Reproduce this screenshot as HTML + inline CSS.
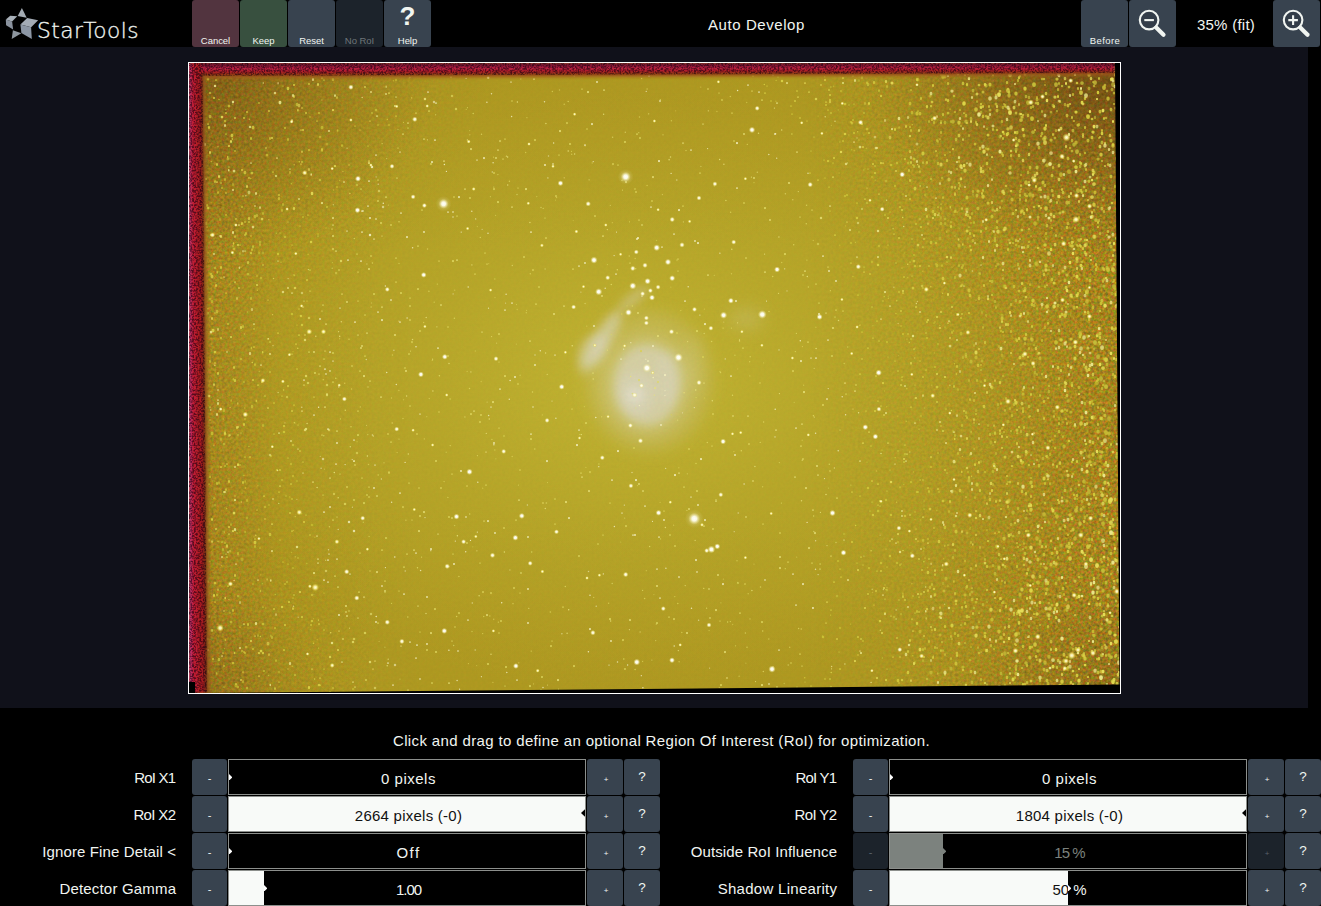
<!DOCTYPE html>
<html lang="en"><head><meta charset="utf-8"><title>StarTools - Auto Develop</title>
<style>
html,body{margin:0;padding:0;background:#000;}
body{width:1321px;height:906px;position:relative;overflow:hidden;font-family:"Liberation Sans","DejaVu Sans",sans-serif;font-size:15px;color:#f1f5f1;}
.abs{position:absolute;}
#topbar{position:absolute;left:0;top:0;width:1321px;height:47px;background:#000;}
.tb{position:absolute;top:0;width:47px;height:47px;border-radius:3px;background:#38434f;}
.tb span{position:absolute;left:0;right:0;top:35px;text-align:center;font-size:9.5px;line-height:12px;letter-spacing:-0.05px;color:#f1f5f1;white-space:nowrap;}
.tb.cancel{background:#52343f;}
.tb.keep{background:#38503f;}
.tb.dis{background:#1c232b;}
.tb.dis span{color:#6f7679;}
#logo{position:absolute;left:37px;top:17.3px;font-family:"DejaVu Sans Light","DejaVu Sans","Liberation Sans",sans-serif;font-weight:200;font-size:21.7px;line-height:28px;letter-spacing:0.45px;color:#eef2ee;white-space:nowrap;-webkit-text-stroke:0.35px #eef2ee;}
#title{position:absolute;left:556px;width:401px;top:15.5px;text-align:center;line-height:18px;letter-spacing:0.57px;color:#f1f5f1;white-space:nowrap;}
#zoomtxt{position:absolute;left:1176px;width:100px;top:15.7px;text-align:center;line-height:18px;letter-spacing:0.26px;color:#f1f5f1;white-space:nowrap;}
#view{position:absolute;left:0;top:47px;width:1308px;height:661px;background:#10111a;}
#panel{position:absolute;left:0;top:708px;width:1321px;height:198px;background:#000;}
#hint{position:absolute;left:0;width:1323px;top:731.7px;text-align:center;line-height:18px;letter-spacing:0.36px;white-space:nowrap;color:#f1f5f1;}
.lbl{position:absolute;text-align:right;line-height:18px;white-space:nowrap;color:#f1f5f1;}
.sb{position:absolute;height:36px;border-radius:3px;background:#38434f;color:#f1f5f1;text-align:center;}
.sb.dis{background:#1c232b;color:#59626a;}
.sb i{position:absolute;left:0;right:0;font-style:normal;text-align:center;}
.sl{position:absolute;width:358px;height:36px;box-sizing:border-box;border:1px solid #8c8f8c;background:#000;overflow:hidden;}
.sl .fill{position:absolute;left:0;top:0;bottom:0;background:#f8faf8;}
.sl .val{position:absolute;left:3px;right:0;top:10px;text-align:center;line-height:18px;color:#f1f5f1;white-space:nowrap;}
.sl .val.dk{color:#111;}
.sl .val.gr{color:#7c827e;}
</style></head>
<body>
<div id="topbar">
<svg class="abs" style="left:0;top:0" width="48" height="47" viewBox="0 0 48 47">
<polygon points="21.9,8.1 26.7,17.8 17.7,16.1" fill="#a3abb3"/>
<polygon points="5.8,19.6 10.2,15.8 17.2,16.3 12.1,21.4" fill="#a8b0b8"/>
<polygon points="5.8,19.6 12.1,21.4 13.1,29.4 6.1,25.3" fill="#8a929e"/>
<polygon points="20.4,24.6 27.2,18 38.1,20.2 31.1,27.3" fill="#a3abb5"/>
<polygon points="20.4,24.6 31.1,27.3 31.8,38.9 21.4,33.1" fill="#8c96a4"/>
<polygon points="12.9,30.2 21.4,33.3 11.7,38.9" fill="#8e969f"/>
</svg>
<div id="logo">StarTools</div>
<div class="tb cancel" style="left:192px"><span>Cancel</span></div>
<div class="tb keep" style="left:240px"><span>Keep</span></div>
<div class="tb" style="left:288px"><span>Reset</span></div>
<div class="tb dis" style="left:336px"><span>No RoI</span></div>
<div class="tb" style="left:384px"><div class="abs" style="left:0;right:0;top:1px;text-align:center;font-size:26px;line-height:30px;font-weight:bold;color:#f1f5f1">?</div><span>Help</span></div>
<div id="title">Auto Develop</div>
<div class="tb" style="left:1081px"><span style="letter-spacing:0.45px;left:1px">Before</span></div>
<div class="tb" style="left:1129px"><svg class="abs" style="left:0;top:0" width="47" height="47" viewBox="0 0 47 47" fill="none" stroke="#f1f5f1">
<circle cx="20.1" cy="20.1" r="9.3" stroke-width="2.1" fill="#333d48"/><path d="M27.2 27.5 L34.5 34.8" stroke-width="4.2" stroke-linecap="round"/><path d="M15.3 20.1 H24.9" stroke-width="2.1"/></svg></div>
<div id="zoomtxt">35% (fit)</div>
<div class="tb" style="left:1273px"><svg class="abs" style="left:0;top:0" width="47" height="47" viewBox="0 0 47 47" fill="none" stroke="#f1f5f1">
<circle cx="20.1" cy="20.1" r="9.3" stroke-width="2.1" fill="#333d48"/><path d="M27.2 27.5 L34.5 34.8" stroke-width="4.2" stroke-linecap="round"/><path d="M15.3 20.1 H24.9 M20.1 15.3 V24.9" stroke-width="2.1"/></svg></div>
</div>
<div id="view">
<div class="abs" style="left:188px;top:15px;width:931px;height:630px;border:1px solid #fff;background:#000;overflow:hidden"><svg class="abs" style="left:0;top:0" width="931" height="630" viewBox="0 0 931 630">
<defs>
<linearGradient id="hg" x1="0" x2="1" y1="0" y2="0">
<stop offset="0" stop-color="#a4821e"/><stop offset="0.04" stop-color="#a88c1e"/><stop offset="0.10" stop-color="#ae981f"/><stop offset="0.2" stop-color="#b09c22"/>
<stop offset="0.78" stop-color="#b09c22"/><stop offset="0.9" stop-color="#ab911f"/><stop offset="1" stop-color="#a5841d"/>
</linearGradient>
<radialGradient id="cg" cx="0.48" cy="0.5" r="0.5">
<stop offset="0" stop-color="#c4b836" stop-opacity="0.9"/><stop offset="0.45" stop-color="#c2b634" stop-opacity="0.45"/><stop offset="1" stop-color="#c0b432" stop-opacity="0"/>
</radialGradient>
<linearGradient id="vg" x1="0" x2="0" y1="0" y2="1">
<stop offset="0" stop-color="#987818" stop-opacity="0.12"/><stop offset="0.3" stop-color="#987818" stop-opacity="0"/><stop offset="0.7" stop-color="#987818" stop-opacity="0"/><stop offset="1" stop-color="#987818" stop-opacity="0.08"/>
</linearGradient>
<radialGradient id="cnr"><stop offset="0" stop-color="#56300e" stop-opacity="0.72"/><stop offset="0.5" stop-color="#684212" stop-opacity="0.38"/><stop offset="1" stop-color="#805818" stop-opacity="0"/></radialGradient>
<radialGradient id="sg"><stop offset="0" stop-color="#fffffa"/><stop offset="0.38" stop-color="#fffef0" stop-opacity="0.95"/><stop offset="0.7" stop-color="#f4eeb0" stop-opacity="0.45"/><stop offset="1" stop-color="#e8e080" stop-opacity="0"/></radialGradient>
<radialGradient id="sgm"><stop offset="0" stop-color="#fffef0"/><stop offset="0.38" stop-color="#fcf8d0" stop-opacity="0.95"/><stop offset="0.7" stop-color="#f0e898" stop-opacity="0.45"/><stop offset="1" stop-color="#e4da70" stop-opacity="0"/></radialGradient>
<radialGradient id="sgy"><stop offset="0" stop-color="#fffce0"/><stop offset="0.38" stop-color="#f8f0a0" stop-opacity="0.95"/><stop offset="0.7" stop-color="#e8dc60" stop-opacity="0.5"/><stop offset="1" stop-color="#d8cc40" stop-opacity="0"/></radialGradient>
<radialGradient id="sh"><stop offset="0" stop-color="#fff" stop-opacity="0.55"/><stop offset="0.5" stop-color="#f0ecc0" stop-opacity="0.25"/><stop offset="1" stop-color="#e8e090" stop-opacity="0"/></radialGradient>
<linearGradient id="lred" x1="0" x2="1" y1="0" y2="0">
<stop offset="0" stop-color="#b42c70"/><stop offset="0.28" stop-color="#b01c34"/><stop offset="0.62" stop-color="#a01a24"/><stop offset="0.8" stop-color="#8a3018"/><stop offset="1" stop-color="#a4741e" stop-opacity="0"/>
</linearGradient>
<linearGradient id="tred" x1="0" x2="0" y1="0" y2="1">
<stop offset="0" stop-color="#6c1030"/><stop offset="0.28" stop-color="#a01a34"/><stop offset="0.45" stop-color="#b8243c"/><stop offset="0.62" stop-color="#a0201c"/><stop offset="0.78" stop-color="#7c3416"/><stop offset="1" stop-color="#a4741e" stop-opacity="0"/>
</linearGradient>
<filter id="soft" x="0" y="0" width="100%" height="100%"><feGaussianBlur stdDeviation="0.45"/></filter>
<filter id="blur8" x="-50%" y="-50%" width="200%" height="200%"><feGaussianBlur stdDeviation="8"/></filter>
<filter id="blur3" x="-50%" y="-50%" width="200%" height="200%"><feGaussianBlur stdDeviation="3"/></filter>
<filter id="blur5" x="-50%" y="-50%" width="200%" height="200%"><feGaussianBlur stdDeviation="5"/></filter>
<filter id="grain" x="0" y="0" width="100%" height="100%" color-interpolation-filters="sRGB"><feTurbulence type="fractalNoise" baseFrequency="0.36" numOctaves="2" seed="2"/>
<feColorMatrix type="matrix" values="0.95 0 0 0 0.165  0 0.7 0 0 0.165  0 0 0.4 0 -0.08  0 0 0 0 1"/></filter>
<filter id="grain2" x="0" y="0" width="100%" height="100%" color-interpolation-filters="sRGB"><feTurbulence type="fractalNoise" baseFrequency="0.55" numOctaves="2" seed="4"/>
<feColorMatrix type="matrix" values="0 0 0 0 0.1  0 0 0 0 0  0 0 0 0 0.06  3.4 0 0 0 -1.3"/><feComposite in2="SourceGraphic" operator="in"/></filter>
<filter id="sblur" x="-5%" y="-5%" width="110%" height="110%"><feGaussianBlur stdDeviation="0.8"/></filter>
<linearGradient id="gm" x1="0" x2="1" y1="0" y2="0"><stop offset="0" stop-color="#fff" stop-opacity="0.5"/><stop offset="0.09" stop-color="#fff" stop-opacity="0.14"/><stop offset="0.25" stop-color="#fff" stop-opacity="0.04"/><stop offset="0.66" stop-color="#fff" stop-opacity="0.04"/><stop offset="0.85" stop-color="#fff" stop-opacity="0.25"/><stop offset="1" stop-color="#fff" stop-opacity="0.6"/></linearGradient>
<radialGradient id="cm"><stop offset="0" stop-color="#fff" stop-opacity="0.5"/><stop offset="0.55" stop-color="#fff" stop-opacity="0.2"/><stop offset="1" stop-color="#fff" stop-opacity="0"/></radialGradient>
<mask id="gmask"><rect width="931" height="630" fill="url(#gm)"/><ellipse cx="0" cy="0" rx="300" ry="260" fill="url(#cm)"/><ellipse cx="931" cy="0" rx="330" ry="300" fill="url(#cm)"/><ellipse cx="931" cy="630" rx="250" ry="200" fill="url(#cm)" opacity="0.7"/><ellipse cx="0" cy="630" rx="200" ry="160" fill="url(#cm)" opacity="0.6"/></mask>
</defs>
<rect width="931" height="630" fill="url(#hg)"/>
<rect width="931" height="630" fill="url(#cg)"/>
<rect width="931" height="630" fill="url(#vg)"/>
<g filter="url(#blur8)" fill="#dedac2">
<ellipse cx="460" cy="318" rx="62" ry="70" opacity="0.2"/>
<ellipse cx="458" cy="322" rx="44" ry="50" opacity="0.32"/>
<ellipse cx="557" cy="256" rx="18" ry="11" opacity="0.2"/>
<ellipse cx="505" cy="300" rx="10" ry="30" opacity="0.14"/>
</g>
<g filter="url(#blur5)" fill="#dcd9c8">
<ellipse cx="458" cy="322" rx="33" ry="40" opacity="0.62"/>
<ellipse cx="479" cy="314" rx="13" ry="27" opacity="0.3"/>
<ellipse cx="447" cy="331" rx="19" ry="21" opacity="0.5"/>
<ellipse cx="415" cy="274" rx="9" ry="30" transform="rotate(31 415 274)" opacity="0.6"/>
<ellipse cx="404" cy="288" rx="13" ry="19" transform="rotate(31 404 288)" opacity="0.5"/>
<ellipse cx="396" cy="303" rx="8" ry="10" opacity="0.3"/>
<ellipse cx="444" cy="236" rx="19" ry="6" transform="rotate(-38 444 236)" opacity="0.4"/>
</g>
<g filter="url(#blur3)" fill="#e8e6da"><ellipse cx="446" cy="332" rx="9" ry="8" opacity="0.5"/></g>
<g mask="url(#gmask)"><rect width="931" height="630" filter="url(#grain)"/></g>
<ellipse cx="931" cy="0" rx="260" ry="200" fill="url(#cnr)"/>
<ellipse cx="0" cy="0" rx="250" ry="200" fill="url(#cnr)" opacity="0.7"/>
<ellipse cx="0" cy="630" rx="140" ry="120" fill="url(#cnr)" opacity="0.35"/>
<ellipse cx="931" cy="630" rx="170" ry="130" fill="url(#cnr)" opacity="0.35"/>
<g filter="url(#soft)">
<path d="M109.9 360.7h0" stroke="#c4bc38" stroke-width="1.25" stroke-linecap="round" fill="none" opacity="0.6"/>
<path d="M709.6 292.7h0M124.9 531.7h0" stroke="#c4bc38" stroke-width="1.25" stroke-linecap="round" fill="none" opacity="0.8"/>
<path d="M580.1 8.2h0" stroke="#c4bc38" stroke-width="1.25" stroke-linecap="round" fill="none" opacity="0.9"/>
<path d="M726.0 456.6h0M9.8 343.3h0M97.8 138.4h0M711.6 459.4h0M781.4 464.6h0M35.6 585.4h0M720.7 482.2h0" stroke="#c4bc38" stroke-width="1.5" stroke-linecap="round" fill="none" opacity="0.6"/>
<path d="M730.5 357.1h0M698.3 458.3h0M34.4 356.1h0M714.7 421.4h0M586.9 38.2h0M747.8 447.5h0M124.5 555.7h0M73.3 520.8h0M633.6 573.0h0M26.2 220.0h0M672.2 10.5h0M1.0 276.8h0M649.2 47.1h0M695.5 328.1h0M674.9 72.1h0M683.5 529.4h0M642.4 62.5h0M742.6 322.3h0M36.9 46.7h0M635.7 13.7h0M70.3 308.5h0" stroke="#c4bc38" stroke-width="1.5" stroke-linecap="round" fill="none" opacity="0.8"/>
<path d="M674.8 107.1h0M29.0 83.8h0M11.3 274.4h0M86.3 531.6h0M60.3 56.3h0M735.5 345.1h0M693.4 595.1h0M144.7 127.1h0M58.4 249.1h0M650.9 79.1h0M92.0 199.2h0M683.9 262.7h0M117.8 500.6h0" stroke="#c4bc38" stroke-width="1.5" stroke-linecap="round" fill="none" opacity="0.9"/>
<path d="M68.0 212.5v1M726.5 627.4v1M35.3 468.7v1" stroke="#c4bc38" stroke-width="1.5" stroke-linecap="round" fill="none" opacity="0.8"/>
<path d="M748.8 610.0v1M710.1 63.9v1M43.3 75.6v1M69.9 466.0v1" stroke="#c4bc38" stroke-width="1.5" stroke-linecap="round" fill="none" opacity="0.9"/>
<path d="M171 67h0M106 360h0M94 23h0M726 285h0M689 625h0M616 619h0M699 294h0M733 520h0M650 589h0M91 170h0" stroke="#c4bc38" stroke-width="1.75" stroke-linecap="round" fill="none" opacity="0.6"/>
<path d="M866 217h0M791 103h0M761 46h0M798 539h0M848 283h0" stroke="#c4bc38" stroke-width="1.75" stroke-linecap="round" fill="none" opacity="0.7"/>
<path d="M608 624h0M701 407h0M625 74h0M622 88h0M51 564h0M726 550h0M678 364h0M697 486h0M29 526h0M118 123h0M713 205h0M838 121h0M52 370h0M787 237h0M768 8h0M64 521h0M821 610h0M726 335h0M679 106h0M665 41h0M616 627h0M589 14h0M681 448h0M790 210h0" stroke="#c4bc38" stroke-width="1.75" stroke-linecap="round" fill="none" opacity="0.8"/>
<path d="M37 491h0M723 213h0M117 452h0M751 76h0M780 164h0M698 428h0M25 435h0M683 439h0M761 89h0M752 141h0M691 443h0M90 619h0" stroke="#c4bc38" stroke-width="1.75" stroke-linecap="round" fill="none" opacity="0.9"/>
<path d="M868 231h0" stroke="#c4bc38" stroke-width="1.75" stroke-linecap="round" fill="none" opacity="1.0"/>
<path d="M748 92v1M20 7v1M784 131v1" stroke="#c4bc38" stroke-width="1.75" stroke-linecap="round" fill="none" opacity="0.6"/>
<path d="M837 484v1M836 301v1M798 621v1" stroke="#c4bc38" stroke-width="1.75" stroke-linecap="round" fill="none" opacity="0.7"/>
<path d="M785 282v1M713 7v1M51 190v1M860 459v1M54 618v1M36 368v1M734 597v1M69 572v1M811 299v1" stroke="#c4bc38" stroke-width="1.75" stroke-linecap="round" fill="none" opacity="0.8"/>
<path d="M10 9v1M789 584v1" stroke="#c4bc38" stroke-width="1.75" stroke-linecap="round" fill="none" opacity="0.9"/>
<path d="M874 373v1" stroke="#c4bc38" stroke-width="1.75" stroke-linecap="round" fill="none" opacity="1.0"/>
<path d="M782 160h0M48 470h0M790 233h0M121 54h0M766 173h0M99 606h0M670 169h0M761 259h0M670 77h0" stroke="#c4bc38" stroke-width="2.0" stroke-linecap="round" fill="none" opacity="0.6"/>
<path d="M869 34h0M871 530h0" stroke="#c4bc38" stroke-width="2.0" stroke-linecap="round" fill="none" opacity="0.7"/>
<path d="M710 537h0M707 200h0M709 388h0M749 281h0M712 551h0M865 348h0M758 410h0M909 144h0M70 40h0M15 219h0M49 372h0M673 10h0M55 319h0M26 250h0M655 471h0M14 398h0M54 133h0M724 533h0M841 451h0M722 490h0M109 495h0M32 120h0M723 176h0" stroke="#c4bc38" stroke-width="2.0" stroke-linecap="round" fill="none" opacity="0.8"/>
<path d="M183 50h0M29 527h0M664 13h0M56 159h0M768 106h0M815 485h0M734 417h0M792 307h0M71 179h0M19 250h0M27 17h0M7 430h0" stroke="#c4bc38" stroke-width="2.0" stroke-linecap="round" fill="none" opacity="0.9"/>
<path d="M913 98h0" stroke="#c4bc38" stroke-width="2.0" stroke-linecap="round" fill="none" opacity="1.0"/>
<path d="M792 398v1M752 154v1M31 156v1M44 121v1M764 368v1M779 175v1M799 362v1M680 4v1M793 249v1" stroke="#c4bc38" stroke-width="2.0" stroke-linecap="round" fill="none" opacity="0.6"/>
<path d="M752 58v1M849 156v1" stroke="#c4bc38" stroke-width="2.0" stroke-linecap="round" fill="none" opacity="0.7"/>
<path d="M830 570v1M847 533v1M870 20v1M877 239v1M892 271v1M673 14v1M780 317v1M814 215v1M931 610v1M698 23v1M777 207v1M821 345v1M911 456v1M7 181v1M853 48v1M4 562v1M740 58v1" stroke="#c4bc38" stroke-width="2.0" stroke-linecap="round" fill="none" opacity="0.8"/>
<path d="M743 521v1M817 335v1M834 300v1M777 349v1" stroke="#c4bc38" stroke-width="2.0" stroke-linecap="round" fill="none" opacity="0.9"/>
<path d="M827 88v1M895 590v1M804 66v1M820 29v1M896 387v1M814 75v1" stroke="#c4bc38" stroke-width="2.0" stroke-linecap="round" fill="none" opacity="1.0"/>
<path d="M97 433h0M735 485h0" stroke="#c4bc38" stroke-width="2.25" stroke-linecap="round" fill="none" opacity="0.6"/>
<path d="M895 423h0M868 48h0M905 147h0M883 175h0" stroke="#c4bc38" stroke-width="2.25" stroke-linecap="round" fill="none" opacity="0.7"/>
<path d="M38 401h0M686 103h0M821 605h0M772 562h0M105 532h0M98 519h0M51 402h0M776 580h0M675 50h0M737 270h0M918 172h0M756 314h0M683 244h0M814 313h0M690 278h0M837 133h0M918 483h0M76 333h0" stroke="#c4bc38" stroke-width="2.25" stroke-linecap="round" fill="none" opacity="0.8"/>
<path d="M729 429h0M829 484h0M106 612h0M804 168h0M641 616h0M753 579h0M834 486h0M822 368h0M709 308h0M81 309h0M81 279h0" stroke="#c4bc38" stroke-width="2.25" stroke-linecap="round" fill="none" opacity="0.9"/>
<path d="M804 12h0M922 511h0" stroke="#c4bc38" stroke-width="2.25" stroke-linecap="round" fill="none" opacity="1.0"/>
<path d="M783 150v1M807 390v1M756 160v1M777 524v1" stroke="#c4bc38" stroke-width="2.25" stroke-linecap="round" fill="none" opacity="0.6"/>
<path d="M906 54v1M866 450v1M867 459v1M900 118v1M827 276v1M836 280v1" stroke="#c4bc38" stroke-width="2.25" stroke-linecap="round" fill="none" opacity="0.7"/>
<path d="M68 152v1M881 483v1M804 502v1M794 541v1M782 505v1M869 26v1M775 630v1M774 294v1M816 622v1M911 388v1M906 485v1M910 157v1M832 368v1M809 341v1M83 574v1M864 132v1M764 494v1M723 3v1M806 238v1M829 17v1" stroke="#c4bc38" stroke-width="2.25" stroke-linecap="round" fill="none" opacity="0.8"/>
<path d="M822 241v1M822 471v1M825 341v1" stroke="#c4bc38" stroke-width="2.25" stroke-linecap="round" fill="none" opacity="0.9"/>
<path d="M906 587v1M776 11v1M919 168v1M886 435v1M838 619v1" stroke="#c4bc38" stroke-width="2.25" stroke-linecap="round" fill="none" opacity="1.0"/>
<path d="M2 573h0M5 379h0" stroke="#c4bc38" stroke-width="2.5" stroke-linecap="round" fill="none" opacity="0.6"/>
<path d="M895 436h0" stroke="#c4bc38" stroke-width="2.5" stroke-linecap="round" fill="none" opacity="0.7"/>
<path d="M678 140h0M756 156h0M905 23h0M698 527h0M860 207h0M848 526h0M26 205h0M853 16h0M648 533h0M905 286h0M912 429h0M642 624h0M58 625h0M870 322h0M21 30h0M860 540h0" stroke="#c4bc38" stroke-width="2.5" stroke-linecap="round" fill="none" opacity="0.8"/>
<path d="M825 552h0M850 224h0M187 47h0M716 391h0M738 616h0M608 1h0M860 323h0M848 397h0" stroke="#c4bc38" stroke-width="2.5" stroke-linecap="round" fill="none" opacity="0.9"/>
<path d="M852 501h0" stroke="#c4bc38" stroke-width="2.5" stroke-linecap="round" fill="none" opacity="1.0"/>
<path d="M754 520v1M787 347v1" stroke="#c4bc38" stroke-width="2.5" stroke-linecap="round" fill="none" opacity="0.6"/>
<path d="M840 34v1M926 578v1M860 328v1M891 103v1M876 41v1M896 454v1M822 461v1" stroke="#c4bc38" stroke-width="2.5" stroke-linecap="round" fill="none" opacity="0.7"/>
<path d="M827 237v1M869 242v1M812 610v1M899 425v1M17 160v1M928 194v1M883 77v1M782 55v1M930 17v1M882 426v1M720 4v1M783 619v1M880 139v1M108 41v1M839 506v1M777 291v1M837 33v1M836 131v1M876 217v1M839 109v1M854 395v1M896 340v1" stroke="#c4bc38" stroke-width="2.5" stroke-linecap="round" fill="none" opacity="0.8"/>
<path d="M839 183v1M679 21v1M767 76v1M806 177v1M30 596v1M840 343v1" stroke="#c4bc38" stroke-width="2.5" stroke-linecap="round" fill="none" opacity="0.9"/>
<path d="M876 427v1M774 20v1M901 217v1M846 9v1" stroke="#c4bc38" stroke-width="2.5" stroke-linecap="round" fill="none" opacity="1.0"/>
<path d="M5 564h0M74 190h0M138 81h0M5 1h0M44 183h0" stroke="#c4bc38" stroke-width="2.75" stroke-linecap="round" fill="none" opacity="0.6"/>
<path d="M904 572h0M914 137h0M862 49h0M820 177h0M918 28h0" stroke="#c4bc38" stroke-width="2.75" stroke-linecap="round" fill="none" opacity="0.7"/>
<path d="M832 302h0M869 533h0M908 115h0M866 75h0M801 47h0M49 533h0M785 545h0M731 156h0M35 381h0M893 199h0M863 542h0M697 118h0M705 554h0" stroke="#c4bc38" stroke-width="2.75" stroke-linecap="round" fill="none" opacity="0.8"/>
<path d="M59 211h0M6 122h0" stroke="#c4bc38" stroke-width="2.75" stroke-linecap="round" fill="none" opacity="0.9"/>
<path d="M926 347h0" stroke="#c4bc38" stroke-width="2.75" stroke-linecap="round" fill="none" opacity="1.0"/>
<path d="M53 496v1M813 252v1M751 175v1" stroke="#c4bc38" stroke-width="2.75" stroke-linecap="round" fill="none" opacity="0.6"/>
<path d="M900 25v1M906 400v1M910 234v1M923 230v1M846 309v1M913 584v1" stroke="#c4bc38" stroke-width="2.75" stroke-linecap="round" fill="none" opacity="0.7"/>
<path d="M918 204v1M900 476v1M851 295v1M810 505v1M6 569v1M806 510v1M930 375v1M906 173v1M888 198v1M914 432v1M884 67v1M784 27v1M912 393v1M899 400v1M858 519v1M21 53v1M922 183v1" stroke="#c4bc38" stroke-width="2.75" stroke-linecap="round" fill="none" opacity="0.8"/>
<path d="M66 153v1M803 218v1M789 145v1" stroke="#c4bc38" stroke-width="2.75" stroke-linecap="round" fill="none" opacity="0.9"/>
<path d="M927 592v1M922 113v1M874 129v1M926 496v1M922 490v1" stroke="#c4bc38" stroke-width="2.75" stroke-linecap="round" fill="none" opacity="1.0"/>
<path d="M882 349h0M859 546h0M783 529h0" stroke="#c4bc38" stroke-width="3.0" stroke-linecap="round" fill="none" opacity="0.8"/>
<path d="M871 150h0M878 212h0" stroke="#c4bc38" stroke-width="3.0" stroke-linecap="round" fill="none" opacity="1.0"/>
<path d="M851 480v1M827 86v1M900 393v1M811 73v1" stroke="#c4bc38" stroke-width="3.0" stroke-linecap="round" fill="none" opacity="0.7"/>
<path d="M797 22v1M762 605v1M870 515v1" stroke="#c4bc38" stroke-width="3.0" stroke-linecap="round" fill="none" opacity="0.8"/>
<path d="M780 417v1M782 298v1" stroke="#c4bc38" stroke-width="3.0" stroke-linecap="round" fill="none" opacity="0.9"/>
<path d="M848 104v1M821 104v1" stroke="#c4bc38" stroke-width="3.0" stroke-linecap="round" fill="none" opacity="1.0"/>
<path d="M837 455h0M928 339h0" stroke="#c4bc38" stroke-width="3.25" stroke-linecap="round" fill="none" opacity="0.7"/>
<path d="M929 498h0M804 147h0M774 604h0" stroke="#c4bc38" stroke-width="3.25" stroke-linecap="round" fill="none" opacity="0.8"/>
<path d="M833 54h0M868 16h0" stroke="#c4bc38" stroke-width="3.25" stroke-linecap="round" fill="none" opacity="1.0"/>
<path d="M824 449v1M820 437v1M860 593v1M920 370v1M764 58v1M885 81v1" stroke="#c4bc38" stroke-width="3.25" stroke-linecap="round" fill="none" opacity="0.8"/>
<path d="M827 30v1M897 181v1" stroke="#c4bc38" stroke-width="3.25" stroke-linecap="round" fill="none" opacity="1.0"/>
<path d="M879 338h0" stroke="#c4bc38" stroke-width="3.5" stroke-linecap="round" fill="none" opacity="0.7"/>
<path d="M837 600h0M792 44h0" stroke="#c4bc38" stroke-width="3.5" stroke-linecap="round" fill="none" opacity="0.8"/>
<path d="M881 285h0" stroke="#c4bc38" stroke-width="3.5" stroke-linecap="round" fill="none" opacity="1.0"/>
<path d="M859 551v1" stroke="#c4bc38" stroke-width="3.5" stroke-linecap="round" fill="none" opacity="0.7"/>
<path d="M828 81v1M747 1v1M855 451v1M816 590v1" stroke="#c4bc38" stroke-width="3.5" stroke-linecap="round" fill="none" opacity="0.8"/>
<path d="M893 20h0M890 622h0M844 69h0M930 542h0" stroke="#c4bc38" stroke-width="3.75" stroke-linecap="round" fill="none" opacity="0.8"/>
<path d="M924 21v1M873 618v1M920 355v1" stroke="#c4bc38" stroke-width="3.75" stroke-linecap="round" fill="none" opacity="0.7"/>
<path d="M909 293v1M912 315v1M900 428v1M925 223v1" stroke="#c4bc38" stroke-width="3.75" stroke-linecap="round" fill="none" opacity="0.8"/>
<path d="M914 507v1M906 279v1M917 323v1M871 3v1M845 21v1" stroke="#c4bc38" stroke-width="3.75" stroke-linecap="round" fill="none" opacity="1.0"/>
<path d="M121.3 566.5h0M629.1 53.1h0" stroke="#c8be34" stroke-width="1.25" stroke-linecap="round" fill="none" opacity="0.8"/>
<path d="M656.6 162.9h0M637.2 69.1h0M650.7 182.2h0" stroke="#c8be34" stroke-width="1.25" stroke-linecap="round" fill="none" opacity="0.9"/>
<path d="M687.3 310.5h0M4.8 581.3h0M713.8 313.5h0M715.6 190.0h0M71.7 511.8h0M797.4 253.6h0M734.6 488.1h0M746.0 156.9h0" stroke="#c8be34" stroke-width="1.5" stroke-linecap="round" fill="none" opacity="0.6"/>
<path d="M696.0 522.1h0M5.6 364.9h0M125.9 474.3h0M662.6 86.7h0M686.2 117.2h0M691.1 347.5h0M204.4 17.8h0M644.5 23.3h0M701.0 260.1h0M754.6 495.8h0M22.3 98.4h0M650.1 110.1h0M112.7 450.8h0M150.6 117.6h0M12.0 168.7h0M699.2 233.2h0M718.7 214.4h0M665.3 87.5h0" stroke="#c8be34" stroke-width="1.5" stroke-linecap="round" fill="none" opacity="0.8"/>
<path d="M724.4 408.9h0M39.9 536.5h0M735.1 437.9h0M773.4 393.4h0M55.8 345.1h0" stroke="#c8be34" stroke-width="1.5" stroke-linecap="round" fill="none" opacity="0.9"/>
<path d="M781.0 465.6v1" stroke="#c8be34" stroke-width="1.5" stroke-linecap="round" fill="none" opacity="0.6"/>
<path d="M2.7 176.3v1M780.8 391.3v1M56.2 418.1v1M42.2 337.0v1M745.3 532.0v1M81.9 572.3v1" stroke="#c8be34" stroke-width="1.5" stroke-linecap="round" fill="none" opacity="0.8"/>
<path d="M744.3 593.1v1" stroke="#c8be34" stroke-width="1.5" stroke-linecap="round" fill="none" opacity="0.9"/>
<path d="M53 430h0M686 89h0M106 141h0M137 165h0M108 262h0M32 1h0M678 399h0M30 348h0M41 221h0M135 530h0" stroke="#c8be34" stroke-width="1.75" stroke-linecap="round" fill="none" opacity="0.6"/>
<path d="M874 359h0" stroke="#c8be34" stroke-width="1.75" stroke-linecap="round" fill="none" opacity="0.7"/>
<path d="M91 477h0M166 63h0M74 544h0M179 83h0M111 163h0M99 501h0M756 264h0M636 115h0M851 294h0M698 504h0M736 495h0M644 100h0M882 334h0M804 382h0M745 260h0M668 500h0M104 535h0M714 131h0M94 499h0M792 589h0M618 58h0M693 387h0M129 171h0M103 182h0M831 482h0M51 182h0M118 238h0M794 103h0" stroke="#c8be34" stroke-width="1.75" stroke-linecap="round" fill="none" opacity="0.8"/>
<path d="M699 182h0M85 371h0M34 590h0M846 240h0M845 282h0M135 606h0M727 466h0M734 478h0M622 623h0M641 148h0" stroke="#c8be34" stroke-width="1.75" stroke-linecap="round" fill="none" opacity="0.9"/>
<path d="M7 590v1M670 17v1M796 434v1M792 318v1" stroke="#c8be34" stroke-width="1.75" stroke-linecap="round" fill="none" opacity="0.6"/>
<path d="M30 419v1M854 207v1M797 85v1M770 98v1M848 245v1M769 326v1M801 105v1M883 303v1M813 365v1M842 275v1M786 434v1M857 175v1M788 38v1M762 58v1M42 461v1" stroke="#c8be34" stroke-width="1.75" stroke-linecap="round" fill="none" opacity="0.8"/>
<path d="M17 443v1M87 597v1M838 447v1" stroke="#c8be34" stroke-width="1.75" stroke-linecap="round" fill="none" opacity="0.9"/>
<path d="M876 346v1M826 614v1M861 420v1M856 223v1M873 245v1" stroke="#c8be34" stroke-width="1.75" stroke-linecap="round" fill="none" opacity="1.0"/>
<path d="M660 42h0M189 62h0M726 449h0M760 341h0M21 357h0M746 259h0M26 442h0M5 21h0M80 442h0M726 87h0M41 550h0" stroke="#c8be34" stroke-width="2.0" stroke-linecap="round" fill="none" opacity="0.6"/>
<path d="M856 22h0M863 377h0" stroke="#c8be34" stroke-width="2.0" stroke-linecap="round" fill="none" opacity="0.7"/>
<path d="M894 444h0M848 597h0M848 441h0M815 41h0M674 578h0M747 201h0M33 125h0M70 190h0M779 409h0M749 390h0M798 66h0M736 132h0M710 620h0M104 505h0M46 88h0M757 346h0M37 152h0M114 154h0M913 561h0M582 38h0M777 353h0M750 429h0M917 399h0M877 244h0M148 124h0M36 480h0M921 427h0" stroke="#c8be34" stroke-width="2.0" stroke-linecap="round" fill="none" opacity="0.8"/>
<path d="M66 476h0M813 518h0M70 4h0M93 417h0M725 192h0M53 588h0M842 415h0" stroke="#c8be34" stroke-width="2.0" stroke-linecap="round" fill="none" opacity="0.9"/>
<path d="M845 551h0" stroke="#c8be34" stroke-width="2.0" stroke-linecap="round" fill="none" opacity="1.0"/>
<path d="M714 626v1M726 599v1" stroke="#c8be34" stroke-width="2.0" stroke-linecap="round" fill="none" opacity="0.6"/>
<path d="M898 452v1M848 311v1M830 183v1M780 72v1" stroke="#c8be34" stroke-width="2.0" stroke-linecap="round" fill="none" opacity="0.7"/>
<path d="M766 487v1M919 541v1M5 84v1M66 483v1M774 202v1M766 372v1M903 338v1M736 585v1M99 76v1M840 285v1M21 298v1M71 181v1M760 448v1M776 539v1M875 531v1M74 150v1M36 116v1M748 77v1M837 391v1M869 494v1M931 419v1M58 437v1M890 154v1M752 145v1M848 34v1M848 542v1" stroke="#c8be34" stroke-width="2.0" stroke-linecap="round" fill="none" opacity="0.8"/>
<path d="M722 67v1M769 390v1M773 362v1M20 553v1M54 263v1M788 317v1M762 573v1M7 441v1M81 75v1M62 75v1M763 269v1" stroke="#c8be34" stroke-width="2.0" stroke-linecap="round" fill="none" opacity="0.9"/>
<path d="M892 183v1M865 353v1M891 99v1M899 4v1" stroke="#c8be34" stroke-width="2.0" stroke-linecap="round" fill="none" opacity="1.0"/>
<path d="M764 548h0M46 433h0M108 418h0M798 467h0" stroke="#c8be34" stroke-width="2.25" stroke-linecap="round" fill="none" opacity="0.6"/>
<path d="M783 624h0M832 112h0M919 451h0M904 19h0M853 244h0M819 419h0M772 63h0M884 626h0" stroke="#c8be34" stroke-width="2.25" stroke-linecap="round" fill="none" opacity="0.7"/>
<path d="M823 306h0M886 165h0M108 306h0M739 476h0M927 403h0M722 27h0M709 479h0M917 243h0M664 57h0M813 540h0M36 403h0M722 276h0M121 472h0M696 152h0M805 586h0M682 383h0M894 389h0M85 340h0M26 300h0M724 102h0" stroke="#c8be34" stroke-width="2.25" stroke-linecap="round" fill="none" opacity="0.8"/>
<path d="M86 565h0M65 284h0M812 268h0M654 78h0M827 182h0M101 291h0" stroke="#c8be34" stroke-width="2.25" stroke-linecap="round" fill="none" opacity="0.9"/>
<path d="M838 133h0" stroke="#c8be34" stroke-width="2.25" stroke-linecap="round" fill="none" opacity="1.0"/>
<path d="M810 283v1M133 87v1" stroke="#c8be34" stroke-width="2.25" stroke-linecap="round" fill="none" opacity="0.6"/>
<path d="M867 67v1M885 212v1M890 61v1M913 430v1M870 355v1M905 469v1M881 182v1" stroke="#c8be34" stroke-width="2.25" stroke-linecap="round" fill="none" opacity="0.7"/>
<path d="M771 122v1M772 115v1M784 128v1M842 44v1M896 294v1M35 347v1M884 31v1M925 217v1M926 123v1M834 345v1M853 277v1M766 214v1M745 59v1M891 91v1M697 7v1M857 170v1M813 58v1M792 616v1M752 69v1M49 490v1" stroke="#c8be34" stroke-width="2.25" stroke-linecap="round" fill="none" opacity="0.8"/>
<path d="M797 165v1M829 445v1M766 570v1M822 268v1M808 164v1M823 352v1M808 158v1M769 572v1M773 204v1" stroke="#c8be34" stroke-width="2.25" stroke-linecap="round" fill="none" opacity="0.9"/>
<path d="M888 534v1M896 35v1M859 563v1M822 92v1M897 229v1" stroke="#c8be34" stroke-width="2.25" stroke-linecap="round" fill="none" opacity="1.0"/>
<path d="M200 62h0M7 404h0M683 114h0" stroke="#c8be34" stroke-width="2.5" stroke-linecap="round" fill="none" opacity="0.6"/>
<path d="M902 299h0M840 354h0M918 403h0M817 44h0M848 519h0M908 204h0" stroke="#c8be34" stroke-width="2.5" stroke-linecap="round" fill="none" opacity="0.7"/>
<path d="M847 493h0M877 356h0M76 444h0M852 73h0M866 373h0M766 399h0M840 179h0M2 0h0M36 58h0M840 166h0M881 85h0M831 394h0M804 0h0M824 473h0M806 175h0M881 484h0" stroke="#c8be34" stroke-width="2.5" stroke-linecap="round" fill="none" opacity="0.8"/>
<path d="M96 174h0M834 399h0M708 100h0M708 500h0M656 133h0" stroke="#c8be34" stroke-width="2.5" stroke-linecap="round" fill="none" opacity="0.9"/>
<path d="M845 144h0M860 556h0M883 399h0" stroke="#c8be34" stroke-width="2.5" stroke-linecap="round" fill="none" opacity="1.0"/>
<path d="M831 128v1M861 391v1M729 16v1M917 406v1M792 49v1M856 264v1M814 44v1" stroke="#c8be34" stroke-width="2.5" stroke-linecap="round" fill="none" opacity="0.7"/>
<path d="M890 324v1M883 320v1M813 90v1M918 456v1M777 52v1M904 244v1M752 160v1M894 629v1M5 92v1M814 539v1M918 301v1M723 49v1" stroke="#c8be34" stroke-width="2.5" stroke-linecap="round" fill="none" opacity="0.8"/>
<path d="M749 100v1M779 152v1M63 343v1M770 94v1" stroke="#c8be34" stroke-width="2.5" stroke-linecap="round" fill="none" opacity="0.9"/>
<path d="M874 525v1M878 164v1M794 53v1M908 272v1M863 216v1M855 491v1M896 189v1M912 240v1M928 390v1M834 583v1M819 70v1M866 545v1" stroke="#c8be34" stroke-width="2.5" stroke-linecap="round" fill="none" opacity="1.0"/>
<path d="M148 8h0M12 622h0M58 455h0" stroke="#c8be34" stroke-width="2.75" stroke-linecap="round" fill="none" opacity="0.6"/>
<path d="M781 597h0M898 216h0M862 9h0M849 291h0M813 138h0" stroke="#c8be34" stroke-width="2.75" stroke-linecap="round" fill="none" opacity="0.7"/>
<path d="M719 100h0M728 560h0M787 539h0M915 296h0M52 296h0M884 586h0M891 527h0M15 518h0M884 411h0M888 182h0M839 468h0M72 215h0M78 92h0M20 477h0M894 133h0M918 385h0M15 494h0M740 429h0M42 559h0" stroke="#c8be34" stroke-width="2.75" stroke-linecap="round" fill="none" opacity="0.8"/>
<path d="M732 531h0M45 186h0M644 3h0" stroke="#c8be34" stroke-width="2.75" stroke-linecap="round" fill="none" opacity="0.9"/>
<path d="M895 124h0M925 187h0" stroke="#c8be34" stroke-width="2.75" stroke-linecap="round" fill="none" opacity="1.0"/>
<path d="M47 622v1M813 292v1" stroke="#c8be34" stroke-width="2.75" stroke-linecap="round" fill="none" opacity="0.6"/>
<path d="M893 438v1M756 59v1M878 605v1M923 26v1M898 430v1M839 250v1M912 496v1M877 3v1M864 42v1" stroke="#c8be34" stroke-width="2.75" stroke-linecap="round" fill="none" opacity="0.7"/>
<path d="M878 629v1M859 620v1M133 64v1M928 175v1M808 47v1M772 270v1M922 77v1M905 572v1M915 125v1M838 389v1M836 225v1M888 444v1" stroke="#c8be34" stroke-width="2.75" stroke-linecap="round" fill="none" opacity="0.8"/>
<path d="M748 202v1M23 370v1M836 490v1" stroke="#c8be34" stroke-width="2.75" stroke-linecap="round" fill="none" opacity="0.9"/>
<path d="M913 355v1M858 617v1M863 112v1M892 127v1M894 165v1M903 74v1" stroke="#c8be34" stroke-width="2.75" stroke-linecap="round" fill="none" opacity="1.0"/>
<path d="M769 4h0" stroke="#c8be34" stroke-width="3.0" stroke-linecap="round" fill="none" opacity="0.7"/>
<path d="M890 216h0M807 41h0" stroke="#c8be34" stroke-width="3.0" stroke-linecap="round" fill="none" opacity="0.8"/>
<path d="M773 222h0M776 532h0" stroke="#c8be34" stroke-width="3.0" stroke-linecap="round" fill="none" opacity="0.9"/>
<path d="M819 358v1M802 379v1" stroke="#c8be34" stroke-width="3.0" stroke-linecap="round" fill="none" opacity="0.6"/>
<path d="M872 482v1" stroke="#c8be34" stroke-width="3.0" stroke-linecap="round" fill="none" opacity="0.7"/>
<path d="M827 610v1M875 383v1M847 200v1M787 294v1M831 531v1M827 603v1M858 526v1M885 244v1" stroke="#c8be34" stroke-width="3.0" stroke-linecap="round" fill="none" opacity="0.8"/>
<path d="M854 119v1M801 21v1" stroke="#c8be34" stroke-width="3.0" stroke-linecap="round" fill="none" opacity="1.0"/>
<path d="M741 33h0" stroke="#c8be34" stroke-width="3.25" stroke-linecap="round" fill="none" opacity="0.7"/>
<path d="M915 216h0M858 627h0M915 223h0M926 226h0M909 96h0M900 118h0" stroke="#c8be34" stroke-width="3.25" stroke-linecap="round" fill="none" opacity="0.8"/>
<path d="M834 331h0" stroke="#c8be34" stroke-width="3.25" stroke-linecap="round" fill="none" opacity="0.9"/>
<path d="M889 62h0" stroke="#c8be34" stroke-width="3.25" stroke-linecap="round" fill="none" opacity="1.0"/>
<path d="M911 394v1M875 597v1M929 273v1" stroke="#c8be34" stroke-width="3.25" stroke-linecap="round" fill="none" opacity="0.7"/>
<path d="M914 527v1M887 79v1M916 401v1" stroke="#c8be34" stroke-width="3.25" stroke-linecap="round" fill="none" opacity="0.8"/>
<path d="M803 556v1M794 628v1" stroke="#c8be34" stroke-width="3.25" stroke-linecap="round" fill="none" opacity="0.9"/>
<path d="M929 517v1M907 8v1" stroke="#c8be34" stroke-width="3.25" stroke-linecap="round" fill="none" opacity="1.0"/>
<path d="M849 588h0" stroke="#c8be34" stroke-width="3.5" stroke-linecap="round" fill="none" opacity="0.8"/>
<path d="M901 399h0" stroke="#c8be34" stroke-width="3.5" stroke-linecap="round" fill="none" opacity="1.0"/>
<path d="M848 201v1" stroke="#c8be34" stroke-width="3.5" stroke-linecap="round" fill="none" opacity="0.7"/>
<path d="M848 475v1M849 519v1M841 131v1M846 160v1" stroke="#c8be34" stroke-width="3.5" stroke-linecap="round" fill="none" opacity="0.8"/>
<path d="M754 13v1" stroke="#c8be34" stroke-width="3.5" stroke-linecap="round" fill="none" opacity="1.0"/>
<path d="M858 102h0M912 355h0M931 322h0M909 272h0" stroke="#c8be34" stroke-width="3.75" stroke-linecap="round" fill="none" opacity="0.8"/>
<path d="M908 319v1M818 7v1M880 108v1" stroke="#c8be34" stroke-width="3.75" stroke-linecap="round" fill="none" opacity="0.7"/>
<path d="M872 111v1M914 460v1M858 624v1" stroke="#c8be34" stroke-width="3.75" stroke-linecap="round" fill="none" opacity="0.8"/>
<path d="M928 95v1M843 55v1" stroke="#c8be34" stroke-width="3.75" stroke-linecap="round" fill="none" opacity="1.0"/>
<path d="M167.1 79.6h0M710.9 378.0h0M128.3 576.6h0M104.0 288.3h0" stroke="#d0c83a" stroke-width="1.25" stroke-linecap="round" fill="none" opacity="0.6"/>
<path d="M220.1 15.1h0M236.7 7.0h0" stroke="#d0c83a" stroke-width="1.25" stroke-linecap="round" fill="none" opacity="0.8"/>
<path d="M100.8 433.9h0M587.1 17.4h0" stroke="#d0c83a" stroke-width="1.25" stroke-linecap="round" fill="none" opacity="0.9"/>
<path d="M612.1 0.1h0M731.7 457.1h0M738.5 504.8h0M76.9 544.9h0M111.3 252.6h0M102.5 489.6h0" stroke="#d0c83a" stroke-width="1.5" stroke-linecap="round" fill="none" opacity="0.6"/>
<path d="M750.7 152.8h0M14.4 538.6h0M182.7 14.4h0M663.9 213.5h0M68.4 227.3h0M52.4 161.5h0M713.9 533.6h0M103.2 603.2h0M722.9 520.8h0M8.9 514.6h0M665.8 598.4h0M794.2 342.7h0M30.0 36.6h0M153.9 108.4h0M723.8 592.7h0M723.3 61.7h0M102.3 120.7h0M59.9 383.6h0" stroke="#d0c83a" stroke-width="1.5" stroke-linecap="round" fill="none" opacity="0.8"/>
<path d="M615.7 614.7h0M6.9 337.1h0" stroke="#d0c83a" stroke-width="1.5" stroke-linecap="round" fill="none" opacity="0.9"/>
<path d="M90.0 608.5v1" stroke="#d0c83a" stroke-width="1.5" stroke-linecap="round" fill="none" opacity="0.6"/>
<path d="M148.6 67.1v1M763.0 427.5v1M71.5 527.6v1M36.4 576.5v1" stroke="#d0c83a" stroke-width="1.5" stroke-linecap="round" fill="none" opacity="0.8"/>
<path d="M764.9 517.9v1" stroke="#d0c83a" stroke-width="1.5" stroke-linecap="round" fill="none" opacity="0.9"/>
<path d="M701 149h0M759 523h0M71 485h0M726 322h0M635 97h0M35 624h0M40 104h0M698 606h0M99 159h0M578 23h0M735 446h0" stroke="#d0c83a" stroke-width="1.75" stroke-linecap="round" fill="none" opacity="0.6"/>
<path d="M825 567h0M845 551h0" stroke="#d0c83a" stroke-width="1.75" stroke-linecap="round" fill="none" opacity="0.7"/>
<path d="M603 51h0M135 17h0M737 307h0M721 199h0M93 333h0M119 152h0M688 508h0M26 539h0M807 203h0M84 109h0M722 301h0M759 482h0M651 506h0M640 124h0M856 380h0M668 140h0M671 433h0M602 43h0M768 149h0M56 394h0M729 48h0M639 47h0M828 570h0M790 559h0M677 348h0" stroke="#d0c83a" stroke-width="1.75" stroke-linecap="round" fill="none" opacity="0.8"/>
<path d="M621 110h0M689 442h0M704 594h0M105 342h0M207 53h0M688 258h0M37 230h0M714 532h0M711 424h0M749 144h0M673 269h0" stroke="#d0c83a" stroke-width="1.75" stroke-linecap="round" fill="none" opacity="0.9"/>
<path d="M785 359v1" stroke="#d0c83a" stroke-width="1.75" stroke-linecap="round" fill="none" opacity="0.6"/>
<path d="M859 260v1M835 480v1" stroke="#d0c83a" stroke-width="1.75" stroke-linecap="round" fill="none" opacity="0.7"/>
<path d="M807 244v1M756 611v1M29 129v1M762 595v1M153 82v1M785 159v1M841 221v1M753 202v1M756 591v1M770 202v1M713 624v1M812 340v1M690 27v1M752 11v1" stroke="#d0c83a" stroke-width="1.75" stroke-linecap="round" fill="none" opacity="0.8"/>
<path d="M66 301v1M37 426v1M778 354v1M63 186v1M26 118v1M751 544v1" stroke="#d0c83a" stroke-width="1.75" stroke-linecap="round" fill="none" opacity="0.9"/>
<path d="M832 122v1" stroke="#d0c83a" stroke-width="1.75" stroke-linecap="round" fill="none" opacity="1.0"/>
<path d="M11 524h0M712 263h0M8 265h0M797 252h0M160 102h0M694 238h0M110 246h0" stroke="#d0c83a" stroke-width="2.0" stroke-linecap="round" fill="none" opacity="0.6"/>
<path d="M888 436h0" stroke="#d0c83a" stroke-width="2.0" stroke-linecap="round" fill="none" opacity="0.7"/>
<path d="M706 123h0M662 59h0M53 144h0M13 363h0M740 428h0M56 590h0M662 180h0M859 260h0M649 498h0M698 279h0M820 556h0M75 608h0M746 304h0M82 393h0M28 532h0M13 191h0M738 275h0M786 401h0M18 464h0M103 436h0M796 409h0M742 404h0M745 465h0M739 425h0M863 165h0" stroke="#d0c83a" stroke-width="2.0" stroke-linecap="round" fill="none" opacity="0.8"/>
<path d="M11 69h0M4 549h0M32 275h0M9 8h0M11 98h0M734 314h0M711 144h0M123 6h0M665 70h0M637 42h0" stroke="#d0c83a" stroke-width="2.0" stroke-linecap="round" fill="none" opacity="0.9"/>
<path d="M749 78v1M782 479v1M804 421v1M806 369v1M94 141v1M700 3v1M38 482v1M794 264v1" stroke="#d0c83a" stroke-width="2.0" stroke-linecap="round" fill="none" opacity="0.6"/>
<path d="M840 563v1M914 409v1M831 136v1M926 593v1M874 94v1" stroke="#d0c83a" stroke-width="2.0" stroke-linecap="round" fill="none" opacity="0.7"/>
<path d="M734 586v1M728 548v1M856 420v1M746 584v1M837 137v1M913 67v1M854 97v1M916 445v1M44 547v1M57 170v1M830 560v1M827 606v1M831 132v1M851 332v1M787 59v1M28 420v1M878 360v1M832 149v1M18 142v1" stroke="#d0c83a" stroke-width="2.0" stroke-linecap="round" fill="none" opacity="0.8"/>
<path d="M738 153v1M54 419v1M20 64v1M738 99v1M721 117v1M780 414v1M59 561v1M49 401v1M15 566v1M842 433v1" stroke="#d0c83a" stroke-width="2.0" stroke-linecap="round" fill="none" opacity="0.9"/>
<path d="M892 100v1M922 381v1M879 604v1M875 606v1M869 33v1M909 159v1" stroke="#d0c83a" stroke-width="2.0" stroke-linecap="round" fill="none" opacity="1.0"/>
<path d="M734 225h0M762 159h0M96 521h0M745 627h0M135 567h0M652 28h0M711 502h0M763 576h0M125 510h0M164 626h0" stroke="#d0c83a" stroke-width="2.25" stroke-linecap="round" fill="none" opacity="0.6"/>
<path d="M914 322h0M851 562h0M928 373h0M771 47h0M928 238h0M766 49h0" stroke="#d0c83a" stroke-width="2.25" stroke-linecap="round" fill="none" opacity="0.7"/>
<path d="M772 102h0M722 419h0M658 132h0M21 414h0M64 586h0M816 279h0M908 318h0M714 271h0M680 505h0M61 394h0M770 120h0M896 90h0M715 214h0M90 132h0M681 211h0M772 255h0M756 92h0M120 87h0M810 469h0" stroke="#d0c83a" stroke-width="2.25" stroke-linecap="round" fill="none" opacity="0.8"/>
<path d="M801 218h0M696 550h0M728 429h0M738 259h0M726 203h0" stroke="#d0c83a" stroke-width="2.25" stroke-linecap="round" fill="none" opacity="0.9"/>
<path d="M74 362v1M730 628v1M23 238v1" stroke="#d0c83a" stroke-width="2.25" stroke-linecap="round" fill="none" opacity="0.6"/>
<path d="M898 622v1M923 264v1M844 43v1M911 170v1M819 443v1M857 520v1M840 81v1M913 325v1" stroke="#d0c83a" stroke-width="2.25" stroke-linecap="round" fill="none" opacity="0.7"/>
<path d="M838 602v1M924 311v1M900 256v1M776 560v1M922 16v1M851 617v1M909 316v1M739 625v1M835 364v1M870 360v1M864 104v1M766 148v1M924 81v1M897 127v1M812 535v1M759 20v1M828 503v1" stroke="#d0c83a" stroke-width="2.25" stroke-linecap="round" fill="none" opacity="0.8"/>
<path d="M828 277v1M834 348v1M781 170v1M798 503v1M827 177v1M758 97v1M855 338v1M756 563v1" stroke="#d0c83a" stroke-width="2.25" stroke-linecap="round" fill="none" opacity="0.9"/>
<path d="M889 230v1M888 398v1M882 619v1M834 621v1M872 625v1M778 21v1M857 530v1M883 322v1" stroke="#d0c83a" stroke-width="2.25" stroke-linecap="round" fill="none" opacity="1.0"/>
<path d="M49 624h0M683 199h0M651 565h0M207 17h0M123 462h0M776 498h0" stroke="#d0c83a" stroke-width="2.5" stroke-linecap="round" fill="none" opacity="0.6"/>
<path d="M917 55h0M910 596h0M921 559h0M861 378h0M797 53h0M815 71h0" stroke="#d0c83a" stroke-width="2.5" stroke-linecap="round" fill="none" opacity="0.7"/>
<path d="M103 251h0M716 96h0M689 448h0M634 574h0M902 436h0M878 594h0M765 33h0M808 67h0M692 500h0M866 385h0M883 234h0M697 437h0M839 294h0M14 195h0" stroke="#d0c83a" stroke-width="2.5" stroke-linecap="round" fill="none" opacity="0.8"/>
<path d="M89 191h0M679 425h0M701 493h0M95 369h0M702 452h0" stroke="#d0c83a" stroke-width="2.5" stroke-linecap="round" fill="none" opacity="0.9"/>
<path d="M888 244h0M880 378h0M871 254h0" stroke="#d0c83a" stroke-width="2.5" stroke-linecap="round" fill="none" opacity="1.0"/>
<path d="M804 408v1M746 531v1" stroke="#d0c83a" stroke-width="2.5" stroke-linecap="round" fill="none" opacity="0.6"/>
<path d="M850 126v1M816 42v1M927 296v1M829 201v1M919 495v1M899 273v1M929 38v1M845 242v1M929 322v1M876 323v1M853 70v1" stroke="#d0c83a" stroke-width="2.5" stroke-linecap="round" fill="none" opacity="0.7"/>
<path d="M851 513v1M843 241v1M756 464v1M858 393v1M742 179v1M782 608v1M888 432v1M863 490v1M839 52v1M870 368v1M828 550v1M887 585v1M858 411v1M911 280v1" stroke="#d0c83a" stroke-width="2.5" stroke-linecap="round" fill="none" opacity="0.8"/>
<path d="M798 100v1M709 617v1M797 587v1M833 428v1" stroke="#d0c83a" stroke-width="2.5" stroke-linecap="round" fill="none" opacity="0.9"/>
<path d="M909 29v1M909 535v1M911 274v1M890 585v1M905 431v1M927 231v1M891 273v1" stroke="#d0c83a" stroke-width="2.5" stroke-linecap="round" fill="none" opacity="1.0"/>
<path d="M21 236h0" stroke="#d0c83a" stroke-width="2.75" stroke-linecap="round" fill="none" opacity="0.6"/>
<path d="M883 88h0M916 22h0M919 502h0M925 30h0M915 318h0" stroke="#d0c83a" stroke-width="2.75" stroke-linecap="round" fill="none" opacity="0.7"/>
<path d="M40 43h0M843 584h0M887 120h0M678 66h0M904 341h0M702 102h0M918 511h0M925 474h0M759 50h0M796 570h0M790 590h0M914 346h0M74 561h0M22 211h0M786 81h0M747 180h0M831 9h0M44 600h0" stroke="#d0c83a" stroke-width="2.75" stroke-linecap="round" fill="none" opacity="0.8"/>
<path d="M12 588h0M754 438h0M14 548h0M656 41h0" stroke="#d0c83a" stroke-width="2.75" stroke-linecap="round" fill="none" opacity="0.9"/>
<path d="M842 618h0" stroke="#d0c83a" stroke-width="2.75" stroke-linecap="round" fill="none" opacity="1.0"/>
<path d="M731 568v1" stroke="#d0c83a" stroke-width="2.75" stroke-linecap="round" fill="none" opacity="0.6"/>
<path d="M848 36v1M879 160v1M914 411v1M917 519v1M912 608v1M911 265v1M850 84v1" stroke="#d0c83a" stroke-width="2.75" stroke-linecap="round" fill="none" opacity="0.7"/>
<path d="M828 69v1M841 104v1M803 153v1M879 95v1M850 402v1M721 40v1M925 266v1M930 242v1M848 624v1M904 568v1M855 606v1M744 148v1M825 223v1M731 50v1M835 72v1M906 129v1M899 77v1M899 0v1" stroke="#d0c83a" stroke-width="2.75" stroke-linecap="round" fill="none" opacity="0.8"/>
<path d="M778 553v1" stroke="#d0c83a" stroke-width="2.75" stroke-linecap="round" fill="none" opacity="0.9"/>
<path d="M888 612v1M888 626v1M901 339v1M841 584v1" stroke="#d0c83a" stroke-width="2.75" stroke-linecap="round" fill="none" opacity="1.0"/>
<path d="M849 154h0" stroke="#d0c83a" stroke-width="3.0" stroke-linecap="round" fill="none" opacity="0.7"/>
<path d="M725 96h0" stroke="#d0c83a" stroke-width="3.0" stroke-linecap="round" fill="none" opacity="0.8"/>
<path d="M799 86h0" stroke="#d0c83a" stroke-width="3.0" stroke-linecap="round" fill="none" opacity="0.9"/>
<path d="M799 72h0" stroke="#d0c83a" stroke-width="3.0" stroke-linecap="round" fill="none" opacity="1.0"/>
<path d="M756 13v1" stroke="#d0c83a" stroke-width="3.0" stroke-linecap="round" fill="none" opacity="0.7"/>
<path d="M728 50v1" stroke="#d0c83a" stroke-width="3.0" stroke-linecap="round" fill="none" opacity="0.8"/>
<path d="M813 255v1M767 468v1M778 134v1" stroke="#d0c83a" stroke-width="3.0" stroke-linecap="round" fill="none" opacity="0.9"/>
<path d="M857 202v1" stroke="#d0c83a" stroke-width="3.0" stroke-linecap="round" fill="none" opacity="1.0"/>
<path d="M810 504h0M912 566h0M914 205h0M862 77h0" stroke="#d0c83a" stroke-width="3.25" stroke-linecap="round" fill="none" opacity="0.8"/>
<path d="M799 140h0" stroke="#d0c83a" stroke-width="3.25" stroke-linecap="round" fill="none" opacity="0.9"/>
<path d="M928 229h0M904 69h0" stroke="#d0c83a" stroke-width="3.25" stroke-linecap="round" fill="none" opacity="1.0"/>
<path d="M777 58v1M856 599v1M820 32v1M812 574v1M908 541v1" stroke="#d0c83a" stroke-width="3.25" stroke-linecap="round" fill="none" opacity="0.7"/>
<path d="M919 35v1M909 368v1M833 399v1M924 462v1M816 223v1" stroke="#d0c83a" stroke-width="3.25" stroke-linecap="round" fill="none" opacity="0.8"/>
<path d="M916 419v1M836 25v1" stroke="#d0c83a" stroke-width="3.25" stroke-linecap="round" fill="none" opacity="1.0"/>
<path d="M878 483h0" stroke="#d0c83a" stroke-width="3.5" stroke-linecap="round" fill="none" opacity="0.8"/>
<path d="M856 182h0M839 522h0" stroke="#d0c83a" stroke-width="3.5" stroke-linecap="round" fill="none" opacity="1.0"/>
<path d="M868 453v1M895 418v1M898 238v1M886 475v1" stroke="#d0c83a" stroke-width="3.5" stroke-linecap="round" fill="none" opacity="0.7"/>
<path d="M891 270v1M867 279v1" stroke="#d0c83a" stroke-width="3.5" stroke-linecap="round" fill="none" opacity="0.8"/>
<path d="M920 592h0" stroke="#d0c83a" stroke-width="3.75" stroke-linecap="round" fill="none" opacity="0.7"/>
<path d="M890 177h0M922 594h0M907 157h0" stroke="#d0c83a" stroke-width="3.75" stroke-linecap="round" fill="none" opacity="0.8"/>
<path d="M887 104h0" stroke="#d0c83a" stroke-width="3.75" stroke-linecap="round" fill="none" opacity="1.0"/>
<path d="M889 127v1M839 39v1" stroke="#d0c83a" stroke-width="3.75" stroke-linecap="round" fill="none" opacity="0.7"/>
<path d="M915 24v1M917 369v1" stroke="#d0c83a" stroke-width="3.75" stroke-linecap="round" fill="none" opacity="0.8"/>
<path d="M899 53v1M924 618v1" stroke="#d0c83a" stroke-width="3.75" stroke-linecap="round" fill="none" opacity="1.0"/>
<path d="M661.7 561.1h0M104.3 467.3h0M666.4 179.3h0" stroke="#d4cc40" stroke-width="1.25" stroke-linecap="round" fill="none" opacity="0.8"/>
<path d="M641.6 552.1h0M129.7 585.0h0" stroke="#d4cc40" stroke-width="1.25" stroke-linecap="round" fill="none" opacity="0.9"/>
<path d="M745.3 289.9h0M697.7 343.7h0M32.3 502.4h0M79.5 612.6h0M65.0 474.0h0M677.3 85.3h0M70.5 132.3h0M659.8 72.1h0M105.6 212.4h0M43.9 41.0h0M54.9 412.5h0M764.6 267.9h0M750.8 262.5h0M87.4 170.3h0M68.9 422.7h0" stroke="#d4cc40" stroke-width="1.5" stroke-linecap="round" fill="none" opacity="0.6"/>
<path d="M79.9 156.8h0M717.8 325.8h0M707.5 439.3h0M697.0 526.4h0M699.4 235.3h0M55.4 271.1h0M713.9 530.3h0M717.2 358.3h0M131.3 622.2h0M61.8 115.6h0M706.9 250.4h0M668.7 68.7h0M765.5 300.7h0" stroke="#d4cc40" stroke-width="1.5" stroke-linecap="round" fill="none" opacity="0.8"/>
<path d="M641.9 23.9h0M757.7 169.1h0M13.1 611.9h0M753.6 230.2h0M110.3 98.8h0" stroke="#d4cc40" stroke-width="1.5" stroke-linecap="round" fill="none" opacity="0.9"/>
<path d="M56.1 468.5v1M766.9 147.1v1" stroke="#d4cc40" stroke-width="1.5" stroke-linecap="round" fill="none" opacity="0.6"/>
<path d="M38.7 93.4v1M62.4 284.5v1M28.3 208.7v1" stroke="#d4cc40" stroke-width="1.5" stroke-linecap="round" fill="none" opacity="0.8"/>
<path d="M678.0 19.2v1M45.5 589.6v1" stroke="#d4cc40" stroke-width="1.5" stroke-linecap="round" fill="none" opacity="0.9"/>
<path d="M718 276h0M706 298h0M623 2h0M15 80h0M109 362h0M685 542h0M675 204h0M730 366h0M99 395h0M773 545h0M674 502h0" stroke="#d4cc40" stroke-width="1.75" stroke-linecap="round" fill="none" opacity="0.6"/>
<path d="M782 584h0M859 198h0M842 173h0" stroke="#d4cc40" stroke-width="1.75" stroke-linecap="round" fill="none" opacity="0.7"/>
<path d="M689 338h0M112 101h0M730 534h0M702 553h0M789 629h0M692 343h0M181 58h0M713 314h0M90 429h0M734 184h0M684 275h0M20 421h0M694 9h0M716 382h0M669 232h0M54 609h0M652 514h0M705 171h0M642 547h0M18 164h0M33 479h0M662 200h0M743 567h0" stroke="#d4cc40" stroke-width="1.75" stroke-linecap="round" fill="none" opacity="0.8"/>
<path d="M790 550h0M23 456h0M637 39h0M783 525h0M724 568h0M19 61h0M675 209h0M663 429h0M131 615h0M121 207h0M123 606h0M690 131h0" stroke="#d4cc40" stroke-width="1.75" stroke-linecap="round" fill="none" opacity="0.9"/>
<path d="M756 610v1M770 125v1M46 173v1M17 344v1M754 134v1M746 511v1M816 519v1M64 183v1M878 347v1M40 372v1" stroke="#d4cc40" stroke-width="1.75" stroke-linecap="round" fill="none" opacity="0.8"/>
<path d="M781 336v1M86 625v1" stroke="#d4cc40" stroke-width="1.75" stroke-linecap="round" fill="none" opacity="0.9"/>
<path d="M873 434v1" stroke="#d4cc40" stroke-width="1.75" stroke-linecap="round" fill="none" opacity="1.0"/>
<path d="M56 356h0M105 212h0M732 353h0M62 173h0M636 616h0M669 592h0M752 363h0M713 317h0" stroke="#d4cc40" stroke-width="2.0" stroke-linecap="round" fill="none" opacity="0.6"/>
<path d="M910 75h0M882 468h0" stroke="#d4cc40" stroke-width="2.0" stroke-linecap="round" fill="none" opacity="0.7"/>
<path d="M708 575h0M60 159h0M877 520h0M913 499h0M742 116h0M138 144h0M733 507h0M925 41h0M37 50h0M880 566h0M60 115h0M701 478h0M120 21h0M96 65h0M122 562h0M727 161h0M880 180h0M889 183h0M113 99h0M47 621h0M133 15h0M10 355h0M39 261h0M780 517h0M99 1h0M4 389h0M130 50h0" stroke="#d4cc40" stroke-width="2.0" stroke-linecap="round" fill="none" opacity="0.8"/>
<path d="M640 27h0M714 534h0M9 553h0M840 402h0M101 450h0M684 626h0M0 190h0M679 531h0M730 496h0M780 554h0M117 50h0" stroke="#d4cc40" stroke-width="2.0" stroke-linecap="round" fill="none" opacity="0.9"/>
<path d="M881 41h0" stroke="#d4cc40" stroke-width="2.0" stroke-linecap="round" fill="none" opacity="1.0"/>
<path d="M796 496v1M34 486v1M19 608v1M32 376v1M725 103v1M816 347v1M791 210v1M101 109v1M676 40v1M791 484v1M93 147v1" stroke="#d4cc40" stroke-width="2.0" stroke-linecap="round" fill="none" opacity="0.6"/>
<path d="M909 344v1M914 218v1M929 354v1" stroke="#d4cc40" stroke-width="2.0" stroke-linecap="round" fill="none" opacity="0.7"/>
<path d="M920 421v1M897 106v1M13 46v1M740 578v1M133 86v1M870 315v1M910 15v1M895 495v1M765 323v1M7 227v1M919 101v1M894 583v1M732 35v1M868 139v1M105 33v1M927 265v1M766 530v1M794 127v1M862 157v1M864 71v1M867 172v1M719 588v1M871 399v1M768 303v1M720 107v1" stroke="#d4cc40" stroke-width="2.0" stroke-linecap="round" fill="none" opacity="0.8"/>
<path d="M792 168v1M796 317v1M8 601v1M40 418v1M793 130v1M768 592v1M722 99v1M819 186v1M855 355v1M29 310v1" stroke="#d4cc40" stroke-width="2.0" stroke-linecap="round" fill="none" opacity="0.9"/>
<path d="M866 546v1" stroke="#d4cc40" stroke-width="2.0" stroke-linecap="round" fill="none" opacity="1.0"/>
<path d="M608 28h0M55 589h0M740 203h0M144 625h0" stroke="#d4cc40" stroke-width="2.25" stroke-linecap="round" fill="none" opacity="0.6"/>
<path d="M828 480h0M824 180h0M856 186h0M853 311h0M857 624h0" stroke="#d4cc40" stroke-width="2.25" stroke-linecap="round" fill="none" opacity="0.7"/>
<path d="M846 67h0M735 573h0M32 404h0M884 179h0M749 426h0M95 587h0M912 616h0M814 269h0M88 407h0M873 23h0M747 88h0M911 74h0M828 347h0M910 279h0M826 581h0M753 507h0M818 421h0M118 217h0M773 544h0M767 541h0M606 38h0M669 574h0M680 70h0M721 136h0M844 521h0" stroke="#d4cc40" stroke-width="2.25" stroke-linecap="round" fill="none" opacity="0.8"/>
<path d="M742 43h0M787 448h0M684 101h0M727 244h0M732 164h0M798 527h0M96 562h0M99 323h0M641 32h0M686 110h0" stroke="#d4cc40" stroke-width="2.25" stroke-linecap="round" fill="none" opacity="0.9"/>
<path d="M852 145h0M899 614h0" stroke="#d4cc40" stroke-width="2.25" stroke-linecap="round" fill="none" opacity="1.0"/>
<path d="M777 293v1M785 337v1M781 531v1" stroke="#d4cc40" stroke-width="2.25" stroke-linecap="round" fill="none" opacity="0.6"/>
<path d="M931 353v1M772 1v1M915 148v1M903 476v1M869 133v1M802 582v1M816 503v1M834 326v1" stroke="#d4cc40" stroke-width="2.25" stroke-linecap="round" fill="none" opacity="0.7"/>
<path d="M824 150v1M896 64v1M813 591v1M920 437v1M796 279v1M891 227v1M743 56v1M721 88v1M871 400v1M836 227v1M814 92v1M778 523v1M685 19v1M915 206v1M818 19v1M861 138v1M894 73v1" stroke="#d4cc40" stroke-width="2.25" stroke-linecap="round" fill="none" opacity="0.8"/>
<path d="M762 163v1M759 37v1M837 271v1M837 430v1M777 543v1M46 317v1" stroke="#d4cc40" stroke-width="2.25" stroke-linecap="round" fill="none" opacity="0.9"/>
<path d="M865 43v1M838 146v1M918 556v1M830 14v1M910 595v1M924 456v1" stroke="#d4cc40" stroke-width="2.25" stroke-linecap="round" fill="none" opacity="1.0"/>
<path d="M102 401h0M710 229h0M141 629h0M746 532h0M104 413h0M781 183h0M642 50h0M690 183h0M79 276h0" stroke="#d4cc40" stroke-width="2.5" stroke-linecap="round" fill="none" opacity="0.6"/>
<path d="M807 32h0M856 440h0M761 5h0" stroke="#d4cc40" stroke-width="2.5" stroke-linecap="round" fill="none" opacity="0.7"/>
<path d="M123 558h0M808 627h0M817 123h0M911 248h0M7 247h0M13 482h0M792 41h0M26 520h0M855 16h0M775 348h0M819 26h0M716 453h0M885 432h0M835 502h0" stroke="#d4cc40" stroke-width="2.5" stroke-linecap="round" fill="none" opacity="0.8"/>
<path d="M684 452h0M113 262h0M668 155h0M713 617h0" stroke="#d4cc40" stroke-width="2.5" stroke-linecap="round" fill="none" opacity="0.9"/>
<path d="M902 402h0M753 8h0M897 381h0" stroke="#d4cc40" stroke-width="2.5" stroke-linecap="round" fill="none" opacity="1.0"/>
<path d="M784 177v1M741 524v1" stroke="#d4cc40" stroke-width="2.5" stroke-linecap="round" fill="none" opacity="0.6"/>
<path d="M856 122v1M880 484v1M867 520v1M910 469v1M925 201v1" stroke="#d4cc40" stroke-width="2.5" stroke-linecap="round" fill="none" opacity="0.7"/>
<path d="M907 206v1M827 75v1M806 404v1M791 85v1M855 211v1M836 621v1M873 251v1M818 614v1M81 471v1M789 302v1M781 232v1M790 235v1M849 40v1M771 427v1M830 92v1M878 332v1M880 480v1M801 436v1" stroke="#d4cc40" stroke-width="2.5" stroke-linecap="round" fill="none" opacity="0.8"/>
<path d="M739 509v1M719 609v1M795 343v1M99 25v1" stroke="#d4cc40" stroke-width="2.5" stroke-linecap="round" fill="none" opacity="0.9"/>
<path d="M818 71v1M831 551v1M879 488v1M900 306v1M913 70v1" stroke="#d4cc40" stroke-width="2.5" stroke-linecap="round" fill="none" opacity="1.0"/>
<path d="M131 74h0M39 96h0M41 488h0M734 477h0M57 584h0" stroke="#d4cc40" stroke-width="2.75" stroke-linecap="round" fill="none" opacity="0.6"/>
<path d="M847 40h0M831 51h0" stroke="#d4cc40" stroke-width="2.75" stroke-linecap="round" fill="none" opacity="0.7"/>
<path d="M63 110h0M861 100h0M896 177h0M880 24h0M811 28h0M828 82h0M821 419h0M768 590h0M830 228h0M922 197h0M913 553h0M927 1h0M19 16h0" stroke="#d4cc40" stroke-width="2.75" stroke-linecap="round" fill="none" opacity="0.8"/>
<path d="M725 198h0M748 324h0M19 145h0M835 228h0M833 167h0M724 225h0M11 507h0" stroke="#d4cc40" stroke-width="2.75" stroke-linecap="round" fill="none" opacity="0.9"/>
<path d="M765 462v1M783 536v1" stroke="#d4cc40" stroke-width="2.75" stroke-linecap="round" fill="none" opacity="0.6"/>
<path d="M916 352v1M871 622v1M913 79v1M862 578v1M831 238v1M788 132v1M863 127v1M892 446v1M904 7v1" stroke="#d4cc40" stroke-width="2.75" stroke-linecap="round" fill="none" opacity="0.7"/>
<path d="M905 109v1M898 307v1M64 64v1M56 109v1M877 536v1M911 270v1M929 244v1M922 46v1M911 48v1M909 609v1M851 125v1M911 541v1M875 591v1M913 451v1" stroke="#d4cc40" stroke-width="2.75" stroke-linecap="round" fill="none" opacity="0.8"/>
<path d="M778 470h0M793 298h0M751 572h0" stroke="#d4cc40" stroke-width="3.0" stroke-linecap="round" fill="none" opacity="0.6"/>
<path d="M851 478h0M878 438h0" stroke="#d4cc40" stroke-width="3.0" stroke-linecap="round" fill="none" opacity="0.7"/>
<path d="M882 276h0M874 208h0M763 124h0M871 466h0" stroke="#d4cc40" stroke-width="3.0" stroke-linecap="round" fill="none" opacity="0.8"/>
<path d="M814 628h0M865 220h0" stroke="#d4cc40" stroke-width="3.0" stroke-linecap="round" fill="none" opacity="1.0"/>
<path d="M757 515v1M742 609v1M770 182v1" stroke="#d4cc40" stroke-width="3.0" stroke-linecap="round" fill="none" opacity="0.6"/>
<path d="M859 134v1M823 136v1M893 354v1M844 132v1" stroke="#d4cc40" stroke-width="3.0" stroke-linecap="round" fill="none" opacity="0.7"/>
<path d="M788 421v1M803 324v1M805 401v1M780 227v1M767 600v1M904 391v1" stroke="#d4cc40" stroke-width="3.0" stroke-linecap="round" fill="none" opacity="0.8"/>
<path d="M888 195v1" stroke="#d4cc40" stroke-width="3.0" stroke-linecap="round" fill="none" opacity="1.0"/>
<path d="M809 201h0" stroke="#d4cc40" stroke-width="3.25" stroke-linecap="round" fill="none" opacity="0.6"/>
<path d="M919 559h0M930 595h0" stroke="#d4cc40" stroke-width="3.25" stroke-linecap="round" fill="none" opacity="0.7"/>
<path d="M789 128h0M913 389h0M818 496h0M930 288h0" stroke="#d4cc40" stroke-width="3.25" stroke-linecap="round" fill="none" opacity="0.8"/>
<path d="M930 504h0M887 49h0" stroke="#d4cc40" stroke-width="3.25" stroke-linecap="round" fill="none" opacity="1.0"/>
<path d="M878 139v1M843 276v1M819 438v1M878 546v1" stroke="#d4cc40" stroke-width="3.25" stroke-linecap="round" fill="none" opacity="0.7"/>
<path d="M842 419v1M810 568v1M856 74v1M919 532v1M815 475v1M808 483v1" stroke="#d4cc40" stroke-width="3.25" stroke-linecap="round" fill="none" opacity="0.8"/>
<path d="M776 107v1M794 133v1M770 59v1" stroke="#d4cc40" stroke-width="3.25" stroke-linecap="round" fill="none" opacity="0.9"/>
<path d="M856 65v1M900 11v1" stroke="#d4cc40" stroke-width="3.25" stroke-linecap="round" fill="none" opacity="1.0"/>
<path d="M744 0h0M881 452h0M857 505h0M819 66h0" stroke="#d4cc40" stroke-width="3.5" stroke-linecap="round" fill="none" opacity="0.8"/>
<path d="M873 348h0M848 551h0" stroke="#d4cc40" stroke-width="3.5" stroke-linecap="round" fill="none" opacity="1.0"/>
<path d="M837 119v1M887 447v1" stroke="#d4cc40" stroke-width="3.5" stroke-linecap="round" fill="none" opacity="0.7"/>
<path d="M787 46v1M904 354v1" stroke="#d4cc40" stroke-width="3.5" stroke-linecap="round" fill="none" opacity="0.8"/>
<path d="M881 495v1M827 571v1" stroke="#d4cc40" stroke-width="3.5" stroke-linecap="round" fill="none" opacity="1.0"/>
<path d="M921 559h0M884 628h0M928 394h0" stroke="#d4cc40" stroke-width="3.75" stroke-linecap="round" fill="none" opacity="0.7"/>
<path d="M832 57h0M913 592h0" stroke="#d4cc40" stroke-width="3.75" stroke-linecap="round" fill="none" opacity="0.8"/>
<path d="M929 296v1M906 19v1M867 21v1M888 88v1" stroke="#d4cc40" stroke-width="3.75" stroke-linecap="round" fill="none" opacity="0.7"/>
<path d="M819 27v1M921 569v1M898 228v1M916 436v1M919 206v1" stroke="#d4cc40" stroke-width="3.75" stroke-linecap="round" fill="none" opacity="0.8"/>
<path d="M917 296v1" stroke="#d4cc40" stroke-width="3.75" stroke-linecap="round" fill="none" opacity="1.0"/>
<path d="M464.9 531.5h0M287.7 602.6h0M556.9 600.2h0M299.7 200.5h0M504.0 627.1h0M574.6 299.9h0M396.1 83.1h0M143.5 199.5h0M431.8 479.0h0M366.5 137.0h0M283.8 483.8h0M168.1 378.7h0M384.2 157.6h0M277.3 46.4h0M190.1 578.4h0M486.7 47.8h0M548.7 305.9h0M377.6 330.3h0" stroke="#d8ce54" stroke-width="1.25" stroke-linecap="round" fill="none" opacity="0.6"/>
<path d="M481.9 224.0h0M327.5 241.6h0M614.6 322.2h0M306.9 395.8h0M214.5 59.3h0M202.5 540.4h0M358.5 419.6h0M560.8 312.9h0M544.9 388.6h0M484.6 462.2h0M306.0 234.6h0M423.3 159.7h0M347.8 133.6h0M135.4 406.1h0M140.2 282.1h0M531.9 539.8h0M301.4 133.7h0M278.5 44.7h0M237.8 353.7h0M337.9 54.7h0M623.4 544.8h0M209.0 66.3h0M639.3 425.0h0M265.7 227.2h0M565.0 119.5h0M279.4 600.6h0M337.6 247.3h0M418.4 201.5h0M530.3 624.5h0M515.3 246.0h0M195.9 584.2h0M453.6 598.4h0M304.6 94.2h0M525.3 212.3h0M306.6 152.3h0M396.9 404.3h0M353.3 351.9h0" stroke="#d8ce54" stroke-width="1.25" stroke-linecap="round" fill="none" opacity="0.8"/>
<path d="M278.1 308.3h0M329.4 422.0h0M235.3 375.9h0M404.7 534.4h0M514.6 525.3h0M485.8 533.5h0M613.4 283.5h0M245.2 239.2h0M397.8 263.0h0M491.8 247.5h0M558.3 81.4h0M382.5 88.3h0M367.6 134.6h0M208.1 389.6h0M369.5 626.0h0M329.8 599.8h0M546.6 582.8h0M661.9 422.1h0" stroke="#d8ce54" stroke-width="1.25" stroke-linecap="round" fill="none" opacity="0.9"/>
<path d="M624.3 177.6h0M557.7 39.5h0M150.6 275.8h0M527.9 48.4h0M292.2 318.4h0M595.2 620.4h0M543.6 561.5h0M626.9 264.2h0M286.3 287.9h0M613.2 377.2h0M293.7 425.3h0M515.6 335.1h0M489.8 404.8h0M182.5 239.9h0M467.5 177.5h0M257.2 389.3h0M525.4 122.9h0M520.1 567.6h0M280.8 71.8h0M214.5 336.7h0M482.3 351.8h0M328.2 246.4h0" stroke="#d8ce54" stroke-width="1.5" stroke-linecap="round" fill="none" opacity="0.6"/>
<path d="M450.5 54.1h0M658.7 284.0h0M294.7 553.5h0M162.5 325.9h0M336.6 89.6h0M542.5 210.7h0M545.9 292.2h0M579.8 575.9h0M600.7 584.3h0M490.1 598.8h0M419.6 540.3h0M203.5 291.9h0M143.2 205.3h0M592.7 199.6h0M390.9 371.5h0M155.7 320.3h0M300.8 553.1h0M202.5 335.0h0M458.1 122.6h0M234.6 259.4h0M305.8 387.0h0M541.3 33.4h0M482.4 57.8h0M375.2 41.3h0M548.0 497.7h0M382.7 91.2h0M214.0 355.6h0M323.2 393.5h0M492.8 569.5h0M179.5 401.6h0M458.1 26.0h0M655.2 300.5h0M331.1 312.3h0M302.9 376.4h0M363.4 28.6h0M196.0 529.6h0" stroke="#d8ce54" stroke-width="1.5" stroke-linecap="round" fill="none" opacity="0.8"/>
<path d="M560.7 298.7h0M452.6 15.6h0M140.4 463.7h0M455.6 535.4h0M181.0 508.1h0M561.2 293.7h0M182.1 244.1h0M361.3 549.0h0M269.9 513.5h0M341.3 210.7h0M421.7 628.8h0M160.0 276.3h0M541.6 149.2h0M432.7 251.1h0M238.5 185.9h0M558.0 584.3h0M609.6 565.4h0M189.2 412.1h0M488.8 540.5h0M409.9 401.0h0M320.4 118.2h0" stroke="#d8ce54" stroke-width="1.5" stroke-linecap="round" fill="none" opacity="0.9"/>
<path d="M231 569h0M133 248h0M151 411h0M664 346h0M530 30h0M531 558h0M134 432h0M223 457h0M310 299h0M210 528h0M651 367h0M316 623h0M329 125h0M356 155h0M331 530h0M363 578h0M148 454h0M488 197h0M209 85h0" stroke="#d8ce54" stroke-width="1.75" stroke-linecap="round" fill="none" opacity="0.6"/>
<path d="M429 102h0M130 311h0M268 153h0M221 235h0M543 50h0M133 372h0M168 191h0M523 383h0M250 198h0M135 296h0M220 420h0M563 28h0M630 240h0M298 201h0M316 76h0M150 568h0M475 448h0M654 248h0M657 331h0M574 461h0M314 96h0M421 440h0M366 461h0M263 411h0M623 500h0M441 200h0M383 346h0M189 117h0M327 602h0M173 415h0M623 147h0M172 126h0M180 424h0M330 1h0M639 204h0M184 606h0M296 190h0" stroke="#d8ce54" stroke-width="1.75" stroke-linecap="round" fill="none" opacity="0.8"/>
<path d="M374 544h0M599 499h0M611 591h0M494 143h0M642 493h0M176 293h0M297 422h0M227 50h0M480 554h0M489 196h0M627 221h0M647 247h0M584 604h0M169 348h0M392 410h0M352 627h0M196 518h0M286 211h0M186 598h0M450 157h0M207 219h0" stroke="#d8ce54" stroke-width="1.75" stroke-linecap="round" fill="none" opacity="0.9"/>
<path d="M571 320h0M250 349h0M266 564h0M230 425h0M398 66h0M310 570h0M323 38h0M602 600h0M315 373h0M446 126h0" stroke="#d8ce54" stroke-width="2.0" stroke-linecap="round" fill="none" opacity="0.6"/>
<path d="M296 4h0M163 303h0M667 322h0M555 140h0M178 432h0M591 470h0M199 371h0M200 410h0M403 630h0M182 193h0M479 200h0M463 138h0M533 37h0M166 402h0M329 321h0M228 371h0M588 624h0M354 440h0" stroke="#d8ce54" stroke-width="2.0" stroke-linecap="round" fill="none" opacity="0.8"/>
<path d="M158 424h0M202 162h0M305 110h0M447 129h0M445 385h0M177 617h0M315 465h0M524 466h0M486 483h0" stroke="#d8ce54" stroke-width="2.0" stroke-linecap="round" fill="none" opacity="0.9"/>
<path d="M116 272h0M524 488h0M409 481h0M259 264h0M556 521h0M221 343h0M278 423h0M366 436h0M176 252h0M331 407h0" stroke="#d8ce54" stroke-width="2.25" stroke-linecap="round" fill="none" opacity="0.6"/>
<path d="M294 529h0M302 530h0M221 257h0M357 175h0M221 243h0M378 60h0M500 386h0M401 409h0M406 153h0M560 381h0M524 351h0M252 425h0M424 101h0M344 207h0M455 8h0M614 396h0M223 279h0M214 444h0M270 550h0M367 133h0M259 293h0M231 268h0" stroke="#d8ce54" stroke-width="2.25" stroke-linecap="round" fill="none" opacity="0.8"/>
<path d="M437 463h0M604 308h0M362 583h0M514 294h0M310 271h0M452 288h0M305 126h0M185 231h0M434 577h0M346 77h0" stroke="#d8ce54" stroke-width="2.25" stroke-linecap="round" fill="none" opacity="0.9"/>
<path d="M168 122h0M147 210h0" stroke="#d8ce54" stroke-width="2.5" stroke-linecap="round" fill="none" opacity="0.6"/>
<path d="M144 186h0M168 390h0M145 431h0M263 33h0" stroke="#d8ce54" stroke-width="2.5" stroke-linecap="round" fill="none" opacity="0.8"/>
<path d="M165 576h0M120 255h0M267 46h0" stroke="#d8ce54" stroke-width="2.5" stroke-linecap="round" fill="none" opacity="0.9"/>
<path d="M670.2 262.7h0M708.8 353.1h0" stroke="#dcd446" stroke-width="1.25" stroke-linecap="round" fill="none" opacity="0.6"/>
<path d="M706.2 394.7h0M119.1 191.2h0" stroke="#dcd446" stroke-width="1.25" stroke-linecap="round" fill="none" opacity="0.8"/>
<path d="M198.3 56.3h0M695.2 233.5h0M106.2 453.6h0" stroke="#dcd446" stroke-width="1.25" stroke-linecap="round" fill="none" opacity="0.9"/>
<path d="M105.2 101.7h0M687.5 408.1h0M132.9 36.9h0M20.8 498.4h0M698.0 524.7h0M37.6 445.5h0M712.1 501.1h0M24.9 382.7h0M733.9 208.3h0" stroke="#dcd446" stroke-width="1.5" stroke-linecap="round" fill="none" opacity="0.6"/>
<path d="M71.4 573.6h0M56.5 425.0h0M18.8 245.7h0M782.5 413.3h0M29.0 478.3h0M741.8 223.8h0M707.8 237.8h0M52.4 438.9h0M575.3 21.6h0M124.5 580.3h0M651.6 626.7h0" stroke="#dcd446" stroke-width="1.5" stroke-linecap="round" fill="none" opacity="0.8"/>
<path d="M755.8 483.0h0M666.6 462.4h0M734.9 498.8h0M767.4 311.1h0M785.1 386.0h0M125.6 616.1h0M94.6 326.9h0M63.3 299.5h0M731.1 416.9h0" stroke="#dcd446" stroke-width="1.5" stroke-linecap="round" fill="none" opacity="0.9"/>
<path d="M782.1 368.3v1M44.4 315.7v1M27.5 610.0v1" stroke="#dcd446" stroke-width="1.5" stroke-linecap="round" fill="none" opacity="0.6"/>
<path d="M67.4 337.6v1M761.3 143.7v1M772.8 408.6v1" stroke="#dcd446" stroke-width="1.5" stroke-linecap="round" fill="none" opacity="0.8"/>
<path d="M765.7 375.6v1M73.7 288.7v1M773.8 180.9v1M44.5 179.9v1" stroke="#dcd446" stroke-width="1.5" stroke-linecap="round" fill="none" opacity="0.9"/>
<path d="M37 71h0M129 173h0M678 125h0M128 58h0M629 9h0M758 199h0M114 399h0M68 447h0M671 262h0M729 478h0M731 298h0M79 237h0M696 536h0" stroke="#dcd446" stroke-width="1.75" stroke-linecap="round" fill="none" opacity="0.6"/>
<path d="M723 556h0M671 311h0M13 567h0M39 523h0M828 370h0M107 281h0M89 270h0M672 494h0M679 285h0M66 573h0M759 260h0M725 286h0M40 471h0M3 417h0M645 519h0M629 117h0M857 393h0M38 494h0M576 30h0M722 344h0M103 468h0" stroke="#dcd446" stroke-width="1.75" stroke-linecap="round" fill="none" opacity="0.8"/>
<path d="M70 613h0M75 433h0M646 172h0M6 163h0M806 470h0M841 353h0M225 2h0M676 136h0M689 421h0M110 272h0M69 322h0" stroke="#dcd446" stroke-width="1.75" stroke-linecap="round" fill="none" opacity="0.9"/>
<path d="M827 582h0" stroke="#dcd446" stroke-width="1.75" stroke-linecap="round" fill="none" opacity="1.0"/>
<path d="M5 151v1M754 587v1M750 150v1M731 108v1M13 338v1" stroke="#dcd446" stroke-width="1.75" stroke-linecap="round" fill="none" opacity="0.6"/>
<path d="M766 130v1M806 317v1M739 527v1M866 243v1M773 145v1M19 518v1M811 370v1M752 587v1M744 594v1" stroke="#dcd446" stroke-width="1.75" stroke-linecap="round" fill="none" opacity="0.8"/>
<path d="M850 462v1M757 36v1M23 456v1M104 545v1M811 367v1M785 172v1" stroke="#dcd446" stroke-width="1.75" stroke-linecap="round" fill="none" opacity="0.9"/>
<path d="M863 445v1" stroke="#dcd446" stroke-width="1.75" stroke-linecap="round" fill="none" opacity="1.0"/>
<path d="M815 369h0M792 302h0M730 549h0M15 196h0M611 55h0M15 121h0M65 266h0M740 496h0M753 115h0M719 271h0M711 594h0M37 130h0M637 3h0M113 45h0M643 8h0M35 603h0M748 585h0M76 456h0M74 202h0M673 296h0M35 548h0" stroke="#dcd446" stroke-width="2.0" stroke-linecap="round" fill="none" opacity="0.6"/>
<path d="M928 128h0M885 58h0M924 219h0M895 241h0" stroke="#dcd446" stroke-width="2.0" stroke-linecap="round" fill="none" opacity="0.7"/>
<path d="M91 407h0M24 596h0M80 48h0M710 175h0M663 479h0M766 132h0M687 528h0M692 508h0M103 348h0M731 203h0M779 11h0M12 505h0M2 294h0M812 446h0M12 83h0M55 55h0M819 590h0M712 248h0M0 269h0M922 501h0M85 546h0M17 116h0M648 576h0M803 232h0M879 472h0M756 407h0M873 175h0M716 537h0M748 339h0M58 49h0" stroke="#dcd446" stroke-width="2.0" stroke-linecap="round" fill="none" opacity="0.8"/>
<path d="M735 594h0M53 107h0M14 353h0M25 35h0M654 15h0M778 60h0M105 22h0M645 95h0M636 17h0M788 536h0M114 67h0M95 363h0M115 459h0" stroke="#dcd446" stroke-width="2.0" stroke-linecap="round" fill="none" opacity="0.9"/>
<path d="M780 16h0" stroke="#dcd446" stroke-width="2.0" stroke-linecap="round" fill="none" opacity="1.0"/>
<path d="M62 235v1M189 6v1M27 7v1" stroke="#dcd446" stroke-width="2.0" stroke-linecap="round" fill="none" opacity="0.6"/>
<path d="M893 129v1M885 157v1M889 25v1M917 592v1M816 564v1M809 8v1M901 482v1M800 43v1" stroke="#dcd446" stroke-width="2.0" stroke-linecap="round" fill="none" opacity="0.7"/>
<path d="M784 550v1M53 160v1M912 355v1M868 403v1M794 43v1M795 222v1M898 360v1M843 263v1M828 380v1M721 577v1M883 54v1M32 204v1M768 251v1M866 485v1M871 38v1M28 101v1M842 331v1M807 438v1M891 182v1M761 438v1M27 222v1M728 560v1M16 504v1M46 512v1M102 10v1M873 126v1M915 55v1M45 304v1M717 63v1M899 620v1M55 361v1M744 22v1" stroke="#dcd446" stroke-width="2.0" stroke-linecap="round" fill="none" opacity="0.8"/>
<path d="M706 66v1M838 510v1M835 184v1M4 43v1M25 532v1M8 33v1M790 399v1M680 40v1" stroke="#dcd446" stroke-width="2.0" stroke-linecap="round" fill="none" opacity="0.9"/>
<path d="M902 154v1M838 535v1M792 44v1M826 69v1M857 62v1M847 123v1" stroke="#dcd446" stroke-width="2.0" stroke-linecap="round" fill="none" opacity="1.0"/>
<path d="M651 606h0M687 313h0M714 230h0M111 388h0M56 172h0M130 561h0M787 351h0M715 399h0M721 64h0M102 421h0M683 418h0" stroke="#dcd446" stroke-width="2.25" stroke-linecap="round" fill="none" opacity="0.6"/>
<path d="M916 582h0M726 3h0M833 605h0M831 13h0M909 164h0" stroke="#dcd446" stroke-width="2.25" stroke-linecap="round" fill="none" opacity="0.7"/>
<path d="M62 190h0M639 98h0M799 478h0M674 84h0M113 554h0M36 370h0M823 403h0M908 596h0M641 37h0M780 250h0M892 176h0M853 465h0M840 119h0M818 413h0M686 348h0M852 127h0M64 317h0M100 539h0M931 109h0M916 103h0M40 464h0M818 374h0M752 60h0M786 402h0M837 468h0" stroke="#dcd446" stroke-width="2.25" stroke-linecap="round" fill="none" opacity="0.8"/>
<path d="M830 364h0M692 100h0M74 590h0M692 33h0M764 86h0M694 320h0M691 438h0M697 617h0M673 61h0" stroke="#dcd446" stroke-width="2.25" stroke-linecap="round" fill="none" opacity="0.9"/>
<path d="M890 606h0" stroke="#dcd446" stroke-width="2.25" stroke-linecap="round" fill="none" opacity="1.0"/>
<path d="M801 371v1M171 7v1M806 370v1M144 16v1M90 135v1" stroke="#dcd446" stroke-width="2.25" stroke-linecap="round" fill="none" opacity="0.6"/>
<path d="M894 71v1M754 51v1M907 625v1M909 361v1M868 604v1M807 578v1M815 571v1M915 347v1" stroke="#dcd446" stroke-width="2.25" stroke-linecap="round" fill="none" opacity="0.7"/>
<path d="M817 543v1M872 307v1M853 483v1M907 201v1M847 593v1M859 519v1M781 154v1M728 16v1M811 535v1M60 155v1M895 458v1M894 185v1M923 265v1M811 547v1M917 399v1M859 520v1M791 427v1M819 261v1" stroke="#dcd446" stroke-width="2.25" stroke-linecap="round" fill="none" opacity="0.8"/>
<path d="M833 220v1M803 427v1M738 43v1M746 566v1M811 319v1M830 275v1M120 624v1" stroke="#dcd446" stroke-width="2.25" stroke-linecap="round" fill="none" opacity="0.9"/>
<path d="M796 21v1M926 7v1M902 521v1" stroke="#dcd446" stroke-width="2.25" stroke-linecap="round" fill="none" opacity="1.0"/>
<path d="M678 5h0M104 382h0M131 117h0M123 532h0" stroke="#dcd446" stroke-width="2.5" stroke-linecap="round" fill="none" opacity="0.6"/>
<path d="M826 460h0M834 52h0M782 627h0" stroke="#dcd446" stroke-width="2.5" stroke-linecap="round" fill="none" opacity="0.7"/>
<path d="M130 622h0M923 140h0M782 187h0M745 526h0M903 56h0M888 20h0M822 128h0M877 279h0M738 546h0M849 185h0M862 478h0M774 607h0M112 253h0M911 0h0M871 253h0" stroke="#dcd446" stroke-width="2.5" stroke-linecap="round" fill="none" opacity="0.8"/>
<path d="M593 18h0M122 179h0M787 455h0M656 71h0M93 544h0M689 202h0M691 558h0" stroke="#dcd446" stroke-width="2.5" stroke-linecap="round" fill="none" opacity="0.9"/>
<path d="M896 492h0" stroke="#dcd446" stroke-width="2.5" stroke-linecap="round" fill="none" opacity="1.0"/>
<path d="M931 426v1M835 150v1M810 491v1M870 439v1M870 210v1M929 475v1M904 379v1M830 559v1M899 249v1M876 463v1" stroke="#dcd446" stroke-width="2.5" stroke-linecap="round" fill="none" opacity="0.7"/>
<path d="M750 478v1M883 179v1M908 529v1M796 573v1M843 423v1M911 411v1M926 313v1M847 285v1M869 304v1M928 620v1M867 554v1M905 515v1M815 130v1M857 30v1" stroke="#dcd446" stroke-width="2.5" stroke-linecap="round" fill="none" opacity="0.8"/>
<path d="M832 251v1" stroke="#dcd446" stroke-width="2.5" stroke-linecap="round" fill="none" opacity="0.9"/>
<path d="M921 464v1M862 186v1" stroke="#dcd446" stroke-width="2.5" stroke-linecap="round" fill="none" opacity="1.0"/>
<path d="M663 60h0" stroke="#dcd446" stroke-width="2.75" stroke-linecap="round" fill="none" opacity="0.6"/>
<path d="M827 50h0M927 538h0M921 180h0M913 10h0M890 514h0" stroke="#dcd446" stroke-width="2.75" stroke-linecap="round" fill="none" opacity="0.7"/>
<path d="M925 518h0M36 371h0M790 22h0M741 446h0M889 6h0M26 289h0M743 39h0" stroke="#dcd446" stroke-width="2.75" stroke-linecap="round" fill="none" opacity="0.8"/>
<path d="M837 234h0M815 167h0M72 588h0" stroke="#dcd446" stroke-width="2.75" stroke-linecap="round" fill="none" opacity="0.9"/>
<path d="M884 608h0M896 602h0M887 1h0M850 143h0M814 69h0" stroke="#dcd446" stroke-width="2.75" stroke-linecap="round" fill="none" opacity="1.0"/>
<path d="M28 248v1" stroke="#dcd446" stroke-width="2.75" stroke-linecap="round" fill="none" opacity="0.6"/>
<path d="M873 618v1M830 77v1M913 145v1M913 237v1M858 162v1M879 42v1M926 436v1M878 52v1" stroke="#dcd446" stroke-width="2.75" stroke-linecap="round" fill="none" opacity="0.7"/>
<path d="M883 455v1M754 215v1M927 243v1M831 294v1M794 108v1M66 479v1M726 125v1M43 72v1M877 224v1M868 489v1M870 102v1M23 213v1M770 72v1" stroke="#dcd446" stroke-width="2.75" stroke-linecap="round" fill="none" opacity="0.8"/>
<path d="M24 267v1M820 472v1" stroke="#dcd446" stroke-width="2.75" stroke-linecap="round" fill="none" opacity="0.9"/>
<path d="M888 232v1M864 603v1M892 202v1M893 39v1M886 283v1M834 66v1M924 470v1M867 586v1" stroke="#dcd446" stroke-width="2.75" stroke-linecap="round" fill="none" opacity="1.0"/>
<path d="M755 528h0" stroke="#dcd446" stroke-width="3.0" stroke-linecap="round" fill="none" opacity="0.6"/>
<path d="M794 29h0" stroke="#dcd446" stroke-width="3.0" stroke-linecap="round" fill="none" opacity="0.7"/>
<path d="M886 363h0M816 394h0" stroke="#dcd446" stroke-width="3.0" stroke-linecap="round" fill="none" opacity="0.8"/>
<path d="M778 168h0M751 554h0M767 538h0" stroke="#dcd446" stroke-width="3.0" stroke-linecap="round" fill="none" opacity="0.9"/>
<path d="M884 466v1M862 501v1M841 594v1M849 496v1" stroke="#dcd446" stroke-width="3.0" stroke-linecap="round" fill="none" opacity="0.7"/>
<path d="M734 90v1" stroke="#dcd446" stroke-width="3.0" stroke-linecap="round" fill="none" opacity="0.8"/>
<path d="M763 562v1M855 415v1" stroke="#dcd446" stroke-width="3.0" stroke-linecap="round" fill="none" opacity="0.9"/>
<path d="M888 213v1M864 447v1M824 616v1" stroke="#dcd446" stroke-width="3.0" stroke-linecap="round" fill="none" opacity="1.0"/>
<path d="M788 564h0M828 367h0M886 518h0" stroke="#dcd446" stroke-width="3.25" stroke-linecap="round" fill="none" opacity="0.7"/>
<path d="M895 593h0M905 534h0M927 45h0" stroke="#dcd446" stroke-width="3.25" stroke-linecap="round" fill="none" opacity="0.8"/>
<path d="M926 572h0" stroke="#dcd446" stroke-width="3.25" stroke-linecap="round" fill="none" opacity="1.0"/>
<path d="M883 580v1M924 82v1M911 406v1M836 275v1" stroke="#dcd446" stroke-width="3.25" stroke-linecap="round" fill="none" opacity="0.7"/>
<path d="M844 237v1M905 141v1M912 91v1M841 441v1M896 595v1M842 446v1M833 526v1" stroke="#dcd446" stroke-width="3.25" stroke-linecap="round" fill="none" opacity="0.8"/>
<path d="M827 339v1M802 546v1" stroke="#dcd446" stroke-width="3.25" stroke-linecap="round" fill="none" opacity="0.9"/>
<path d="M890 617v1" stroke="#dcd446" stroke-width="3.25" stroke-linecap="round" fill="none" opacity="1.0"/>
<path d="M833 148h0M872 277h0M883 183h0" stroke="#dcd446" stroke-width="3.5" stroke-linecap="round" fill="none" opacity="0.8"/>
<path d="M891 460v1" stroke="#dcd446" stroke-width="3.5" stroke-linecap="round" fill="none" opacity="0.7"/>
<path d="M858 243v1M846 581v1M892 360v1M876 252v1M857 145v1" stroke="#dcd446" stroke-width="3.5" stroke-linecap="round" fill="none" opacity="0.8"/>
<path d="M842 527v1M775 40v1" stroke="#dcd446" stroke-width="3.5" stroke-linecap="round" fill="none" opacity="1.0"/>
<path d="M855 76h0M894 592h0" stroke="#dcd446" stroke-width="3.75" stroke-linecap="round" fill="none" opacity="0.7"/>
<path d="M930 198h0" stroke="#dcd446" stroke-width="3.75" stroke-linecap="round" fill="none" opacity="1.0"/>
<path d="M852 5v1" stroke="#dcd446" stroke-width="3.75" stroke-linecap="round" fill="none" opacity="0.7"/>
<path d="M892 29v1M924 206v1M899 483v1" stroke="#dcd446" stroke-width="3.75" stroke-linecap="round" fill="none" opacity="0.8"/>
<path d="M920 4v1M921 438v1M927 578v1" stroke="#dcd446" stroke-width="3.75" stroke-linecap="round" fill="none" opacity="1.0"/>
<path d="M607.7 494.1h0M534.4 516.0h0M448.4 422.6h0M514.9 525.3h0M344.5 620.9h0M395.3 343.7h0M303.9 619.4h0M288.3 163.6h0M605.2 339.3h0M280.7 67.6h0M327.3 281.1h0M457.3 507.7h0M211.0 616.0h0M565.0 501.0h0M356.0 266.8h0M243.3 297.4h0M471.1 439.3h0M511.8 24.1h0M422.2 271.4h0" stroke="#dfd860" stroke-width="1.25" stroke-linecap="round" fill="none" opacity="0.6"/>
<path d="M354.2 145.4h0M592.4 440.1h0M617.9 197.0h0M548.8 519.3h0M171.3 343.9h0M453.6 527.4h0M590.3 399.6h0M151.5 355.9h0M178.8 371.5h0M507.1 334.5h0M258.9 434.4h0M561.0 555.9h0M308.9 111.6h0M160.5 565.2h0M248.3 221.1h0M384.6 5.6h0M471.3 36.7h0M293.7 570.6h0M531.0 308.5h0M641.4 227.7h0M304.8 124.1h0M440.5 158.8h0M288.4 392.7h0M210.0 376.0h0M449.8 69.7h0M255.1 418.6h0M216.9 457.2h0M550.1 613.2h0M240.2 335.5h0M199.3 142.1h0M471.6 475.9h0M542.4 265.0h0M438.0 242.8h0M596.3 505.7h0M403.2 99.9h0" stroke="#dfd860" stroke-width="1.25" stroke-linecap="round" fill="none" opacity="0.8"/>
<path d="M261.2 382.5h0M433.5 127.0h0M467.2 561.1h0M541.3 558.5h0M607.4 270.3h0M309.3 559.1h0M517.6 545.2h0M497.0 87.6h0M474.0 71.8h0M571.2 379.4h0M342.2 588.0h0M232.6 494.0h0M324.0 540.7h0M195.0 399.8h0M221.5 288.1h0M302.6 273.6h0M193.1 80.5h0M534.1 265.0h0M606.3 288.5h0M134.2 316.7h0" stroke="#dfd860" stroke-width="1.25" stroke-linecap="round" fill="none" opacity="0.9"/>
<path d="M337.3 249.7h0M151.0 332.1h0M305.8 216.0h0M283.0 568.6h0M210.0 200.5h0M246.6 51.7h0M209.9 327.5h0M562.0 627.5h0M331.8 15.9h0M443.3 330.4h0M174.3 459.2h0M559.2 530.8h0M412.6 353.8h0M265.6 462.4h0M573.6 423.8h0M304.7 556.3h0M370.5 26.9h0M180.1 473.4h0M446.2 195.4h0" stroke="#dfd860" stroke-width="1.5" stroke-linecap="round" fill="none" opacity="0.6"/>
<path d="M292.5 71.3h0M203.2 359.9h0M280.7 451.0h0M134.8 372.8h0M183.4 200.0h0M280.5 325.6h0M165.3 175.6h0M265.4 255.3h0M210.0 158.8h0M571.5 523.9h0M379.2 38.4h0M624.6 453.1h0M275.9 354.1h0M580.0 248.6h0M522.6 278.5h0M385.3 13.0h0M617.6 142.2h0M507.0 400.5h0M261.1 336.1h0M267.6 553.4h0M604.7 181.7h0M574.6 358.9h0M345.8 385.9h0M477.8 10.5h0M239.9 228.3h0M446.1 606.6h0M583.7 213.5h0M531.5 309.5h0M440.2 193.0h0M518.3 379.4h0M612.2 565.9h0M162.0 363.8h0M538.6 559.1h0M617.3 160.8h0M627.7 387.2h0M574.3 608.4h0M619.4 224.1h0M573.7 568.1h0M284.2 50.4h0M218.8 554.0h0M376.3 523.4h0M443.4 242.9h0M291.3 174.6h0M342.7 489.0h0M357.3 440.0h0M446.7 205.7h0M640.3 401.2h0" stroke="#dfd860" stroke-width="1.5" stroke-linecap="round" fill="none" opacity="0.8"/>
<path d="M624.4 352.7h0M434.8 596.1h0M536.9 137.5h0M160.0 548.0h0M460.6 483.6h0M543.5 332.2h0M631.1 501.0h0M156.3 347.2h0M552.3 387.7h0M428.3 206.7h0M250.4 312.8h0M433.0 117.2h0M343.5 329.0h0M550.5 278.0h0M228.5 504.7h0M146.8 315.2h0M422.3 221.4h0" stroke="#dfd860" stroke-width="1.5" stroke-linecap="round" fill="none" opacity="0.9"/>
<path d="M489 208h0M263 578h0M169 209h0M310 365h0M219 65h0M613 603h0M171 490h0M136 288h0M125 334h0M414 472h0M264 491h0M169 238h0M193 173h0M611 154h0M646 254h0M393 26h0M291 500h0M370 92h0" stroke="#dfd860" stroke-width="1.75" stroke-linecap="round" fill="none" opacity="0.6"/>
<path d="M134 242h0M218 491h0M549 520h0M144 457h0M233 147h0M120 289h0M171 308h0M115 322h0M202 379h0M200 409h0M262 14h0M207 195h0M153 231h0M189 560h0M327 457h0M166 624h0M554 285h0M144 319h0M495 424h0M511 110h0" stroke="#dfd860" stroke-width="1.75" stroke-linecap="round" fill="none" opacity="0.8"/>
<path d="M193 487h0M240 48h0M215 504h0M229 183h0M384 206h0M619 279h0M551 550h0M648 435h0M146 513h0M573 37h0M170 529h0M448 71h0M165 398h0M181 318h0M347 241h0M612 383h0" stroke="#dfd860" stroke-width="1.75" stroke-linecap="round" fill="none" opacity="0.9"/>
<path d="M150 207h0M216 305h0M180 434h0M641 408h0M545 78h0M265 134h0M519 26h0M488 270h0" stroke="#dfd860" stroke-width="2.0" stroke-linecap="round" fill="none" opacity="0.6"/>
<path d="M399 2h0M144 290h0M278 480h0M390 493h0M165 437h0M238 587h0M189 138h0M292 352h0M548 629h0M197 475h0M469 319h0M312 558h0M643 293h0M436 606h0M260 454h0M325 525h0M291 359h0M335 194h0M154 576h0M451 75h0M281 135h0M242 101h0" stroke="#dfd860" stroke-width="2.0" stroke-linecap="round" fill="none" opacity="0.8"/>
<path d="M634 342h0M192 160h0M381 81h0M299 601h0M436 79h0M247 589h0M353 614h0M317 604h0M247 398h0M231 453h0M126 310h0" stroke="#dfd860" stroke-width="2.0" stroke-linecap="round" fill="none" opacity="0.9"/>
<path d="M220 291h0M614 212h0M481 472h0M350 224h0M243 620h0M557 195h0" stroke="#dfd860" stroke-width="2.25" stroke-linecap="round" fill="none" opacity="0.6"/>
<path d="M397 360h0M246 546h0M532 622h0M342 376h0M468 560h0M573 559h0M341 623h0M229 226h0M385 603h0M175 440h0M508 428h0M485 556h0M282 351h0M212 230h0M450 317h0M169 372h0" stroke="#dfd860" stroke-width="2.25" stroke-linecap="round" fill="none" opacity="0.8"/>
<path d="M576 145h0M596 191h0M264 198h0M421 556h0M508 268h0M309 139h0M316 313h0" stroke="#dfd860" stroke-width="2.25" stroke-linecap="round" fill="none" opacity="0.9"/>
<path d="M629 181h0" stroke="#dfd860" stroke-width="2.5" stroke-linecap="round" fill="none" opacity="0.6"/>
<path d="M138 322h0M119 320h0M140 367h0M176 570h0M156 441h0" stroke="#dfd860" stroke-width="2.5" stroke-linecap="round" fill="none" opacity="0.8"/>
<path d="M138 332h0M152 198h0M164 579h0M117 313h0" stroke="#dfd860" stroke-width="2.5" stroke-linecap="round" fill="none" opacity="0.9"/>
<path d="M83.6 251.7h0M589.5 9.4h0M106.2 493.8h0" stroke="#e4dc58" stroke-width="1.25" stroke-linecap="round" fill="none" opacity="0.8"/>
<path d="M129.5 557.0h0M105.3 359.7h0M222.7 34.9h0" stroke="#e4dc58" stroke-width="1.25" stroke-linecap="round" fill="none" opacity="0.9"/>
<path d="M642.5 7.8h0M725.7 295.0h0M720.4 279.4h0M693.6 626.6h0M41.1 344.6h0" stroke="#e4dc58" stroke-width="1.5" stroke-linecap="round" fill="none" opacity="0.6"/>
<path d="M84.5 215.4h0M642.2 609.5h0M160.9 130.5h0M66.8 472.3h0M762.4 347.4h0M602.9 71.0h0M728.6 101.5h0M220.9 14.3h0M704.1 165.8h0M720.8 389.1h0M682.1 487.8h0" stroke="#e4dc58" stroke-width="1.5" stroke-linecap="round" fill="none" opacity="0.8"/>
<path d="M713.7 154.4h0M714.0 487.5h0M141.7 569.8h0M108.8 285.2h0M718.7 201.3h0" stroke="#e4dc58" stroke-width="1.5" stroke-linecap="round" fill="none" opacity="0.9"/>
<path d="M48.8 339.9v1M731.2 122.4v1M78.1 515.9v1M737.2 555.0v1" stroke="#e4dc58" stroke-width="1.5" stroke-linecap="round" fill="none" opacity="0.6"/>
<path d="M108.9 46.8v1M113.0 88.3v1M769.5 176.0v1M18.6 575.5v1M783.8 480.9v1M14.5 325.7v1M49.1 363.5v1" stroke="#e4dc58" stroke-width="1.5" stroke-linecap="round" fill="none" opacity="0.8"/>
<path d="M23.0 478.0v1M36.2 534.4v1" stroke="#e4dc58" stroke-width="1.5" stroke-linecap="round" fill="none" opacity="0.9"/>
<path d="M143 166h0M658 159h0M112 67h0M103 291h0M121 228h0M564 13h0M32 215h0M777 434h0M21 344h0M637 560h0" stroke="#e4dc58" stroke-width="1.75" stroke-linecap="round" fill="none" opacity="0.6"/>
<path d="M859 247h0" stroke="#e4dc58" stroke-width="1.75" stroke-linecap="round" fill="none" opacity="0.7"/>
<path d="M3 455h0M832 126h0M638 539h0M859 335h0M680 369h0M41 372h0M858 222h0M609 34h0M699 380h0M718 391h0M46 219h0M775 50h0M694 100h0M772 223h0M620 29h0" stroke="#e4dc58" stroke-width="1.75" stroke-linecap="round" fill="none" opacity="0.8"/>
<path d="M644 114h0M83 461h0M812 496h0M55 561h0M200 30h0M180 98h0M734 454h0M91 423h0M739 480h0M28 119h0M616 20h0M674 380h0" stroke="#e4dc58" stroke-width="1.75" stroke-linecap="round" fill="none" opacity="0.9"/>
<path d="M859 416h0" stroke="#e4dc58" stroke-width="1.75" stroke-linecap="round" fill="none" opacity="1.0"/>
<path d="M739 160v1M80 591v1M148 34v1M805 362v1M734 99v1" stroke="#e4dc58" stroke-width="1.75" stroke-linecap="round" fill="none" opacity="0.6"/>
<path d="M845 303v1" stroke="#e4dc58" stroke-width="1.75" stroke-linecap="round" fill="none" opacity="0.7"/>
<path d="M773 468v1M811 437v1M774 76v1M857 483v1M821 610v1M849 468v1M787 502v1M785 356v1M25 321v1M730 103v1M811 144v1M811 264v1M722 617v1M864 401v1M798 440v1M746 507v1" stroke="#e4dc58" stroke-width="1.75" stroke-linecap="round" fill="none" opacity="0.8"/>
<path d="M813 258v1M762 194v1M802 323v1" stroke="#e4dc58" stroke-width="1.75" stroke-linecap="round" fill="none" opacity="0.9"/>
<path d="M47 156h0M672 576h0M721 452h0M734 332h0M632 22h0M77 85h0M773 251h0M735 176h0M15 205h0" stroke="#e4dc58" stroke-width="2.0" stroke-linecap="round" fill="none" opacity="0.6"/>
<path d="M806 148h0" stroke="#e4dc58" stroke-width="2.0" stroke-linecap="round" fill="none" opacity="0.7"/>
<path d="M899 137h0M813 385h0M735 529h0M761 275h0M787 472h0M790 286h0M901 193h0M752 249h0M930 564h0M756 314h0M707 108h0M46 55h0M713 147h0M742 564h0M641 39h0M763 244h0M722 300h0M27 466h0M176 24h0M754 368h0M52 617h0M120 6h0M812 73h0" stroke="#e4dc58" stroke-width="2.0" stroke-linecap="round" fill="none" opacity="0.8"/>
<path d="M49 182h0M40 83h0M83 75h0M22 172h0M748 311h0M715 396h0M727 335h0M8 140h0M73 319h0M62 578h0M714 228h0M676 545h0M693 570h0M699 155h0M751 265h0M49 402h0M666 598h0M748 254h0" stroke="#e4dc58" stroke-width="2.0" stroke-linecap="round" fill="none" opacity="0.9"/>
<path d="M902 197h0M900 578h0" stroke="#e4dc58" stroke-width="2.0" stroke-linecap="round" fill="none" opacity="1.0"/>
<path d="M709 8v1M38 483v1M766 124v1M120 106v1M23 567v1M9 411v1M48 235v1" stroke="#e4dc58" stroke-width="2.0" stroke-linecap="round" fill="none" opacity="0.6"/>
<path d="M909 375v1M829 420v1M830 41v1" stroke="#e4dc58" stroke-width="2.0" stroke-linecap="round" fill="none" opacity="0.7"/>
<path d="M58 123v1M730 67v1M7 63v1M907 435v1M890 138v1M895 301v1M129 21v1M798 329v1M862 586v1M18 558v1M23 255v1M924 192v1M818 430v1M916 80v1M48 364v1M903 149v1M884 621v1M813 373v1M21 89v1M778 375v1M876 319v1M882 130v1M11 89v1" stroke="#e4dc58" stroke-width="2.0" stroke-linecap="round" fill="none" opacity="0.8"/>
<path d="M42 78v1M30 113v1M759 231v1M32 173v1M782 58v1" stroke="#e4dc58" stroke-width="2.0" stroke-linecap="round" fill="none" opacity="0.9"/>
<path d="M923 629v1M925 295v1M877 20v1M924 58v1M904 111v1" stroke="#e4dc58" stroke-width="2.0" stroke-linecap="round" fill="none" opacity="1.0"/>
<path d="M79 345h0M742 394h0M712 322h0M695 352h0M50 225h0M751 550h0" stroke="#e4dc58" stroke-width="2.25" stroke-linecap="round" fill="none" opacity="0.6"/>
<path d="M917 624h0M915 548h0M806 535h0M886 552h0" stroke="#e4dc58" stroke-width="2.25" stroke-linecap="round" fill="none" opacity="0.7"/>
<path d="M688 615h0M821 620h0M817 225h0M739 257h0M42 274h0M695 525h0M774 7h0M111 529h0M869 437h0M827 147h0M68 222h0M822 290h0M806 379h0M727 476h0M149 587h0M729 531h0M803 94h0M709 471h0M70 590h0M814 207h0M669 507h0M35 429h0" stroke="#e4dc58" stroke-width="2.25" stroke-linecap="round" fill="none" opacity="0.8"/>
<path d="M44 468h0M744 155h0M826 337h0M721 73h0M796 620h0M144 47h0M146 103h0" stroke="#e4dc58" stroke-width="2.25" stroke-linecap="round" fill="none" opacity="0.9"/>
<path d="M890 331h0M832 51h0M930 609h0M908 36h0M898 177h0M917 215h0" stroke="#e4dc58" stroke-width="2.25" stroke-linecap="round" fill="none" opacity="1.0"/>
<path d="M59 199v1M735 630v1" stroke="#e4dc58" stroke-width="2.25" stroke-linecap="round" fill="none" opacity="0.6"/>
<path d="M883 480v1M840 573v1" stroke="#e4dc58" stroke-width="2.25" stroke-linecap="round" fill="none" opacity="0.7"/>
<path d="M873 611v1M880 133v1M849 347v1M808 43v1M764 481v1M52 264v1M105 145v1M817 261v1M877 83v1M803 139v1M879 302v1M777 151v1M697 18v1M888 205v1M692 8v1M788 61v1" stroke="#e4dc58" stroke-width="2.25" stroke-linecap="round" fill="none" opacity="0.8"/>
<path d="M821 249v1M725 600v1M792 108v1M842 442v1M832 397v1" stroke="#e4dc58" stroke-width="2.25" stroke-linecap="round" fill="none" opacity="0.9"/>
<path d="M926 485v1M901 48v1M925 180v1" stroke="#e4dc58" stroke-width="2.25" stroke-linecap="round" fill="none" opacity="1.0"/>
<path d="M98 334h0" stroke="#e4dc58" stroke-width="2.5" stroke-linecap="round" fill="none" opacity="0.6"/>
<path d="M908 273h0M923 553h0M757 3h0M825 550h0" stroke="#e4dc58" stroke-width="2.5" stroke-linecap="round" fill="none" opacity="0.7"/>
<path d="M890 422h0M778 405h0M821 180h0M607 2h0M878 408h0M777 622h0M141 594h0M6 225h0M919 420h0M106 225h0M822 88h0M627 36h0" stroke="#e4dc58" stroke-width="2.5" stroke-linecap="round" fill="none" opacity="0.8"/>
<path d="M652 89h0M702 419h0M815 579h0M758 194h0M840 443h0M799 236h0" stroke="#e4dc58" stroke-width="2.5" stroke-linecap="round" fill="none" opacity="0.9"/>
<path d="M900 541h0M827 83h0M903 117h0M769 11h0" stroke="#e4dc58" stroke-width="2.5" stroke-linecap="round" fill="none" opacity="1.0"/>
<path d="M789 408v1" stroke="#e4dc58" stroke-width="2.5" stroke-linecap="round" fill="none" opacity="0.6"/>
<path d="M808 146v1M869 597v1M876 15v1M820 563v1M921 72v1M924 619v1M837 388v1M904 311v1" stroke="#e4dc58" stroke-width="2.5" stroke-linecap="round" fill="none" opacity="0.7"/>
<path d="M746 151v1M903 588v1M846 112v1M865 153v1M791 452v1M792 105v1M808 182v1M902 15v1M802 420v1M877 320v1M835 495v1M834 97v1M840 91v1M851 539v1M841 534v1M798 587v1M898 402v1M848 110v1" stroke="#e4dc58" stroke-width="2.5" stroke-linecap="round" fill="none" opacity="0.8"/>
<path d="M775 102v1M123 130v1" stroke="#e4dc58" stroke-width="2.5" stroke-linecap="round" fill="none" opacity="0.9"/>
<path d="M878 227v1M884 190v1M908 388v1M858 37v1M922 290v1M820 575v1M911 301v1M903 354v1M881 199v1" stroke="#e4dc58" stroke-width="2.5" stroke-linecap="round" fill="none" opacity="1.0"/>
<path d="M733 223h0" stroke="#e4dc58" stroke-width="2.75" stroke-linecap="round" fill="none" opacity="0.6"/>
<path d="M729 182h0M814 502h0M924 389h0M894 490h0M772 116h0M850 290h0M796 500h0M894 41h0M931 614h0M836 11h0M896 249h0M73 156h0" stroke="#e4dc58" stroke-width="2.75" stroke-linecap="round" fill="none" opacity="0.8"/>
<path d="M20 333h0M45 450h0M11 184h0M33 54h0" stroke="#e4dc58" stroke-width="2.75" stroke-linecap="round" fill="none" opacity="0.9"/>
<path d="M915 494h0" stroke="#e4dc58" stroke-width="2.75" stroke-linecap="round" fill="none" opacity="1.0"/>
<path d="M110 42v1M79 580v1M11 280v1M701 74v1" stroke="#e4dc58" stroke-width="2.75" stroke-linecap="round" fill="none" opacity="0.6"/>
<path d="M830 469v1M833 340v1M897 191v1M858 607v1M879 412v1" stroke="#e4dc58" stroke-width="2.75" stroke-linecap="round" fill="none" opacity="0.7"/>
<path d="M896 102v1M872 65v1M866 181v1M927 497v1M865 499v1M911 83v1M862 151v1M904 107v1M825 44v1M770 580v1M838 371v1M929 66v1M870 116v1M925 616v1M913 380v1M896 182v1M901 378v1M834 292v1M929 611v1" stroke="#e4dc58" stroke-width="2.75" stroke-linecap="round" fill="none" opacity="0.8"/>
<path d="M731 586v1M2 384v1M829 393v1" stroke="#e4dc58" stroke-width="2.75" stroke-linecap="round" fill="none" opacity="0.9"/>
<path d="M915 551v1M893 488v1M922 580v1M914 47v1M890 533v1M870 133v1M914 608v1M905 63v1" stroke="#e4dc58" stroke-width="2.75" stroke-linecap="round" fill="none" opacity="1.0"/>
<path d="M899 285h0M874 149h0" stroke="#e4dc58" stroke-width="3.0" stroke-linecap="round" fill="none" opacity="0.7"/>
<path d="M846 116h0M788 31h0M820 46h0" stroke="#e4dc58" stroke-width="3.0" stroke-linecap="round" fill="none" opacity="0.8"/>
<path d="M703 20h0" stroke="#e4dc58" stroke-width="3.0" stroke-linecap="round" fill="none" opacity="0.9"/>
<path d="M778 146v1M760 116v1" stroke="#e4dc58" stroke-width="3.0" stroke-linecap="round" fill="none" opacity="0.6"/>
<path d="M897 304v1M860 552v1" stroke="#e4dc58" stroke-width="3.0" stroke-linecap="round" fill="none" opacity="0.7"/>
<path d="M892 389v1M799 54v1M882 232v1M886 295v1M851 597v1M865 243v1M752 101v1" stroke="#e4dc58" stroke-width="3.0" stroke-linecap="round" fill="none" opacity="0.8"/>
<path d="M787 289v1" stroke="#e4dc58" stroke-width="3.0" stroke-linecap="round" fill="none" opacity="0.9"/>
<path d="M898 408v1M868 541v1" stroke="#e4dc58" stroke-width="3.0" stroke-linecap="round" fill="none" opacity="1.0"/>
<path d="M919 543h0" stroke="#e4dc58" stroke-width="3.25" stroke-linecap="round" fill="none" opacity="0.7"/>
<path d="M866 34h0M900 441h0M926 5h0" stroke="#e4dc58" stroke-width="3.25" stroke-linecap="round" fill="none" opacity="0.8"/>
<path d="M818 439h0" stroke="#e4dc58" stroke-width="3.25" stroke-linecap="round" fill="none" opacity="0.9"/>
<path d="M917 584v1" stroke="#e4dc58" stroke-width="3.25" stroke-linecap="round" fill="none" opacity="0.7"/>
<path d="M809 168v1M814 128v1M903 153v1M914 440v1M816 165v1M905 173v1" stroke="#e4dc58" stroke-width="3.25" stroke-linecap="round" fill="none" opacity="0.8"/>
<path d="M842 484v1M795 88v1M787 572v1M772 103v1" stroke="#e4dc58" stroke-width="3.25" stroke-linecap="round" fill="none" opacity="0.9"/>
<path d="M916 242v1" stroke="#e4dc58" stroke-width="3.25" stroke-linecap="round" fill="none" opacity="1.0"/>
<path d="M867 501h0" stroke="#e4dc58" stroke-width="3.5" stroke-linecap="round" fill="none" opacity="0.7"/>
<path d="M857 207h0M844 115h0" stroke="#e4dc58" stroke-width="3.5" stroke-linecap="round" fill="none" opacity="0.8"/>
<path d="M861 545v1M822 64v1" stroke="#e4dc58" stroke-width="3.5" stroke-linecap="round" fill="none" opacity="0.7"/>
<path d="M844 513v1" stroke="#e4dc58" stroke-width="3.5" stroke-linecap="round" fill="none" opacity="0.8"/>
<path d="M833 547v1M830 548v1" stroke="#e4dc58" stroke-width="3.5" stroke-linecap="round" fill="none" opacity="1.0"/>
<path d="M928 175h0M913 432h0" stroke="#e4dc58" stroke-width="3.75" stroke-linecap="round" fill="none" opacity="0.7"/>
<path d="M903 134h0M905 121h0M821 12h0M914 305h0" stroke="#e4dc58" stroke-width="3.75" stroke-linecap="round" fill="none" opacity="0.8"/>
<path d="M923 16h0" stroke="#e4dc58" stroke-width="3.75" stroke-linecap="round" fill="none" opacity="1.0"/>
<path d="M879 543v1" stroke="#e4dc58" stroke-width="3.75" stroke-linecap="round" fill="none" opacity="0.7"/>
<path d="M922 459v1M856 79v1M927 11v1" stroke="#e4dc58" stroke-width="3.75" stroke-linecap="round" fill="none" opacity="0.8"/>
<path d="M908 502v1M810 31v1M902 496v1M922 436v1M821 49v1" stroke="#e4dc58" stroke-width="3.75" stroke-linecap="round" fill="none" opacity="1.0"/>
<path d="M421.3 142.3h0M197.6 95.6h0M534.8 259.0h0M511.9 103.4h0M466.7 577.6h0M131.3 393.4h0M298.1 339.1h0M177.5 362.3h0M462.9 597.0h0M358.5 622.0h0M497.9 447.4h0M307.6 280.1h0M473.4 131.6h0M435.7 455.1h0M498.3 410.8h0M446.8 344.9h0M494.4 158.9h0M625.2 305.4h0" stroke="#e8e27a" stroke-width="1.25" stroke-linecap="round" fill="none" opacity="0.6"/>
<path d="M259.8 503.7h0M149.6 268.7h0M562.4 114.0h0M589.5 230.3h0M247.9 263.8h0M209.9 258.1h0M317.4 93.2h0M297.3 370.4h0M238.4 76.8h0M440.4 566.7h0M459.7 50.8h0M498.7 278.6h0M487.6 11.9h0M418.4 287.0h0M496.2 522.6h0M638.0 482.6h0M287.9 487.8h0M609.3 128.5h0M358.2 311.3h0M400.1 116.8h0M488.7 357.1h0M527.0 436.6h0M566.5 618.5h0M375.2 114.8h0M625.3 354.0h0M548.6 259.8h0M339.8 545.3h0M243.6 296.2h0" stroke="#e8e27a" stroke-width="1.25" stroke-linecap="round" fill="none" opacity="0.8"/>
<path d="M575.6 191.0h0M631.4 449.3h0M465.2 332.0h0M199.2 596.2h0M282.9 201.9h0M613.2 397.2h0M245.3 629.6h0M489.3 587.5h0M506.1 477.3h0M418.3 166.5h0M519.3 47.8h0M550.5 276.9h0M392.4 371.5h0M590.4 330.5h0M281.9 308.9h0" stroke="#e8e27a" stroke-width="1.25" stroke-linecap="round" fill="none" opacity="0.9"/>
<path d="M352.0 144.6h0M484.6 11.3h0M556.4 570.0h0M647.0 479.5h0M136.6 497.2h0M568.3 109.3h0M515.2 270.4h0M320.9 507.0h0M423.2 520.4h0M603.8 136.7h0M436.3 69.3h0M451.1 568.9h0M423.6 74.2h0M599.2 601.9h0M356.1 205.9h0M179.0 323.9h0M624.8 468.5h0M177.9 200.9h0M323.3 202.6h0M264.6 582.4h0M596.4 130.7h0M328.0 131.4h0M396.1 240.6h0" stroke="#e8e27a" stroke-width="1.5" stroke-linecap="round" fill="none" opacity="0.6"/>
<path d="M495.1 329.8h0M340.9 159.5h0M481.5 93.9h0M184.3 372.9h0M149.2 434.7h0M592.7 66.9h0M612.5 437.7h0M356.6 289.9h0M511.2 11.2h0M523.3 337.7h0M260.0 300.5h0M562.9 527.5h0M476.4 464.5h0M315.1 388.4h0M318.7 122.0h0M589.9 174.1h0M278.4 77.0h0M302.0 591.3h0M243.9 327.9h0M356.9 60.4h0M378.1 570.2h0M161.3 383.8h0M198.2 602.8h0M534.9 101.3h0M237.0 550.5h0M315.4 489.0h0M414.6 51.3h0M217.6 332.9h0M404.2 315.9h0M356.3 445.6h0M237.2 254.6h0M569.5 70.2h0M645.4 405.1h0M152.3 258.8h0M565.9 403.5h0M385.6 91.0h0M223.5 276.4h0M219.3 390.9h0M300.3 355.9h0M118.1 360.4h0M290.1 532.8h0M126.8 273.3h0M542.8 186.3h0M421.6 557.9h0M649.5 257.4h0" stroke="#e8e27a" stroke-width="1.5" stroke-linecap="round" fill="none" opacity="0.8"/>
<path d="M268.4 472.8h0M178.4 393.1h0M128.1 424.6h0M318.6 94.0h0M441.6 313.4h0M379.7 546.8h0M627.1 285.6h0M150.7 273.3h0M506.7 327.1h0M145.3 409.4h0M383.2 282.7h0M637.0 431.6h0M328.4 39.1h0M618.3 213.5h0M480.1 96.7h0M379.2 88.0h0M530.6 96.6h0" stroke="#e8e27a" stroke-width="1.5" stroke-linecap="round" fill="none" opacity="0.9"/>
<path d="M208 115h0M212 583h0M169 555h0M229 543h0M404 310h0M637 250h0M631 506h0M249 471h0M515 320h0M297 389h0M219 627h0M293 269h0M169 272h0M514 61h0M295 458h0" stroke="#e8e27a" stroke-width="1.75" stroke-linecap="round" fill="none" opacity="0.6"/>
<path d="M124 419h0M624 447h0M137 261h0M613 361h0M494 80h0M606 414h0M131 303h0M420 0h0M175 534h0M178 270h0M197 134h0M219 60h0M141 415h0M276 126h0M393 414h0M148 368h0M629 412h0M309 87h0M214 71h0M113 348h0M323 144h0M656 320h0M235 76h0M149 524h0M285 348h0M559 353h0M164 619h0M353 4h0M490 410h0M341 278h0M128 473h0M193 244h0M515 463h0M147 188h0M608 89h0M375 243h0" stroke="#e8e27a" stroke-width="1.75" stroke-linecap="round" fill="none" opacity="0.8"/>
<path d="M587 367h0M330 437h0M136 344h0M225 487h0M616 208h0M260 620h0M192 334h0M255 98h0M268 197h0M519 212h0M345 16h0M414 173h0M666 328h0M527 438h0M576 209h0M415 27h0" stroke="#e8e27a" stroke-width="1.75" stroke-linecap="round" fill="none" opacity="0.9"/>
<path d="M538 615h0M520 526h0M521 555h0M138 331h0M564 418h0M557 454h0M453 162h0M544 353h0M157 549h0M332 510h0" stroke="#e8e27a" stroke-width="2.0" stroke-linecap="round" fill="none" opacity="0.6"/>
<path d="M529 512h0M450 421h0M196 528h0M565 115h0M500 446h0M307 95h0M581 157h0M158 553h0M173 283h0M172 285h0M466 325h0M144 173h0M413 233h0M158 239h0M555 71h0M125 289h0M449 250h0" stroke="#e8e27a" stroke-width="2.0" stroke-linecap="round" fill="none" opacity="0.8"/>
<path d="M365 251h0M591 494h0M644 265h0M498 570h0M600 120h0M157 543h0M628 403h0M180 206h0M468 523h0M206 272h0M217 308h0" stroke="#e8e27a" stroke-width="2.0" stroke-linecap="round" fill="none" opacity="0.9"/>
<path d="M263 455h0M252 242h0M311 78h0M454 428h0M188 433h0" stroke="#e8e27a" stroke-width="2.25" stroke-linecap="round" fill="none" opacity="0.6"/>
<path d="M591 505h0M536 589h0M400 428h0M230 468h0M626 470h0M298 552h0M469 273h0M620 485h0M464 114h0M617 425h0M527 547h0M235 449h0M437 119h0M242 570h0M304 339h0M441 557h0M188 509h0M180 100h0M282 86h0" stroke="#e8e27a" stroke-width="2.25" stroke-linecap="round" fill="none" opacity="0.8"/>
<path d="M371 68h0M377 439h0M615 329h0M175 313h0M399 29h0M369 617h0M573 622h0M337 126h0" stroke="#e8e27a" stroke-width="2.25" stroke-linecap="round" fill="none" opacity="0.9"/>
<path d="M190 128h0M137 508h0M182 551h0M186 625h0" stroke="#e8e27a" stroke-width="2.5" stroke-linecap="round" fill="none" opacity="0.6"/>
<path d="M181 599h0M116 277h0M116 367h0M632 155h0" stroke="#e8e27a" stroke-width="2.5" stroke-linecap="round" fill="none" opacity="0.8"/>
<path d="M236 36h0M117 366h0" stroke="#e8e27a" stroke-width="2.5" stroke-linecap="round" fill="none" opacity="0.9"/>
<path d="M95.9 359.9h0M691.1 472.2h0M674.9 493.0h0M107.9 436.3h0" stroke="#e8e488" stroke-width="1.25" stroke-linecap="round" fill="none" opacity="0.6"/>
<path d="M84.0 282.5h0M642.5 605.8h0M115.0 238.1h0M709.1 260.3h0M585.4 45.0h0M99.1 215.7h0M158.1 85.2h0" stroke="#e8e488" stroke-width="1.25" stroke-linecap="round" fill="none" opacity="0.8"/>
<path d="M89.8 440.3h0M119.3 206.6h0M89.1 329.5h0" stroke="#e8e488" stroke-width="1.25" stroke-linecap="round" fill="none" opacity="0.9"/>
<path d="M691.3 567.3h0M109.2 554.2h0M728.4 238.4h0M144.3 141.7h0M694.4 526.5h0M755.6 541.2h0M668.0 74.9h0M760.9 322.2h0M704.9 224.2h0M658.3 100.1h0M683.2 526.3h0" stroke="#e8e488" stroke-width="1.5" stroke-linecap="round" fill="none" opacity="0.6"/>
<path d="M104.5 543.2h0M707.1 555.9h0M707.1 547.1h0M642.6 603.6h0M636.2 53.8h0M655.9 601.1h0M173.2 34.5h0M714.7 163.6h0M74.3 19.9h0M25.8 302.3h0M56.9 132.8h0M727.4 240.6h0M21.7 346.9h0M45.1 517.6h0M736.7 523.9h0M697.6 137.3h0M783.3 208.1h0M646.0 58.2h0" stroke="#e8e488" stroke-width="1.5" stroke-linecap="round" fill="none" opacity="0.8"/>
<path d="M669.6 349.7h0M79.3 275.8h0M88.6 407.5h0M692.0 390.6h0M682.1 619.6h0" stroke="#e8e488" stroke-width="1.5" stroke-linecap="round" fill="none" opacity="0.9"/>
<path d="M742.1 500.3v1M89.1 19.7v1M197.2 23.3v1M213.3 0.5v1" stroke="#e8e488" stroke-width="1.5" stroke-linecap="round" fill="none" opacity="0.6"/>
<path d="M753.7 501.7v1M50.4 204.2v1M81.3 621.4v1M13.9 626.1v1M54.0 187.8v1M178.6 11.0v1" stroke="#e8e488" stroke-width="1.5" stroke-linecap="round" fill="none" opacity="0.8"/>
<path d="M736.8 547.7v1M754.8 461.3v1M81.8 517.0v1M122.2 111.0v1M39.8 106.8v1" stroke="#e8e488" stroke-width="1.5" stroke-linecap="round" fill="none" opacity="0.9"/>
<path d="M35 214h0M792 202h0M114 410h0M706 401h0M114 244h0M89 198h0M56 188h0M144 162h0M775 223h0M671 588h0M207 34h0M101 106h0M655 477h0M109 386h0M162 1h0" stroke="#e8e488" stroke-width="1.75" stroke-linecap="round" fill="none" opacity="0.6"/>
<path d="M845 370h0M831 176h0M842 392h0" stroke="#e8e488" stroke-width="1.75" stroke-linecap="round" fill="none" opacity="0.7"/>
<path d="M749 152h0M129 496h0M726 360h0M88 95h0M692 256h0M50 162h0M103 230h0M62 100h0M668 194h0M8 322h0M69 517h0M703 476h0M47 501h0M790 361h0M153 599h0M129 500h0M717 398h0M825 492h0M665 79h0M694 532h0M738 124h0M39 489h0M707 480h0M33 593h0M778 100h0" stroke="#e8e488" stroke-width="1.75" stroke-linecap="round" fill="none" opacity="0.8"/>
<path d="M765 369h0M747 135h0M588 40h0M65 261h0M671 398h0M188 53h0M641 143h0M773 105h0M760 258h0M3 371h0M90 370h0M701 243h0M72 302h0M29 337h0" stroke="#e8e488" stroke-width="1.75" stroke-linecap="round" fill="none" opacity="0.9"/>
<path d="M839 574h0" stroke="#e8e488" stroke-width="1.75" stroke-linecap="round" fill="none" opacity="1.0"/>
<path d="M87 551v1" stroke="#e8e488" stroke-width="1.75" stroke-linecap="round" fill="none" opacity="0.6"/>
<path d="M748 53v1M830 205v1M807 577v1" stroke="#e8e488" stroke-width="1.75" stroke-linecap="round" fill="none" opacity="0.7"/>
<path d="M760 108v1M768 352v1M716 4v1M11 602v1M805 168v1M822 252v1M795 63v1M71 144v1M878 283v1M751 120v1M766 8v1M841 545v1M798 91v1M844 324v1" stroke="#e8e488" stroke-width="1.75" stroke-linecap="round" fill="none" opacity="0.8"/>
<path d="M803 116v1M2 139v1M770 94v1M103 57v1M146 32v1M774 65v1" stroke="#e8e488" stroke-width="1.75" stroke-linecap="round" fill="none" opacity="0.9"/>
<path d="M867 285v1" stroke="#e8e488" stroke-width="1.75" stroke-linecap="round" fill="none" opacity="1.0"/>
<path d="M29 327h0M17 486h0M31 173h0M38 289h0M673 146h0M84 436h0M734 333h0M66 143h0" stroke="#e8e488" stroke-width="2.0" stroke-linecap="round" fill="none" opacity="0.6"/>
<path d="M829 178h0M835 448h0M879 241h0M918 433h0" stroke="#e8e488" stroke-width="2.0" stroke-linecap="round" fill="none" opacity="0.7"/>
<path d="M102 378h0M768 450h0M99 225h0M717 133h0M10 43h0M14 537h0M197 31h0M110 136h0M719 544h0M855 501h0M917 277h0M716 323h0M25 191h0M36 429h0M33 494h0M733 172h0M731 249h0M19 587h0M825 301h0M751 359h0M776 124h0M713 453h0M762 428h0M768 277h0M46 404h0M182 29h0M713 448h0M918 621h0" stroke="#e8e488" stroke-width="2.0" stroke-linecap="round" fill="none" opacity="0.8"/>
<path d="M87 113h0M140 68h0M786 330h0M81 291h0M805 403h0M44 127h0M654 20h0M206 43h0M688 85h0" stroke="#e8e488" stroke-width="2.0" stroke-linecap="round" fill="none" opacity="0.9"/>
<path d="M759 13h0" stroke="#e8e488" stroke-width="2.0" stroke-linecap="round" fill="none" opacity="1.0"/>
<path d="M771 308v1M5 42v1M787 280v1M51 539v1M801 430v1M29 266v1M799 233v1M696 57v1M742 597v1M790 375v1" stroke="#e8e488" stroke-width="2.0" stroke-linecap="round" fill="none" opacity="0.6"/>
<path d="M921 144v1M883 413v1M735 7v1M839 258v1M869 11v1" stroke="#e8e488" stroke-width="2.0" stroke-linecap="round" fill="none" opacity="0.7"/>
<path d="M880 311v1M16 455v1M728 98v1M794 158v1M29 340v1M16 81v1M28 351v1M896 377v1M17 531v1M886 361v1M6 129v1M929 506v1M104 32v1M894 132v1M783 34v1M666 17v1M754 459v1M67 130v1M783 426v1M806 187v1M706 3v1M36 62v1M833 184v1M742 533v1M841 197v1M783 420v1" stroke="#e8e488" stroke-width="2.0" stroke-linecap="round" fill="none" opacity="0.8"/>
<path d="M44 169v1M800 178v1M864 303v1M749 619v1M835 250v1M124 16v1" stroke="#e8e488" stroke-width="2.0" stroke-linecap="round" fill="none" opacity="0.9"/>
<path d="M931 585v1M868 548v1M892 25v1M886 11v1" stroke="#e8e488" stroke-width="2.0" stroke-linecap="round" fill="none" opacity="1.0"/>
<path d="M786 180h0M732 486h0M748 367h0M584 12h0M155 119h0" stroke="#e8e488" stroke-width="2.25" stroke-linecap="round" fill="none" opacity="0.6"/>
<path d="M849 58h0M914 591h0" stroke="#e8e488" stroke-width="2.25" stroke-linecap="round" fill="none" opacity="0.7"/>
<path d="M866 8h0M826 21h0M83 488h0M697 350h0M598 20h0M108 630h0M144 155h0M125 510h0M830 384h0M757 380h0M689 194h0M794 456h0M920 601h0M768 99h0M661 167h0M696 551h0M51 585h0M845 401h0M659 517h0M895 395h0" stroke="#e8e488" stroke-width="2.25" stroke-linecap="round" fill="none" opacity="0.8"/>
<path d="M133 140h0M834 189h0M46 437h0M703 66h0M817 454h0M696 229h0M672 590h0M752 555h0" stroke="#e8e488" stroke-width="2.25" stroke-linecap="round" fill="none" opacity="0.9"/>
<path d="M900 273h0M858 235h0" stroke="#e8e488" stroke-width="2.25" stroke-linecap="round" fill="none" opacity="1.0"/>
<path d="M722 94v1M63 246v1M719 54v1" stroke="#e8e488" stroke-width="2.25" stroke-linecap="round" fill="none" opacity="0.6"/>
<path d="M881 598v1M864 202v1M808 516v1M829 153v1" stroke="#e8e488" stroke-width="2.25" stroke-linecap="round" fill="none" opacity="0.7"/>
<path d="M762 109v1M782 390v1M898 436v1M884 396v1M61 290v1M875 111v1M801 51v1M791 2v1M808 406v1M835 324v1M869 475v1M771 386v1M771 55v1M914 425v1M881 32v1M801 576v1M926 342v1M893 205v1M101 600v1M928 53v1M882 304v1M920 86v1" stroke="#e8e488" stroke-width="2.25" stroke-linecap="round" fill="none" opacity="0.8"/>
<path d="M46 466v1M799 122v1M67 560v1M767 422v1M794 194v1M787 626v1" stroke="#e8e488" stroke-width="2.25" stroke-linecap="round" fill="none" opacity="0.9"/>
<path d="M883 9v1M910 265v1M880 71v1M873 514v1M904 578v1" stroke="#e8e488" stroke-width="2.25" stroke-linecap="round" fill="none" opacity="1.0"/>
<path d="M113 230h0M81 392h0M669 160h0" stroke="#e8e488" stroke-width="2.5" stroke-linecap="round" fill="none" opacity="0.6"/>
<path d="M846 540h0M862 268h0" stroke="#e8e488" stroke-width="2.5" stroke-linecap="round" fill="none" opacity="0.7"/>
<path d="M94 229h0M885 186h0M894 292h0M851 199h0M846 489h0M856 459h0M61 64h0M86 30h0M657 101h0M767 453h0" stroke="#e8e488" stroke-width="2.5" stroke-linecap="round" fill="none" opacity="0.8"/>
<path d="M760 545h0M711 489h0M143 580h0M724 273h0M44 39h0M108 484h0M689 168h0M720 582h0M858 249h0M26 23h0M8 397h0" stroke="#e8e488" stroke-width="2.5" stroke-linecap="round" fill="none" opacity="0.9"/>
<path d="M889 590h0" stroke="#e8e488" stroke-width="2.5" stroke-linecap="round" fill="none" opacity="1.0"/>
<path d="M871 533v1M896 361v1M897 101v1M780 15v1M915 452v1M857 152v1M870 267v1M862 137v1M871 599v1" stroke="#e8e488" stroke-width="2.5" stroke-linecap="round" fill="none" opacity="0.7"/>
<path d="M893 406v1M930 41v1M902 520v1M865 549v1M924 89v1M818 495v1M922 8v1M786 609v1M891 289v1M868 617v1M870 284v1M901 302v1M801 321v1M855 431v1M844 379v1M818 56v1M915 482v1M825 537v1M838 548v1M842 555v1M893 339v1M717 591v1" stroke="#e8e488" stroke-width="2.5" stroke-linecap="round" fill="none" opacity="0.8"/>
<path d="M737 146v1M710 55v1M857 313v1M849 463v1M769 508v1" stroke="#e8e488" stroke-width="2.5" stroke-linecap="round" fill="none" opacity="0.9"/>
<path d="M876 327v1M903 301v1M870 12v1M880 219v1M829 611v1M795 5v1M899 312v1M905 519v1" stroke="#e8e488" stroke-width="2.5" stroke-linecap="round" fill="none" opacity="1.0"/>
<path d="M686 74h0M15 606h0" stroke="#e8e488" stroke-width="2.75" stroke-linecap="round" fill="none" opacity="0.6"/>
<path d="M901 114h0M870 38h0M901 290h0M852 134h0" stroke="#e8e488" stroke-width="2.75" stroke-linecap="round" fill="none" opacity="0.7"/>
<path d="M924 18h0M64 164h0M778 149h0M772 373h0M823 389h0M831 253h0M761 283h0M687 85h0M671 84h0M45 108h0M928 381h0M891 625h0" stroke="#e8e488" stroke-width="2.75" stroke-linecap="round" fill="none" opacity="0.8"/>
<path d="M22 269h0" stroke="#e8e488" stroke-width="2.75" stroke-linecap="round" fill="none" opacity="0.9"/>
<path d="M870 67h0M902 154h0M861 605h0M893 533h0" stroke="#e8e488" stroke-width="2.75" stroke-linecap="round" fill="none" opacity="1.0"/>
<path d="M60 129v1M763 428v1M784 564v1M108 9v1M800 454v1M744 545v1" stroke="#e8e488" stroke-width="2.75" stroke-linecap="round" fill="none" opacity="0.6"/>
<path d="M901 554v1M908 63v1M876 204v1M924 171v1M875 457v1M925 524v1M920 145v1M826 38v1M921 102v1M896 232v1M841 202v1" stroke="#e8e488" stroke-width="2.75" stroke-linecap="round" fill="none" opacity="0.7"/>
<path d="M926 23v1M877 629v1M896 118v1M919 402v1M930 508v1M16 614v1M870 557v1M918 217v1M929 97v1M814 200v1M765 398v1M829 457v1M742 30v1M879 456v1M853 241v1M8 308v1M856 52v1M838 496v1M922 239v1" stroke="#e8e488" stroke-width="2.75" stroke-linecap="round" fill="none" opacity="0.8"/>
<path d="M91 39v1M812 285v1" stroke="#e8e488" stroke-width="2.75" stroke-linecap="round" fill="none" opacity="0.9"/>
<path d="M915 412v1M897 349v1M887 108v1" stroke="#e8e488" stroke-width="2.75" stroke-linecap="round" fill="none" opacity="1.0"/>
<path d="M728 81h0" stroke="#e8e488" stroke-width="3.0" stroke-linecap="round" fill="none" opacity="0.6"/>
<path d="M873 438h0M804 63h0M811 624h0M877 249h0" stroke="#e8e488" stroke-width="3.0" stroke-linecap="round" fill="none" opacity="0.8"/>
<path d="M866 240h0M860 155h0M841 154h0" stroke="#e8e488" stroke-width="3.0" stroke-linecap="round" fill="none" opacity="1.0"/>
<path d="M857 545v1M857 517v1" stroke="#e8e488" stroke-width="3.0" stroke-linecap="round" fill="none" opacity="0.7"/>
<path d="M756 609v1M752 550v1M819 44v1M876 280v1M843 539v1M856 133v1M771 212v1M807 34v1" stroke="#e8e488" stroke-width="3.0" stroke-linecap="round" fill="none" opacity="0.8"/>
<path d="M811 88v1" stroke="#e8e488" stroke-width="3.0" stroke-linecap="round" fill="none" opacity="1.0"/>
<path d="M918 557h0" stroke="#e8e488" stroke-width="3.25" stroke-linecap="round" fill="none" opacity="0.7"/>
<path d="M928 242h0M763 28h0M920 174h0" stroke="#e8e488" stroke-width="3.25" stroke-linecap="round" fill="none" opacity="0.8"/>
<path d="M907 423v1M881 603v1" stroke="#e8e488" stroke-width="3.25" stroke-linecap="round" fill="none" opacity="0.7"/>
<path d="M794 83v1M849 80v1M781 101v1M800 563v1M855 97v1M909 524v1M906 607v1M916 82v1M822 546v1M851 614v1" stroke="#e8e488" stroke-width="3.25" stroke-linecap="round" fill="none" opacity="0.8"/>
<path d="M834 423v1" stroke="#e8e488" stroke-width="3.25" stroke-linecap="round" fill="none" opacity="0.9"/>
<path d="M873 575v1M904 529v1M924 499v1" stroke="#e8e488" stroke-width="3.25" stroke-linecap="round" fill="none" opacity="1.0"/>
<path d="M841 499h0M821 110h0" stroke="#e8e488" stroke-width="3.5" stroke-linecap="round" fill="none" opacity="0.7"/>
<path d="M810 624h0M859 413h0" stroke="#e8e488" stroke-width="3.5" stroke-linecap="round" fill="none" opacity="0.8"/>
<path d="M828 598h0" stroke="#e8e488" stroke-width="3.5" stroke-linecap="round" fill="none" opacity="1.0"/>
<path d="M828 577v1M892 285v1M860 190v1" stroke="#e8e488" stroke-width="3.5" stroke-linecap="round" fill="none" opacity="0.7"/>
<path d="M895 274v1M801 35v1" stroke="#e8e488" stroke-width="3.5" stroke-linecap="round" fill="none" opacity="0.8"/>
<path d="M790 51v1" stroke="#e8e488" stroke-width="3.5" stroke-linecap="round" fill="none" opacity="1.0"/>
<path d="M862 90h0" stroke="#e8e488" stroke-width="3.75" stroke-linecap="round" fill="none" opacity="0.7"/>
<path d="M864 597h0" stroke="#e8e488" stroke-width="3.75" stroke-linecap="round" fill="none" opacity="0.8"/>
<path d="M861 101h0" stroke="#e8e488" stroke-width="3.75" stroke-linecap="round" fill="none" opacity="1.0"/>
<path d="M914 477v1M916 377v1" stroke="#e8e488" stroke-width="3.75" stroke-linecap="round" fill="none" opacity="0.7"/>
<path d="M897 32v1M930 599v1M913 284v1M897 503v1" stroke="#e8e488" stroke-width="3.75" stroke-linecap="round" fill="none" opacity="0.8"/>
<path d="M912 614v1M922 469v1" stroke="#e8e488" stroke-width="3.75" stroke-linecap="round" fill="none" opacity="1.0"/>
<path d="M187.1 113.9h0M316.6 240.1h0M598.0 227.9h0M545.2 468.7h0M163.4 444.2h0M293.1 166.3h0M520.6 605.1h0M363.0 338.1h0M264.1 230.9h0M391.9 229.1h0M493.5 349.8h0" stroke="#f3f0c0" stroke-width="1.25" stroke-linecap="round" fill="none" opacity="0.6"/>
<path d="M277.1 15.4h0M163.2 396.5h0M635.5 415.6h0M292.4 613.7h0M577.5 238.1h0M629.1 511.6h0M595.7 205.8h0M189.2 121.2h0M241.8 487.7h0M476.0 327.7h0M441.8 279.7h0M435.2 113.4h0M510.9 252.0h0M518.6 85.6h0M536.2 295.9h0M435.3 442.1h0M286.7 155.9h0M639.2 325.5h0M407.2 543.2h0M299.5 245.2h0M590.0 286.9h0M236.0 454.6h0M505.3 344.6h0M427.5 169.0h0M358.9 114.9h0M476.7 405.3h0" stroke="#f3f0c0" stroke-width="1.25" stroke-linecap="round" fill="none" opacity="0.8"/>
<path d="M452.3 612.7h0M404.2 98.6h0M618.1 459.4h0M270.6 626.2h0M216.1 399.4h0M530.9 190.2h0M587.7 95.2h0M463.5 458.3h0M482.1 110.4h0M420.0 602.1h0M149.8 323.9h0M196.4 504.5h0M414.3 510.9h0M266.3 478.1h0M272.2 169.1h0M257.4 108.4h0M586.0 373.9h0M434.7 286.1h0M156.1 401.6h0M281.5 477.4h0M425.1 192.6h0M409.8 403.7h0M288.3 469.1h0M457.2 28.3h0" stroke="#f3f0c0" stroke-width="1.25" stroke-linecap="round" fill="none" opacity="0.9"/>
<path d="M346.0 292.0h0M372.9 570.8h0M509.6 557.2h0M149.2 466.4h0M286.2 587.1h0M456.8 296.3h0M443.0 409.4h0M338.4 442.1h0M475.9 332.6h0M283.3 540.1h0M626.6 477.7h0M112.8 344.3h0M216.2 508.1h0M204.9 287.2h0M549.2 450.0h0M399.5 508.5h0M139.5 486.7h0M192.4 416.1h0M303.3 109.1h0M487.8 117.0h0M183.4 371.9h0M359.5 93.0h0M177.3 296.4h0M132.1 405.3h0" stroke="#f3f0c0" stroke-width="1.5" stroke-linecap="round" fill="none" opacity="0.6"/>
<path d="M268.1 617.5h0M485.2 583.1h0M355.5 38.7h0M499.2 223.7h0M586.6 70.8h0M619.0 110.2h0M555.1 421.1h0M476.9 505.3h0M304.9 381.8h0M416.2 225.2h0M442.3 9.1h0M436.9 5.9h0M428.5 599.1h0M579.8 91.6h0M299.0 170.2h0M626.5 506.3h0M297.9 39.2h0M302.5 30.7h0M626.6 370.3h0M450.4 342.5h0M196.4 223.0h0M218.1 254.9h0M354.0 624.4h0M425.4 463.4h0M656.6 351.8h0M288.8 419.2h0M317.8 609.5h0M317.1 231.2h0M351.3 287.7h0M207.3 321.4h0M366.9 355.2h0M231.6 507.4h0M282.8 148.2h0M320.3 336.2h0M299.6 352.6h0M438.6 602.1h0M197.7 309.6h0M653.2 333.7h0M304.1 99.8h0M279.2 223.9h0M264.0 154.1h0M223.6 184.7h0M322.6 53.4h0M649.2 387.7h0M276.7 488.7h0M364.6 80.0h0M202.6 439.2h0" stroke="#f3f0c0" stroke-width="1.5" stroke-linecap="round" fill="none" opacity="0.8"/>
<path d="M548.6 27.5h0M611.3 277.8h0M406.8 354.6h0M464.2 314.5h0M399.4 588.8h0M453.9 624.7h0M401.0 532.3h0M502.5 545.3h0M321.1 317.4h0M129.6 344.2h0M259.9 587.3h0M187.2 553.5h0M205.8 494.1h0M227.0 283.7h0M194.3 140.3h0M586.2 346.3h0M344.0 344.0h0M255.4 101.4h0M312.7 539.7h0" stroke="#f3f0c0" stroke-width="1.5" stroke-linecap="round" fill="none" opacity="0.9"/>
<path d="M158 168h0M161 511h0M144 298h0M622 295h0M288 97h0M185 176h0M572 629h0M186 402h0M211 89h0M322 19h0M509 2h0M502 434h0M140 491h0M453 233h0M151 245h0M302 344h0M433 450h0M366 292h0M231 351h0" stroke="#f3f0c0" stroke-width="1.75" stroke-linecap="round" fill="none" opacity="0.6"/>
<path d="M173 169h0M173 148h0M570 29h0M279 557h0M311 326h0M247 40h0M147 401h0M462 144h0M432 296h0M444 472h0M471 535h0M456 443h0M342 371h0M125 352h0M460 13h0M390 203h0M468 506h0M604 511h0M189 249h0M639 277h0M607 542h0M323 240h0M485 171h0M204 622h0M502 87h0M139 519h0M259 149h0M211 259h0M390 367h0M239 29h0M607 365h0M148 496h0M427 211h0M115 317h0M227 490h0M473 184h0M559 22h0M502 0h0M316 247h0M227 595h0M470 474h0M221 579h0M212 150h0M199 600h0M590 587h0M187 92h0M328 617h0M179 143h0M165 377h0" stroke="#f3f0c0" stroke-width="1.75" stroke-linecap="round" fill="none" opacity="0.8"/>
<path d="M246 77h0M634 193h0M159 197h0M548 125h0M215 531h0M139 366h0M496 238h0M627 295h0M136 306h0M228 582h0M166 259h0M249 285h0M135 517h0M342 169h0M423 417h0M211 430h0M542 313h0M139 497h0M135 449h0M141 289h0M396 82h0M180 118h0M172 198h0M165 398h0" stroke="#f3f0c0" stroke-width="1.75" stroke-linecap="round" fill="none" opacity="0.9"/>
<path d="M141 308h0M264 149h0M508 509h0M269 588h0M576 517h0M364 101h0M277 454h0M231 616h0M137 311h0M187 156h0M174 148h0M580 621h0" stroke="#f3f0c0" stroke-width="2.0" stroke-linecap="round" fill="none" opacity="0.6"/>
<path d="M305 380h0M131 256h0M408 19h0M346 302h0M238 534h0M422 578h0M546 392h0M148 380h0M238 581h0M586 71h0M506 178h0M509 442h0M339 526h0M647 218h0M339 560h0M396 200h0M472 362h0M187 559h0M640 208h0M141 444h0M339 474h0M185 425h0M235 169h0M405 263h0M475 457h0M306 470h0" stroke="#f3f0c0" stroke-width="2.0" stroke-linecap="round" fill="none" opacity="0.8"/>
<path d="M356 102h0M326 314h0M630 251h0M448 176h0M181 155h0M272 408h0M446 472h0M265 501h0M150 552h0M624 545h0" stroke="#f3f0c0" stroke-width="2.0" stroke-linecap="round" fill="none" opacity="0.9"/>
<path d="M471 38h0M459 298h0M202 237h0M490 514h0M193 523h0M638 336h0" stroke="#f3f0c0" stroke-width="2.25" stroke-linecap="round" fill="none" opacity="0.6"/>
<path d="M380 455h0M614 521h0M242 486h0M243 99h0M547 238h0M401 566h0M534 521h0M299 458h0M270 134h0M464 283h0M218 174h0M295 95h0M516 457h0M612 298h0M403 61h0M358 398h0M507 497h0M193 257h0" stroke="#f3f0c0" stroke-width="2.25" stroke-linecap="round" fill="none" opacity="0.8"/>
<path d="M476 312h0M490 147h0M509 180h0M388 382h0M429 388h0M516 261h0M470 98h0M449 175h0M447 417h0M512 396h0M486 412h0M548 80h0" stroke="#f3f0c0" stroke-width="2.25" stroke-linecap="round" fill="none" opacity="0.9"/>
<path d="M134 396h0M206 602h0M245 39h0M194 144h0" stroke="#f3f0c0" stroke-width="2.5" stroke-linecap="round" fill="none" opacity="0.6"/>
<path d="M165 468h0M160 459h0" stroke="#f3f0c0" stroke-width="2.5" stroke-linecap="round" fill="none" opacity="0.8"/>
<path d="M181 172h0M183 104h0" stroke="#f3f0c0" stroke-width="2.5" stroke-linecap="round" fill="none" opacity="0.9"/>
</g>
<circle cx="254.6" cy="140.8" r="5.0" fill="url(#sg)"/>
<circle cx="254.6" cy="140.8" r="8.0" fill="url(#sh)"/>
<circle cx="169.0" cy="115.7" r="3.1" fill="url(#sg)"/>
<circle cx="168.5" cy="147.2" r="3.1" fill="url(#sg)"/>
<circle cx="115.7" cy="109.8" r="2.8" fill="url(#sgy)"/>
<circle cx="225.8" cy="56.3" r="2.8" fill="url(#sgm)"/>
<circle cx="161.9" cy="24.2" r="2.8" fill="url(#sgm)"/>
<circle cx="224.1" cy="133.8" r="2.6" fill="url(#sgm)"/>
<circle cx="235.4" cy="142.5" r="2.6" fill="url(#sgm)"/>
<circle cx="203.0" cy="103.3" r="2.6" fill="url(#sgm)"/>
<circle cx="279.7" cy="78.6" r="2.1" fill="url(#sgy)"/>
<circle cx="284.7" cy="126.0" r="2.1" fill="url(#sgy)"/>
<circle cx="143.2" cy="105.6" r="1.9" fill="url(#sgy)"/>
<circle cx="181.9" cy="102.1" r="1.9" fill="url(#sgy)"/>
<circle cx="207.7" cy="43.4" r="1.9" fill="url(#sgy)"/>
<circle cx="238.2" cy="43.0" r="1.9" fill="url(#sgy)"/>
<circle cx="23.5" cy="172.0" r="2.8" fill="url(#sgy)"/>
<circle cx="43.4" cy="189.6" r="2.1" fill="url(#sgy)"/>
<circle cx="106.8" cy="190.6" r="1.9" fill="url(#sgy)"/>
<circle cx="98.1" cy="146.0" r="1.9" fill="url(#sgy)"/>
<circle cx="278.6" cy="165.5" r="1.9" fill="url(#sgy)"/>
<circle cx="299.2" cy="14.6" r="1.9" fill="url(#sgy)"/>
<circle cx="161.9" cy="57.0" r="1.9" fill="url(#sgy)"/>
<circle cx="102.6" cy="58.7" r="2.1" fill="url(#sgy)"/>
<circle cx="46.9" cy="162.0" r="1.9" fill="url(#sgy)"/>
<circle cx="436.7" cy="113.8" r="5.0" fill="url(#sg)"/>
<circle cx="436.7" cy="113.8" r="8.0" fill="url(#sh)"/>
<circle cx="563.0" cy="66.9" r="3.3" fill="url(#sg)"/>
<circle cx="371.5" cy="120.2" r="3.0" fill="url(#sg)"/>
<circle cx="399.2" cy="140.8" r="2.8" fill="url(#sgm)"/>
<circle cx="405.0" cy="197.1" r="3.7" fill="url(#sg)"/>
<circle cx="467.7" cy="184.7" r="3.5" fill="url(#sg)"/>
<circle cx="479.0" cy="199.0" r="3.3" fill="url(#sg)"/>
<circle cx="483.2" cy="156.5" r="2.8" fill="url(#sgm)"/>
<circle cx="510.0" cy="135.0" r="2.6" fill="url(#sgm)"/>
<circle cx="525.9" cy="120.9" r="2.6" fill="url(#sgm)"/>
<circle cx="568.2" cy="45.3" r="2.6" fill="url(#sgm)"/>
<circle cx="385.6" cy="51.2" r="1.9" fill="url(#sgy)"/>
<circle cx="529.4" cy="18.8" r="1.9" fill="url(#sgy)"/>
<circle cx="544.7" cy="179.1" r="2.6" fill="url(#sgm)"/>
<circle cx="493.0" cy="181.9" r="2.8" fill="url(#sgm)"/>
<circle cx="447.3" cy="189.0" r="2.6" fill="url(#sgm)"/>
<circle cx="456.0" cy="202.3" r="2.8" fill="url(#sgm)"/>
<circle cx="443.8" cy="205.4" r="2.8" fill="url(#sgm)"/>
<circle cx="387.4" cy="168.5" r="2.1" fill="url(#sgy)"/>
<circle cx="352.9" cy="182.4" r="2.1" fill="url(#sgy)"/>
<circle cx="416.8" cy="162.0" r="1.9" fill="url(#sgy)"/>
<circle cx="588.1" cy="206.5" r="3.1" fill="url(#sg)"/>
<circle cx="556.4" cy="115.7" r="1.9" fill="url(#sgy)"/>
<circle cx="339.3" cy="140.3" r="1.9" fill="url(#sgy)"/>
<circle cx="465.4" cy="58.0" r="1.9" fill="url(#sgy)"/>
<circle cx="612.7" cy="59.8" r="1.9" fill="url(#sgy)"/>
<circle cx="431.6" cy="191.3" r="1.9" fill="url(#sgy)"/>
<circle cx="500.6" cy="158.4" r="1.9" fill="url(#sgy)"/>
<circle cx="469.1" cy="146.7" r="1.9" fill="url(#sgy)"/>
<circle cx="364.0" cy="103.3" r="1.9" fill="url(#sgy)"/>
<circle cx="340.0" cy="81.0" r="1.9" fill="url(#sgy)"/>
<circle cx="877.5" cy="74.4" r="4.1" fill="url(#sgy)"/>
<circle cx="887.0" cy="156.5" r="3.7" fill="url(#sgy)"/>
<circle cx="713.2" cy="111.5" r="3.0" fill="url(#sg)"/>
<circle cx="671.6" cy="59.4" r="2.8" fill="url(#sgm)"/>
<circle cx="745.6" cy="55.2" r="2.8" fill="url(#sgy)"/>
<circle cx="693.2" cy="146.2" r="2.6" fill="url(#sgm)"/>
<circle cx="841.8" cy="39.4" r="3.1" fill="url(#sgy)"/>
<circle cx="853.5" cy="33.6" r="2.6" fill="url(#sgy)"/>
<circle cx="873.0" cy="93.4" r="3.0" fill="url(#sgy)"/>
<circle cx="845.3" cy="117.3" r="2.8" fill="url(#sgy)"/>
<circle cx="840.1" cy="122.0" r="2.1" fill="url(#sgy)"/>
<circle cx="887.5" cy="132.6" r="2.8" fill="url(#sgy)"/>
<circle cx="900.5" cy="143.2" r="2.8" fill="url(#sgy)"/>
<circle cx="874.6" cy="180.7" r="3.0" fill="url(#sgy)"/>
<circle cx="824.6" cy="77.0" r="2.1" fill="url(#sgy)"/>
<circle cx="669.3" cy="203.7" r="2.8" fill="url(#sgm)"/>
<circle cx="621.2" cy="121.6" r="2.8" fill="url(#sgm)"/>
<circle cx="632.9" cy="70.4" r="1.9" fill="url(#sgy)"/>
<circle cx="653.3" cy="40.4" r="1.9" fill="url(#sgy)"/>
<circle cx="728.0" cy="21.8" r="1.9" fill="url(#sgy)"/>
<circle cx="681.0" cy="137.3" r="1.9" fill="url(#sgy)"/>
<circle cx="797.2" cy="156.8" r="2.1" fill="url(#sgy)"/>
<circle cx="881.7" cy="17.6" r="2.6" fill="url(#sgy)"/>
<circle cx="884.7" cy="98.1" r="2.1" fill="url(#sgy)"/>
<circle cx="120.2" cy="268.7" r="3.1" fill="url(#sgy)"/>
<circle cx="134.5" cy="268.7" r="2.8" fill="url(#sgy)"/>
<circle cx="234.7" cy="211.9" r="3.0" fill="url(#sg)"/>
<circle cx="198.3" cy="226.4" r="2.6" fill="url(#sgm)"/>
<circle cx="255.8" cy="293.8" r="3.0" fill="url(#sg)"/>
<circle cx="231.9" cy="311.4" r="3.0" fill="url(#sg)"/>
<circle cx="280.5" cy="408.8" r="3.3" fill="url(#sg)"/>
<circle cx="56.3" cy="351.5" r="3.0" fill="url(#sgy)"/>
<circle cx="73.9" cy="317.5" r="2.6" fill="url(#sgy)"/>
<circle cx="93.9" cy="318.4" r="2.1" fill="url(#sgy)"/>
<circle cx="155.4" cy="336.0" r="2.6" fill="url(#sgm)"/>
<circle cx="207.7" cy="366.1" r="2.6" fill="url(#sgm)"/>
<circle cx="224.1" cy="367.2" r="1.9" fill="url(#sgy)"/>
<circle cx="243.6" cy="382.0" r="1.9" fill="url(#sgy)"/>
<circle cx="150.2" cy="322.2" r="1.9" fill="url(#sgy)"/>
<circle cx="83.3" cy="383.7" r="1.9" fill="url(#sgy)"/>
<circle cx="307.0" cy="295.7" r="2.6" fill="url(#sgm)"/>
<circle cx="301.6" cy="227.1" r="1.9" fill="url(#sgy)"/>
<circle cx="100.4" cy="291.7" r="1.9" fill="url(#sgy)"/>
<circle cx="235.9" cy="263.5" r="1.9" fill="url(#sgy)"/>
<circle cx="257.7" cy="332.0" r="1.9" fill="url(#sgy)"/>
<circle cx="31.7" cy="346.1" r="2.1" fill="url(#sgy)"/>
<circle cx="112.6" cy="242.9" r="1.9" fill="url(#sgy)"/>
<circle cx="457.9" cy="305.0" r="4.5" fill="url(#sg)"/>
<circle cx="489.5" cy="294.5" r="4.5" fill="url(#sg)"/>
<circle cx="573.3" cy="251.5" r="4.5" fill="url(#sg)"/>
<circle cx="534.6" cy="252.2" r="3.7" fill="url(#sg)"/>
<circle cx="409.7" cy="228.8" r="3.7" fill="url(#sg)"/>
<circle cx="439.5" cy="249.4" r="3.5" fill="url(#sg)"/>
<circle cx="443.8" cy="222.9" r="3.7" fill="url(#sg)"/>
<circle cx="458.6" cy="218.2" r="3.3" fill="url(#sg)"/>
<circle cx="483.2" cy="215.2" r="3.1" fill="url(#sg)"/>
<circle cx="463.0" cy="234.6" r="3.1" fill="url(#sg)"/>
<circle cx="453.6" cy="230.7" r="2.6" fill="url(#sgm)"/>
<circle cx="461.4" cy="227.6" r="2.6" fill="url(#sgm)"/>
<circle cx="469.1" cy="224.1" r="2.6" fill="url(#sgm)"/>
<circle cx="541.9" cy="237.7" r="3.0" fill="url(#sg)"/>
<circle cx="457.4" cy="255.0" r="2.6" fill="url(#sgm)"/>
<circle cx="457.4" cy="260.0" r="2.6" fill="url(#sgm)"/>
<circle cx="482.5" cy="268.7" r="2.8" fill="url(#sgm)"/>
<circle cx="510.0" cy="319.6" r="2.8" fill="url(#sgm)"/>
<circle cx="372.7" cy="323.8" r="3.0" fill="url(#sg)"/>
<circle cx="534.1" cy="378.5" r="3.0" fill="url(#sg)"/>
<circle cx="451.5" cy="377.8" r="2.8" fill="url(#sgm)"/>
<circle cx="358.1" cy="357.4" r="2.6" fill="url(#sgm)"/>
<circle cx="413.3" cy="394.7" r="2.6" fill="url(#sgm)"/>
<circle cx="390.5" cy="375.0" r="1.9" fill="url(#sgy)"/>
<circle cx="441.4" cy="362.5" r="2.6" fill="url(#sgm)"/>
<circle cx="419.1" cy="353.6" r="1.9" fill="url(#sgy)"/>
<circle cx="314.7" cy="388.4" r="2.6" fill="url(#sgm)"/>
<circle cx="521.9" cy="265.2" r="2.6" fill="url(#sgm)"/>
<circle cx="505.5" cy="246.4" r="2.6" fill="url(#sgm)"/>
<circle cx="384.6" cy="244.0" r="2.6" fill="url(#sgm)"/>
<circle cx="394.5" cy="223.6" r="1.9" fill="url(#sgy)"/>
<circle cx="418.7" cy="214.7" r="2.6" fill="url(#sgm)"/>
<circle cx="376.4" cy="289.3" r="1.9" fill="url(#sgy)"/>
<circle cx="552.9" cy="268.7" r="1.9" fill="url(#sgy)"/>
<circle cx="603.4" cy="295.0" r="1.9" fill="url(#sgy)"/>
<circle cx="551.7" cy="369.6" r="1.9" fill="url(#sgy)"/>
<circle cx="543.5" cy="370.8" r="1.9" fill="url(#sgy)"/>
<circle cx="452.5" cy="322.6" r="2.6" fill="url(#sgm)"/>
<circle cx="463.7" cy="309.7" r="1.9" fill="url(#sgy)"/>
<circle cx="445.6" cy="332.0" r="2.8" fill="url(#sgm)"/>
<circle cx="435.6" cy="282.8" r="1.9" fill="url(#sgy)"/>
<circle cx="405.8" cy="282.3" r="1.9" fill="url(#sgy)"/>
<circle cx="619.3" cy="371.9" r="1.9" fill="url(#sgy)"/>
<circle cx="572.9" cy="282.3" r="1.9" fill="url(#sgy)"/>
<circle cx="630.6" cy="253.9" r="3.1" fill="url(#sg)"/>
<circle cx="689.7" cy="309.7" r="3.3" fill="url(#sg)"/>
<circle cx="676.3" cy="364.2" r="3.0" fill="url(#sg)"/>
<circle cx="686.4" cy="373.6" r="3.0" fill="url(#sg)"/>
<circle cx="737.3" cy="226.4" r="2.8" fill="url(#sgy)"/>
<circle cx="819.0" cy="338.4" r="3.1" fill="url(#sgy)"/>
<circle cx="835.9" cy="291.0" r="3.0" fill="url(#sgy)"/>
<circle cx="844.1" cy="300.4" r="2.8" fill="url(#sgy)"/>
<circle cx="886.4" cy="279.2" r="3.0" fill="url(#sgy)"/>
<circle cx="900.4" cy="253.4" r="2.8" fill="url(#sgy)"/>
<circle cx="873.5" cy="237.0" r="2.6" fill="url(#sgy)"/>
<circle cx="778.9" cy="269.4" r="2.6" fill="url(#sgy)"/>
<circle cx="743.7" cy="332.7" r="2.6" fill="url(#sgy)"/>
<circle cx="689.9" cy="346.1" r="2.6" fill="url(#sgm)"/>
<circle cx="769.0" cy="251.5" r="1.9" fill="url(#sgy)"/>
<circle cx="755.4" cy="220.1" r="1.9" fill="url(#sgy)"/>
<circle cx="868.3" cy="344.2" r="2.8" fill="url(#sgy)"/>
<circle cx="858.9" cy="384.8" r="2.8" fill="url(#sgy)"/>
<circle cx="900.4" cy="224.5" r="1.9" fill="url(#sgy)"/>
<circle cx="795.5" cy="322.6" r="1.9" fill="url(#sgy)"/>
<circle cx="765.0" cy="416.5" r="1.9" fill="url(#sgy)"/>
<circle cx="668.1" cy="264.0" r="1.9" fill="url(#sgy)"/>
<circle cx="760.8" cy="350.1" r="1.9" fill="url(#sgy)"/>
<circle cx="814.3" cy="361.8" r="1.9" fill="url(#sgy)"/>
<circle cx="843.4" cy="371.2" r="1.9" fill="url(#sgy)"/>
<circle cx="652.9" cy="236.5" r="1.9" fill="url(#sgy)"/>
<circle cx="722.8" cy="311.4" r="1.9" fill="url(#sgy)"/>
<circle cx="662.7" cy="290.5" r="1.9" fill="url(#sgy)"/>
<circle cx="126.3" cy="524.4" r="3.9" fill="url(#sgy)"/>
<circle cx="120.9" cy="523.3" r="2.1" fill="url(#sgy)"/>
<circle cx="31.2" cy="565.0" r="3.7" fill="url(#sgy)"/>
<circle cx="110.3" cy="449.3" r="3.0" fill="url(#sgy)"/>
<circle cx="267.5" cy="453.6" r="3.1" fill="url(#sg)"/>
<circle cx="255.3" cy="567.9" r="3.1" fill="url(#sg)"/>
<circle cx="258.2" cy="503.3" r="2.8" fill="url(#sgm)"/>
<circle cx="303.5" cy="492.3" r="2.8" fill="url(#sgm)"/>
<circle cx="157.7" cy="508.7" r="2.8" fill="url(#sgm)"/>
<circle cx="167.8" cy="535.0" r="2.8" fill="url(#sgm)"/>
<circle cx="198.3" cy="559.2" r="2.8" fill="url(#sgm)"/>
<circle cx="212.9" cy="578.4" r="2.8" fill="url(#sgm)"/>
<circle cx="173.7" cy="455.2" r="2.6" fill="url(#sgm)"/>
<circle cx="147.9" cy="478.7" r="2.6" fill="url(#sgy)"/>
<circle cx="274.6" cy="478.7" r="2.6" fill="url(#sgm)"/>
<circle cx="286.8" cy="473.5" r="1.9" fill="url(#sgy)"/>
<circle cx="225.3" cy="446.5" r="1.9" fill="url(#sgy)"/>
<circle cx="143.2" cy="602.4" r="2.6" fill="url(#sgy)"/>
<circle cx="41.5" cy="520.9" r="2.8" fill="url(#sgy)"/>
<circle cx="118.5" cy="590.9" r="1.9" fill="url(#sgy)"/>
<circle cx="69.9" cy="475.6" r="1.9" fill="url(#sgy)"/>
<circle cx="304.4" cy="567.9" r="1.9" fill="url(#sgy)"/>
<circle cx="178.4" cy="486.2" r="1.9" fill="url(#sgy)"/>
<circle cx="505.3" cy="455.7" r="6.0" fill="url(#sg)"/>
<circle cx="505.3" cy="455.7" r="9.6" fill="url(#sh)"/>
<circle cx="522.4" cy="486.4" r="3.9" fill="url(#sg)"/>
<circle cx="528.3" cy="483.4" r="3.1" fill="url(#sg)"/>
<circle cx="517.7" cy="487.6" r="2.6" fill="url(#sgm)"/>
<circle cx="469.6" cy="449.8" r="3.1" fill="url(#sg)"/>
<circle cx="332.8" cy="452.9" r="3.1" fill="url(#sg)"/>
<circle cx="326.4" cy="474.7" r="3.1" fill="url(#sg)"/>
<circle cx="447.8" cy="599.1" r="3.5" fill="url(#sg)"/>
<circle cx="583.0" cy="606.1" r="3.7" fill="url(#sg)"/>
<circle cx="483.0" cy="597.2" r="3.0" fill="url(#sg)"/>
<circle cx="326.9" cy="603.0" r="3.0" fill="url(#sg)"/>
<circle cx="436.7" cy="511.5" r="2.8" fill="url(#sgm)"/>
<circle cx="403.9" cy="569.7" r="2.8" fill="url(#sgm)"/>
<circle cx="367.5" cy="468.8" r="2.6" fill="url(#sgm)"/>
<circle cx="341.2" cy="500.3" r="2.6" fill="url(#sgm)"/>
<circle cx="353.4" cy="508.5" r="2.1" fill="url(#sgy)"/>
<circle cx="474.3" cy="545.6" r="2.6" fill="url(#sgm)"/>
<circle cx="520.0" cy="562.0" r="2.6" fill="url(#sgm)"/>
<circle cx="531.8" cy="431.7" r="2.6" fill="url(#sgm)"/>
<circle cx="441.9" cy="422.8" r="2.6" fill="url(#sgm)"/>
<circle cx="348.7" cy="607.7" r="2.1" fill="url(#sgy)"/>
<circle cx="556.4" cy="494.6" r="1.9" fill="url(#sgy)"/>
<circle cx="481.3" cy="439.2" r="1.9" fill="url(#sgy)"/>
<circle cx="398.0" cy="515.0" r="1.9" fill="url(#sgy)"/>
<circle cx="410.4" cy="512.2" r="1.9" fill="url(#sgy)"/>
<circle cx="491.2" cy="581.9" r="1.9" fill="url(#sgy)"/>
<circle cx="513.0" cy="461.8" r="2.1" fill="url(#sgy)"/>
<circle cx="582.2" cy="450.5" r="1.9" fill="url(#sgy)"/>
<circle cx="643.5" cy="450.0" r="3.3" fill="url(#sg)"/>
<circle cx="654.5" cy="489.7" r="3.1" fill="url(#sg)"/>
<circle cx="723.3" cy="492.8" r="2.8" fill="url(#sgm)"/>
<circle cx="757.3" cy="501.0" r="2.8" fill="url(#sgy)"/>
<circle cx="780.8" cy="452.2" r="2.8" fill="url(#sgy)"/>
<circle cx="891.8" cy="472.1" r="3.1" fill="url(#sgy)"/>
<circle cx="901.6" cy="455.2" r="2.8" fill="url(#sgy)"/>
<circle cx="839.4" cy="472.1" r="2.8" fill="url(#sgy)"/>
<circle cx="927.9" cy="528.4" r="3.1" fill="url(#sgy)"/>
<circle cx="885.2" cy="532.2" r="2.8" fill="url(#sgy)"/>
<circle cx="848.8" cy="573.7" r="3.1" fill="url(#sgy)"/>
<circle cx="882.8" cy="592.5" r="4.1" fill="url(#sgy)"/>
<circle cx="889.0" cy="587.0" r="3.0" fill="url(#sgy)"/>
<circle cx="877.0" cy="598.0" r="3.0" fill="url(#sgy)"/>
<circle cx="904.0" cy="590.1" r="3.1" fill="url(#sgy)"/>
<circle cx="875.8" cy="605.4" r="2.6" fill="url(#sgy)"/>
<circle cx="826.5" cy="587.8" r="3.0" fill="url(#sgy)"/>
<circle cx="709.9" cy="465.1" r="2.6" fill="url(#sgm)"/>
<circle cx="720.4" cy="468.1" r="1.9" fill="url(#sgy)"/>
<circle cx="692.0" cy="438.3" r="1.9" fill="url(#sgy)"/>
<circle cx="710.8" cy="586.6" r="2.6" fill="url(#sgm)"/>
<circle cx="732.6" cy="593.0" r="2.6" fill="url(#sgy)"/>
<circle cx="682.9" cy="607.7" r="1.9" fill="url(#sgy)"/>
<circle cx="775.4" cy="512.2" r="1.9" fill="url(#sgy)"/>
<circle cx="815.3" cy="495.8" r="1.9" fill="url(#sgy)"/>
<circle cx="808.9" cy="483.4" r="1.9" fill="url(#sgy)"/>
<circle cx="896.9" cy="501.0" r="2.6" fill="url(#sgy)"/>
<circle cx="742.0" cy="456.4" r="1.9" fill="url(#sgy)"/>
<circle cx="805.4" cy="529.1" r="1.9" fill="url(#sgy)"/>
<circle cx="841.3" cy="522.5" r="1.9" fill="url(#sgy)"/>
<circle cx="921.1" cy="549.8" r="1.9" fill="url(#sgy)"/>
<g filter="url(#sblur)">
<polygon points="0,-0.50 926,-0.50 926,3.64 0,4.48" fill="#7a1430" opacity="1"/>
<polygon points="0,3.98 926,3.14 926,6.24 0,7.68" fill="#bc2444" opacity="1"/>
<polygon points="0,7.18 926,5.74 926,8.84 0,10.88" fill="#b01c26" opacity="1"/>
<polygon points="12,10.38 926,8.34 926,10.79 12,13.28" fill="#883018" opacity="1"/>
<polygon points="12,12.78 926,10.29 926,13.00 12,16.00" fill="#a4601e" opacity="0.7"/>
<polygon points="-0.50,0 2.64,0 3.44,630 -0.50,630" fill="#c03070" opacity="1"/>
<polygon points="2.14,0 7.42,0 9.68,630 2.94,630" fill="#c01c30" opacity="1"/>
<polygon points="6.92,0 11.88,0 15.48,630 9.18,630" fill="#ac1a24" opacity="1"/>
<polygon points="11.38,11 14.19,11 18.49,630 14.98,630" fill="#762418" opacity="1"/>
<polygon points="13.69,11 16.50,11 21.50,630 17.99,630" fill="#985a1c" opacity="0.65"/>
</g>
<g opacity="0.62"><polygon points="0,0 926,0 926,10 0,13" filter="url(#grain2)"/>
<polygon points="0,0 13.5,0 18,630 0,630" filter="url(#grain2)"/></g>
<polygon points="926,0 931,0 931,630 930.5,630" fill="#000"/>
<polygon points="14,630 931,630 931,621.5" fill="#000"/>
<rect x="0" y="619" width="6" height="11" fill="#000"/>
</svg></div>
</div>
<div id="panel"></div>
<div id="hint">Click and drag to define an optional Region Of Interest (RoI) for optimization.</div>
<div class="lbl" style="left:0px;width:175.2px;top:769px;letter-spacing:-0.8px">RoI X1</div>
<div class="sb" style="left:192px;top:759px;width:35px"><i style="top:12px;font-size:11px;line-height:14px">-</i></div>
<div class="sl" style="left:228px;top:759px"><svg class="abs" style="left:0px;top:13.7px" width="3.4" height="6.6" viewBox="0 0 3.4 6.6"><path d="M0 0 L3.4 3.3 L0 6.6 Z" fill="#fff"/></svg><div class="val" style="letter-spacing:0.49px">0 pixels</div></div>
<div class="sb" style="left:587px;top:759px;width:36px"><i style="left:2px;top:14.5px;font-size:8px;line-height:12px">+</i></div>
<div class="sb" style="left:624px;top:759px;width:36px"><i style="top:8.5px;font-size:13.5px;line-height:18px">?</i></div>
<div class="lbl" style="left:0px;width:175.35px;top:806px;letter-spacing:-0.65px">RoI X2</div>
<div class="sb" style="left:192px;top:796px;width:35px"><i style="top:12px;font-size:11px;line-height:14px">-</i></div>
<div class="sl" style="left:228px;top:796px"><div class="fill" style="width:356px;background:#f8faf8"></div><div class="val dk" style="letter-spacing:0.25px">2664 pixels (-0)</div><svg class="abs" style="left:351.7px;top:12px" width="4.2" height="8" viewBox="0 0 4.2 8"><path d="M4.2 0 L0 4 L4.2 8 Z" fill="#000"/></svg></div>
<div class="sb" style="left:587px;top:796px;width:36px"><i style="left:2px;top:14.5px;font-size:8px;line-height:12px">+</i></div>
<div class="sb" style="left:624px;top:796px;width:36px"><i style="top:8.5px;font-size:13.5px;line-height:18px">?</i></div>
<div class="lbl" style="left:0px;width:176.13px;top:843px;letter-spacing:0.13px">Ignore Fine Detail &lt;</div>
<div class="sb" style="left:192px;top:833px;width:35px"><i style="top:12px;font-size:11px;line-height:14px">-</i></div>
<div class="sl" style="left:228px;top:833px"><svg class="abs" style="left:0px;top:13.7px" width="3.4" height="6.6" viewBox="0 0 3.4 6.6"><path d="M0 0 L3.4 3.3 L0 6.6 Z" fill="#fff"/></svg><div class="val" style="letter-spacing:1.4px">Off</div></div>
<div class="sb" style="left:587px;top:833px;width:36px"><i style="left:2px;top:14.5px;font-size:8px;line-height:12px">+</i></div>
<div class="sb" style="left:624px;top:833px;width:36px"><i style="top:8.5px;font-size:13.5px;line-height:18px">?</i></div>
<div class="lbl" style="left:0px;width:176.18px;top:880px;letter-spacing:0.18px">Detector Gamma</div>
<div class="sb" style="left:192px;top:870px;width:35px"><i style="top:12px;font-size:11px;line-height:14px">-</i></div>
<div class="sl" style="left:228px;top:870px"><div class="fill" style="width:35px;background:#f8faf8"></div><svg class="abs" style="left:35px;top:13.7px" width="3.4" height="6.6" viewBox="0 0 3.4 6.6"><path d="M0 0 L3.4 3.3 L0 6.6 Z" fill="#fff"/></svg><div class="val" style="letter-spacing:-1.0px">1.00</div></div>
<div class="sb" style="left:587px;top:870px;width:36px"><i style="left:2px;top:14.5px;font-size:8px;line-height:12px">+</i></div>
<div class="sb" style="left:624px;top:870px;width:36px"><i style="top:8.5px;font-size:13.5px;line-height:18px">?</i></div>
<div class="lbl" style="left:661px;width:175.2px;top:769px;letter-spacing:-0.8px">RoI Y1</div>
<div class="sb" style="left:853px;top:759px;width:35px"><i style="top:12px;font-size:11px;line-height:14px">-</i></div>
<div class="sl" style="left:889px;top:759px"><svg class="abs" style="left:0px;top:13.7px" width="3.4" height="6.6" viewBox="0 0 3.4 6.6"><path d="M0 0 L3.4 3.3 L0 6.6 Z" fill="#fff"/></svg><div class="val" style="letter-spacing:0.49px">0 pixels</div></div>
<div class="sb" style="left:1248px;top:759px;width:36px"><i style="left:2px;top:14.5px;font-size:8px;line-height:12px">+</i></div>
<div class="sb" style="left:1285px;top:759px;width:36px"><i style="top:8.5px;font-size:13.5px;line-height:18px">?</i></div>
<div class="lbl" style="left:661px;width:175.36px;top:806px;letter-spacing:-0.64px">RoI Y2</div>
<div class="sb" style="left:853px;top:796px;width:35px"><i style="top:12px;font-size:11px;line-height:14px">-</i></div>
<div class="sl" style="left:889px;top:796px"><div class="fill" style="width:356px;background:#f8faf8"></div><div class="val dk" style="letter-spacing:0.25px">1804 pixels (-0)</div><svg class="abs" style="left:351.7px;top:12px" width="4.2" height="8" viewBox="0 0 4.2 8"><path d="M4.2 0 L0 4 L4.2 8 Z" fill="#000"/></svg></div>
<div class="sb" style="left:1248px;top:796px;width:36px"><i style="left:2px;top:14.5px;font-size:8px;line-height:12px">+</i></div>
<div class="sb" style="left:1285px;top:796px;width:36px"><i style="top:8.5px;font-size:13.5px;line-height:18px">?</i></div>
<div class="lbl" style="left:661px;width:176.1px;top:843px;letter-spacing:0.1px">Outside RoI Influence</div>
<div class="sb dis" style="left:853px;top:833px;width:35px"><i style="top:12px;font-size:11px;line-height:14px">-</i></div>
<div class="sl" style="left:889px;top:833px"><div class="fill" style="width:53px;background:#7c827e"></div><svg class="abs" style="left:53px;top:13.7px" width="3.4" height="6.6" viewBox="0 0 3.4 6.6"><path d="M0 0 L3.4 3.3 L0 6.6 Z" fill="#7c827e"/></svg><div class="val gr" style="letter-spacing:-0.9px">15 %</div></div>
<div class="sb dis" style="left:1248px;top:833px;width:36px"><i style="left:2px;top:14.5px;font-size:8px;line-height:12px">+</i></div>
<div class="sb" style="left:1285px;top:833px;width:36px"><i style="top:8.5px;font-size:13.5px;line-height:18px">?</i></div>
<div class="lbl" style="left:661px;width:176.28px;top:880px;letter-spacing:0.28px">Shadow Linearity</div>
<div class="sb" style="left:853px;top:870px;width:35px"><i style="top:12px;font-size:11px;line-height:14px">-</i></div>
<div class="sl" style="left:889px;top:870px"><div class="fill" style="width:178px;background:#f8faf8"></div><div class="val" style="letter-spacing:-0.07px"><span style="color:#111">50</span> %</div><svg class="abs" style="left:178px;top:13.7px" width="3.4" height="6.6" viewBox="0 0 3.4 6.6"><path d="M0 0 L3.4 3.3 L0 6.6 Z" fill="#fff"/></svg></div>
<div class="sb" style="left:1248px;top:870px;width:36px"><i style="left:2px;top:14.5px;font-size:8px;line-height:12px">+</i></div>
<div class="sb" style="left:1285px;top:870px;width:36px"><i style="top:8.5px;font-size:13.5px;line-height:18px">?</i></div>
</body></html>
